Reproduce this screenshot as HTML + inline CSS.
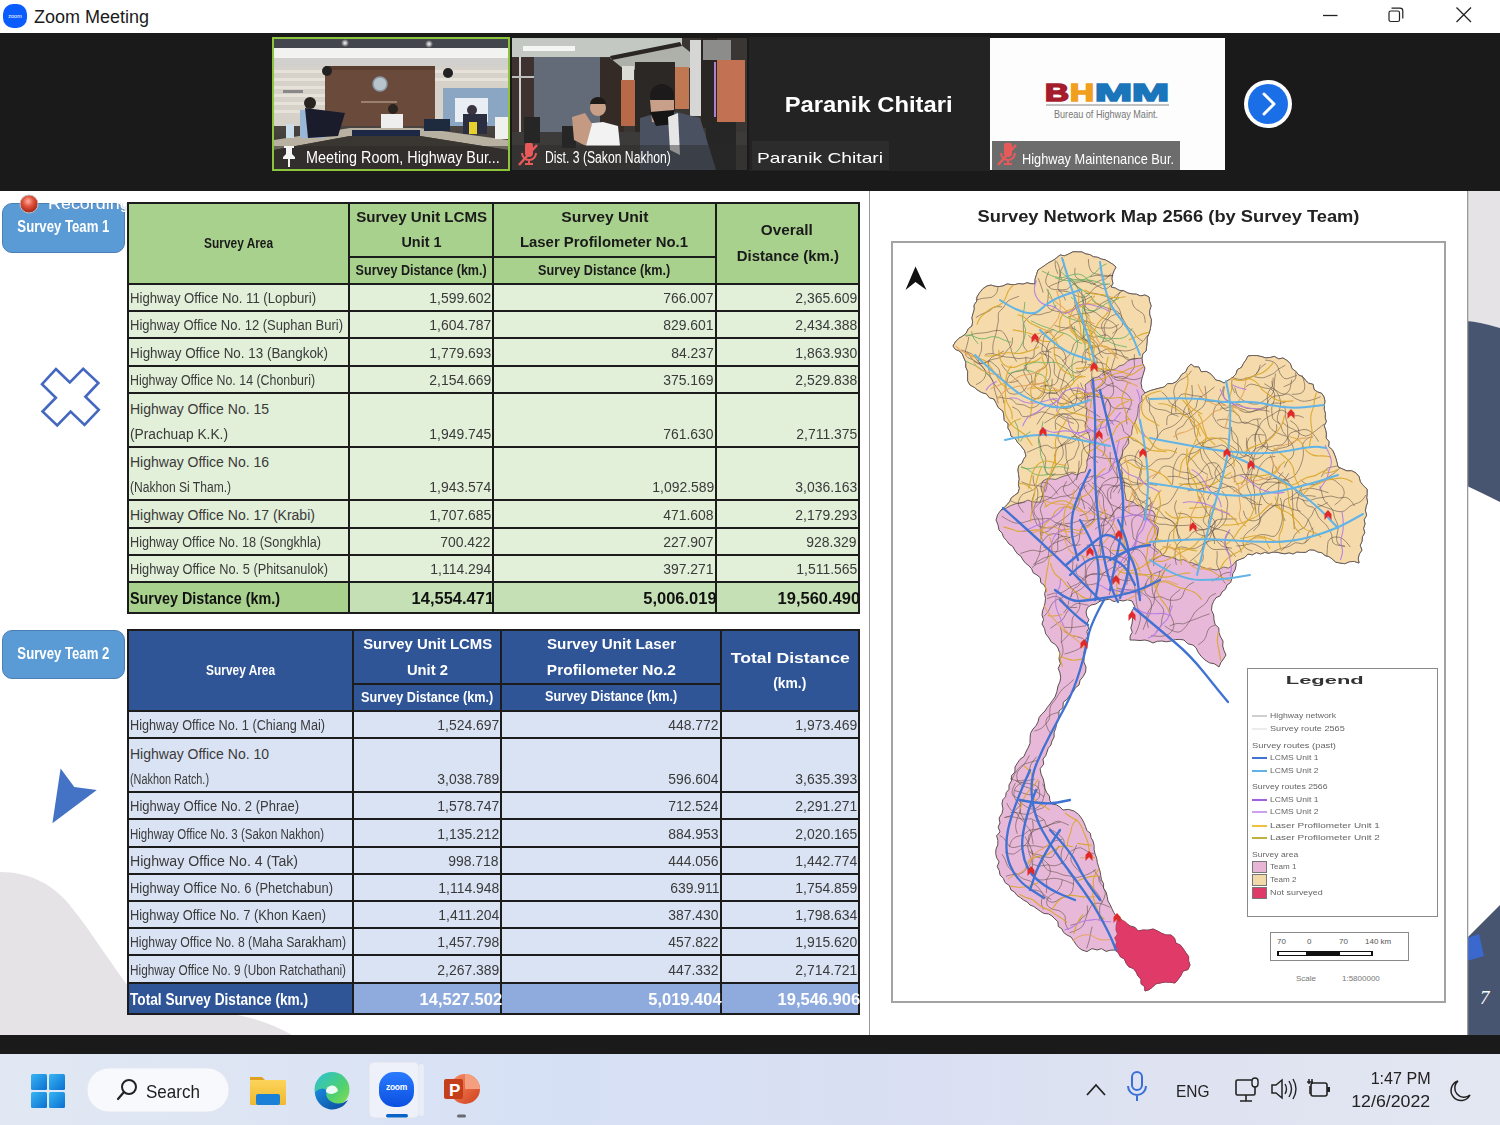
<!DOCTYPE html>
<html><head><meta charset="utf-8"><title>Zoom Meeting</title>
<style>
html,body{margin:0;padding:0;width:1500px;height:1125px;overflow:hidden;background:#fff;}
body{position:relative;font-family:'Liberation Sans',sans-serif;}
.t{position:absolute;white-space:nowrap;line-height:1;}
.b{position:absolute;box-sizing:border-box;}
svg{position:absolute;}
</style></head><body>

<div class="b" style="left:0px;top:0px;width:1500px;height:34px;background:#fff;"></div>
<svg style="left:3px;top:4px" width="24" height="24" viewBox="0 0 24 24"><rect x="0" y="0" width="24" height="24" rx="10" fill="#0b5cff"/><text x="12" y="14" font-family="Liberation Sans" font-size="5.5" fill="#fff" text-anchor="middle">zoom</text></svg>
<div class="t" style="top:8.0px;font-size:18px;color:#1b1b1b;font-family:'Liberation Sans',sans-serif;left:34.0px;transform-origin:0 0;">Zoom Meeting</div>
<svg style="left:1300px;top:0" width="200" height="34" viewBox="0 0 200 34">
<line x1="23" y1="15.5" x2="37.5" y2="15.5" stroke="#222" stroke-width="1.3"/>
<rect x="89" y="11" width="10.5" height="10.5" rx="1.8" fill="none" stroke="#222" stroke-width="1.2"/>
<path d="M91.5 8.2 H100 Q102.8 8.2 102.8 11 V18.5" fill="none" stroke="#222" stroke-width="1.2"/>
<path d="M156.5 7.5 L171 22 M171 7.5 L156.5 22" stroke="#222" stroke-width="1.3"/>
</svg>
<div class="b" style="left:0px;top:33px;width:1500px;height:158px;background:#1a1a1a;"></div>
<svg style="left:272px;top:37px;filter:blur(0.7px)" width="238" height="134" viewBox="272 37 238 134">
<defs>
<linearGradient id="t1floor" x1="0" y1="0" x2="0" y2="1"><stop offset="0" stop-color="#4a4540"/><stop offset="1" stop-color="#2e2b28"/></linearGradient>
<radialGradient id="lamp"><stop offset="0" stop-color="#fff"/><stop offset="1" stop-color="#fff" stop-opacity="0"/></radialGradient>
</defs>
<rect x="272" y="37" width="238" height="134" fill="#d6d2ca"/>
<rect x="274" y="39" width="234" height="9" fill="#43464c"/>
<circle cx="345" cy="43" r="4" fill="url(#lamp)"/><circle cx="429" cy="44" r="4" fill="url(#lamp)"/>
<rect x="274" y="48" width="234" height="10" fill="#f2f2f0"/>
<rect x="274" y="58" width="234" height="9" fill="#d2d0cc"/>
<g fill="#e6e2da"><rect x="274" y="70" width="52" height="3"/><rect x="274" y="78" width="52" height="3"/><rect x="274" y="86" width="52" height="3"/><rect x="274" y="94" width="52" height="3"/><rect x="274" y="102" width="52" height="3"/><rect x="274" y="110" width="52" height="3"/><rect x="435" y="70" width="73" height="3"/><rect x="435" y="78" width="73" height="3"/></g>
<rect x="283" y="90" width="20" height="3" fill="#888"/>
<rect x="325" y="66" width="110" height="63" fill="#6a4a3a"/>
<rect x="325" y="66" width="110" height="4" fill="#5a3e30"/>
<circle cx="380" cy="84" r="7" fill="#b8c4cc" stroke="#8a9aa8" stroke-width="1.5"/>
<rect x="361" y="101" width="36" height="2" fill="#9a8070"/>
<circle cx="327" cy="71" r="5" fill="#222"/><circle cx="448" cy="73" r="5" fill="#222"/>
<rect x="443" y="88" width="65" height="38" fill="#8aa6c2"/>
<rect x="455" y="98" width="33" height="24" fill="#e8eef4"/>
<rect x="272" y="126" width="238" height="45" fill="url(#t1floor)"/>
<path d="M274 140 L350 128 L420 128 L508 140 L508 150 L420 136 L350 136 L274 150 Z" fill="#b8b0a0"/>
<rect x="352" y="130" width="68" height="8" fill="#1c2844"/>
<path d="M274 150 L350 136 L420 136 L508 150 L508 171 L274 171 Z" fill="#3a3632"/>
<rect x="300" y="110" width="25" height="28" fill="#9ab6d6"/><circle cx="310" cy="103" r="6" fill="#2a2420"/>
<path d="M305 108 L345 113 L338 136 L308 138 Z" fill="#1a1c2c"/>
<rect x="286" y="124" width="8" height="14" fill="#c8dcea"/>
<rect x="381" y="114" width="22" height="14" fill="#eeeeee"/><circle cx="393" cy="109" r="5" fill="#2a2420"/>
<rect x="424" y="119" width="26" height="12" fill="#1e2a3e"/>
<rect x="463" y="114" width="24" height="20" fill="#2a2e40"/><rect x="469" y="122" width="8" height="12" fill="#e8d030"/><circle cx="472" cy="110" r="5" fill="#3a3440"/>
<rect x="495" y="117" width="13" height="22" fill="#f0f0ee"/>
<rect x="274" y="146" width="234" height="25" fill="#2a2826" opacity="0.55"/>
<rect x="273" y="38" width="236" height="132" fill="none" stroke="#8cc43c" stroke-width="2"/>
</svg>
<svg style="left:278px;top:144px" width="22" height="24" viewBox="0 0 22 24"><path d="M6 2 h10 v2 h-2 v6 l3 3 v2 h-5 v8 h-2 v-8 h-5 v-2 l3 -3 v-6 h-2 z" fill="#f4f4f4"/></svg>
<div class="t" style="top:150.4px;font-size:16px;color:#ffffff;font-family:'Liberation Sans',sans-serif;left:306.0px;transform-origin:0 0;transform:scaleX(0.897);">Meeting Room, Highway Bur...</div>
<svg style="left:512px;top:38px;filter:blur(0.7px)" width="235" height="132" viewBox="512 38 235 132">
<rect x="512" y="38" width="235" height="132" fill="#3a3634"/>
<rect x="512" y="38" width="170" height="19" fill="#c4c8c2"/>
<rect x="523" y="46" width="52" height="5" fill="#f4f6f4"/>
<rect x="512" y="57" width="22" height="80" fill="#3e3230"/><rect x="519" y="57" width="2" height="80" fill="#cfcfcf"/><rect x="512" y="76" width="22" height="2" fill="#bdbdbd"/>
<rect x="534" y="57" width="66" height="75" fill="#636a78"/>
<rect x="600" y="58" width="24" height="82" fill="#342a26"/>
<path d="M610 58 L680 44 L690 52 L690 68 L625 70 Z" fill="#aeb0aa"/><path d="M610 56 L680 42 L682 46 L612 60 Z" fill="#2a2624"/>
<rect x="622" y="66" width="12" height="14" fill="#dcdcd6"/>
<rect x="621" y="80" width="14" height="46" fill="#b86a48"/>
<rect x="635" y="62" width="40" height="80" fill="#2c2826"/>
<rect x="675" y="67" width="14" height="42" fill="#c07852"/>
<rect x="690" y="40" width="11" height="76" fill="#d6d6d4"/>
<rect x="701" y="38" width="16" height="90" fill="#2a2624"/>
<rect x="703" y="40" width="28" height="20" fill="#8c8c8a"/>
<rect x="714" y="62" width="2" height="55" fill="#b080d0"/>
<rect x="717" y="60" width="28" height="62" fill="#c27252"/>
<rect x="512" y="132" width="235" height="38" fill="#3c3b3a"/>
<rect x="524" y="117" width="16" height="26" fill="#262626"/>
<rect x="562" y="126" width="14" height="22" fill="#262626"/>
<path d="M584 124 L603 122 L618 126 L620 146 L586 146 Z" fill="#f2f2f2"/>
<circle cx="598" cy="108" r="8" fill="#c8a088"/><path d="M590 104 a8 7 0 0 1 16 0 z" fill="#1e1a18"/>
<path d="M572 117 L585 113 L592 124 L586 146 L574 140 Z" fill="#c49a82"/>
<rect x="706" y="122" width="30" height="48" fill="#262626"/>
<path d="M640 118 L668 110 L700 118 L716 170 L640 170 Z" fill="#4a5262"/>
<circle cx="662" cy="96" r="12" fill="#1c1a1a"/>
<path d="M650 100 L674 100 L674 124 L652 122 Z" fill="#c8a08a"/>
<path d="M650 112 L674 110 L674 124 L656 126 Z" fill="#151515"/>
<path d="M668 117 L678 113 L680 155 L670 150 Z" fill="#e6e6e6"/>
<rect x="512" y="145" width="235" height="25" fill="#2a2a2a" opacity="0.45"/>
</svg>
<svg style="left:515px;top:143px" width="26" height="24" viewBox="0 0 26 24"><path d="M10 3 a4 4 0 0 1 8 0 v7 a4 4 0 0 1 -8 0 z" fill="#e85a5a"/><path d="M7 10 a7 7 0 0 0 14 0 M14 17 v4 M10 21 h8" stroke="#e85a5a" stroke-width="2" fill="none"/><path d="M4 22 L22 2" stroke="#e85a5a" stroke-width="2.5"/></svg>
<div class="t" style="top:150.4px;font-size:16px;color:#ffffff;font-family:'Liberation Sans',sans-serif;left:545.0px;transform-origin:0 0;transform:scaleX(0.761);">Dist. 3 (Sakon Nakhon)</div>
<div class="b" style="left:749px;top:37px;width:241px;height:134px;background:#232323;"></div>
<div class="t" style="top:94.3px;font-size:22px;color:#ffffff;font-family:'Liberation Sans',sans-serif;font-weight:bold;left:791.4px;width:157.3px;transform-origin:77.6px 0;transform:scaleX(1.082);">Paranik Chitari</div>
<div class="b" style="left:752px;top:141px;width:137px;height:29px;background:#2c2c2c;"></div>
<div class="t" style="top:150.2px;font-size:15px;color:#ffffff;font-family:'Liberation Sans',sans-serif;left:757.0px;transform-origin:0 0;transform:scaleX(1.281);">Paranik Chitari</div>
<div class="b" style="left:990px;top:38px;width:235px;height:132px;background:#fdfdfd;"></div>
<svg style="left:1040px;top:80px" width="135" height="45" viewBox="0 0 135 45">
<text x="5" y="21" font-family="Liberation Sans" font-weight="bold" font-size="23" fill="#a51d2d" stroke="#a51d2d" stroke-width="1.6" textLength="24" lengthAdjust="spacingAndGlyphs">B</text>
<text x="30" y="21" font-family="Liberation Sans" font-weight="bold" font-size="23" fill="#f0a01e" stroke="#f0a01e" stroke-width="1.6" textLength="24" lengthAdjust="spacingAndGlyphs">H</text>
<text x="55" y="21" font-family="Liberation Sans" font-weight="bold" font-size="23" fill="#1b75bb" stroke="#1b75bb" stroke-width="1.6" textLength="74" lengthAdjust="spacingAndGlyphs">MM</text>
<rect x="6" y="24" width="123" height="2" fill="#9a9a9a" opacity="0.6"/>
<text x="66" y="38" font-family="Liberation Sans" font-size="11" fill="#777" text-anchor="middle" textLength="104" lengthAdjust="spacingAndGlyphs">Bureau of Highway Maint.</text>
</svg>
<div class="b" style="left:992px;top:141px;width:188px;height:29px;background:#6c6c6c;"></div>
<svg style="left:994px;top:143px" width="26" height="24" viewBox="0 0 26 24"><path d="M10 3 a4 4 0 0 1 8 0 v7 a4 4 0 0 1 -8 0 z" fill="#e85a5a"/><path d="M7 10 a7 7 0 0 0 14 0 M14 17 v4 M10 21 h8" stroke="#e85a5a" stroke-width="2" fill="none"/><path d="M4 22 L22 2" stroke="#e85a5a" stroke-width="2.5"/></svg>
<div class="t" style="top:151.2px;font-size:15px;color:#ffffff;font-family:'Liberation Sans',sans-serif;left:1022.0px;transform-origin:0 0;transform:scaleX(0.852);">Highway Maintenance Bur.</div>
<svg style="left:1242px;top:78px" width="52" height="52" viewBox="0 0 52 52"><circle cx="26" cy="26" r="24" fill="#fff"/><circle cx="26" cy="26" r="20" fill="#1a6fe6"/><path d="M22 16 L32 26 L22 36" stroke="#fff" stroke-width="3" fill="none" stroke-linecap="round" stroke-linejoin="round"/></svg>
<div class="b" style="left:0px;top:191px;width:1500px;height:844px;background:#ffffff;"></div>
<svg style="left:0;top:860px" width="300" height="175" viewBox="0 860 300 175"><path d="M0 872 C30 872 55 885 72 908 C90 930 105 955 128 986 C150 1010 240 1003 292 1035 L0 1035 Z" fill="#e6e3e7"/></svg>
<div class="b" style="left:869px;top:191px;width:1px;height:844px;background:#9a9a9a;"></div>
<div class="b" style="left:2px;top:203px;width:123px;height:50px;background:#5b9bd5;border:1.5px solid #4a7fb5;border-radius:10px;"></div>
<div class="t" style="top:217.6px;font-size:17px;color:#ffffff;font-family:'Liberation Sans',sans-serif;font-weight:bold;left:3.6px;width:120.7px;transform-origin:59.4px 0;transform:scaleX(0.775);">Survey Team 1</div>
<div class="b" style="left:2px;top:630px;width:123px;height:49px;background:#5b9bd5;border:1.5px solid #4a7fb5;border-radius:10px;"></div>
<div class="t" style="top:644.5px;font-size:17px;color:#ffffff;font-family:'Liberation Sans',sans-serif;font-weight:bold;left:3.6px;width:120.7px;transform-origin:59.4px 0;transform:scaleX(0.775);">Survey Team 2</div>
<svg style="left:18px;top:193px" width="22" height="22" viewBox="0 0 22 22"><defs><radialGradient id="rec" cx="0.45" cy="0.35" r="0.6"><stop offset="0" stop-color="#ffb0a0"/><stop offset="0.5" stop-color="#e0503a"/><stop offset="1" stop-color="#a82a1c"/></radialGradient></defs><circle cx="11" cy="11" r="9" fill="url(#rec)" stroke="#c0c0c0" stroke-width="1"/></svg>
<div class="b" style="left:40px;top:203px;width:90px;height:12px;overflow:hidden"><div class="t" style="left:8px;top:-6.6px;font-size:16px;color:#fff;transform:scaleX(1.12);transform-origin:0 0;text-shadow:0 0 1px #7890b8">Recording</div></div>
<svg style="left:35px;top:360px" width="72" height="72" viewBox="35 360 72 72"><path d="M55.9 369 L69.8 382.5 L83.2 368.9 L98.4 383 L85.4 396.8 L98.8 409.8 L84.5 425 L70.6 411.5 L57.2 425.4 L42.5 411.5 L55.9 397.7 L42 384.2 Z" fill="none" stroke="#4468c0" stroke-width="2.6" stroke-linejoin="miter"/></svg>
<svg style="left:45px;top:760px" width="60" height="70" viewBox="45 760 60 70"><path d="M60.6 768.6 L74.3 787 L96.8 790 L52.4 823.3 Z" fill="#4472c4"/></svg>
<div class="b" style="left:128px;top:203px;width:731px;height:81px;background:#a9d18e;"></div>
<div class="b" style="left:128px;top:284px;width:731px;height:298px;background:#e2efd9;"></div>
<div class="b" style="left:128px;top:582px;width:221px;height:31px;background:#a9d18e;"></div>
<div class="b" style="left:349px;top:582px;width:510px;height:31px;background:#c5e0b4;"></div>
<div class="b" style="left:127px;top:202px;width:733px;height:2px;background:#1c1c1c;"></div>
<div class="b" style="left:127px;top:283px;width:733px;height:2px;background:#1c1c1c;"></div>
<div class="b" style="left:127px;top:283px;width:733px;height:2px;background:#1c1c1c;"></div>
<div class="b" style="left:127px;top:310px;width:733px;height:2px;background:#1c1c1c;"></div>
<div class="b" style="left:127px;top:337px;width:733px;height:2px;background:#1c1c1c;"></div>
<div class="b" style="left:127px;top:365px;width:733px;height:2px;background:#1c1c1c;"></div>
<div class="b" style="left:127px;top:392px;width:733px;height:2px;background:#1c1c1c;"></div>
<div class="b" style="left:127px;top:446px;width:733px;height:2px;background:#1c1c1c;"></div>
<div class="b" style="left:127px;top:499px;width:733px;height:2px;background:#1c1c1c;"></div>
<div class="b" style="left:127px;top:527px;width:733px;height:2px;background:#1c1c1c;"></div>
<div class="b" style="left:127px;top:554px;width:733px;height:2px;background:#1c1c1c;"></div>
<div class="b" style="left:127px;top:581px;width:733px;height:2px;background:#1c1c1c;"></div>
<div class="b" style="left:127px;top:612px;width:733px;height:2px;background:#1c1c1c;"></div>
<div class="b" style="left:348px;top:256px;width:369px;height:2px;background:#1c1c1c;"></div>
<div class="b" style="left:127px;top:202px;width:2px;height:412px;background:#1c1c1c;"></div>
<div class="b" style="left:348px;top:202px;width:2px;height:412px;background:#1c1c1c;"></div>
<div class="b" style="left:492px;top:202px;width:2px;height:412px;background:#1c1c1c;"></div>
<div class="b" style="left:715px;top:202px;width:2px;height:412px;background:#1c1c1c;"></div>
<div class="b" style="left:858px;top:202px;width:2px;height:412px;background:#1c1c1c;"></div>
<div class="t" style="top:236.1px;font-size:14px;color:#1a1a1a;font-family:'Liberation Sans',sans-serif;font-weight:bold;left:198.4px;width:83.2px;transform-origin:40.6px 0;transform:scaleX(0.850);">Survey Area</div>
<div class="t" style="top:209.8px;font-size:14px;color:#1a1a1a;font-family:'Liberation Sans',sans-serif;font-weight:bold;left:360.8px;width:123.3px;transform-origin:60.7px 0;transform:scaleX(1.080);">Survey Unit LCMS</div>
<div class="t" style="top:235.1px;font-size:14px;color:#1a1a1a;font-family:'Liberation Sans',sans-serif;font-weight:bold;left:401.6px;width:40.9px;transform-origin:19.4px 0;transform:scaleX(1.029);">Unit 1</div>
<div class="t" style="top:263.1px;font-size:14px;color:#1a1a1a;font-family:'Liberation Sans',sans-serif;font-weight:bold;left:348.4px;width:148.2px;transform-origin:73.1px 0;transform:scaleX(0.896);">Survey Distance (km.)</div>
<div class="t" style="top:209.6px;font-size:14px;color:#1a1a1a;font-family:'Liberation Sans',sans-serif;font-weight:bold;left:565.6px;width:79.8px;transform-origin:38.9px 0;transform:scaleX(1.119);">Survey Unit</div>
<div class="t" style="top:235.1px;font-size:14px;color:#1a1a1a;font-family:'Liberation Sans',sans-serif;font-weight:bold;left:525.0px;width:159.9px;transform-origin:79.0px 0;transform:scaleX(1.064);">Laser Profilometer No.1</div>
<div class="t" style="top:263.1px;font-size:14px;color:#1a1a1a;font-family:'Liberation Sans',sans-serif;font-weight:bold;left:531.4px;width:148.2px;transform-origin:73.1px 0;transform:scaleX(0.903);">Survey Distance (km.)</div>
<div class="t" style="top:223.1px;font-size:14px;color:#1a1a1a;font-family:'Liberation Sans',sans-serif;font-weight:bold;left:763.3px;width:49.5px;transform-origin:23.7px 0;transform:scaleX(1.095);">Overall</div>
<div class="t" style="top:249.1px;font-size:14px;color:#1a1a1a;font-family:'Liberation Sans',sans-serif;font-weight:bold;left:740.2px;width:97.7px;transform-origin:47.8px 0;transform:scaleX(1.066);">Distance (km.)</div>
<div class="t" style="top:291.1px;font-size:14px;color:#3a3a3a;font-family:'Liberation Sans',sans-serif;left:130.0px;transform-origin:0 0;transform:scaleX(0.940);">Highway Office No. 11 (Lopburi)</div>
<div class="t" style="top:291.1px;font-size:14px;color:#3a3a3a;font-family:'Liberation Sans',sans-serif;left:428.8px;width:64.2px;transform-origin:62.2px 0;transform:scaleX(0.995);">1,599.602</div>
<div class="t" style="top:291.1px;font-size:14px;color:#3a3a3a;font-family:'Liberation Sans',sans-serif;left:663.4px;width:52.6px;transform-origin:50.6px 0;transform:scaleX(0.995);">766.007</div>
<div class="t" style="top:291.1px;font-size:14px;color:#3a3a3a;font-family:'Liberation Sans',sans-serif;left:794.8px;width:64.2px;transform-origin:62.2px 0;transform:scaleX(0.995);">2,365.609</div>
<div class="t" style="top:318.1px;font-size:14px;color:#3a3a3a;font-family:'Liberation Sans',sans-serif;left:130.0px;transform-origin:0 0;transform:scaleX(0.929);">Highway Office No. 12 (Suphan Buri)</div>
<div class="t" style="top:318.1px;font-size:14px;color:#3a3a3a;font-family:'Liberation Sans',sans-serif;left:428.8px;width:64.2px;transform-origin:62.2px 0;transform:scaleX(0.995);">1,604.787</div>
<div class="t" style="top:318.1px;font-size:14px;color:#3a3a3a;font-family:'Liberation Sans',sans-serif;left:663.4px;width:52.6px;transform-origin:50.6px 0;transform:scaleX(0.995);">829.601</div>
<div class="t" style="top:318.1px;font-size:14px;color:#3a3a3a;font-family:'Liberation Sans',sans-serif;left:794.8px;width:64.2px;transform-origin:62.2px 0;transform:scaleX(0.995);">2,434.388</div>
<div class="t" style="top:346.1px;font-size:14px;color:#3a3a3a;font-family:'Liberation Sans',sans-serif;left:130.0px;transform-origin:0 0;transform:scaleX(0.958);">Highway Office No. 13 (Bangkok)</div>
<div class="t" style="top:346.1px;font-size:14px;color:#3a3a3a;font-family:'Liberation Sans',sans-serif;left:428.8px;width:64.2px;transform-origin:62.2px 0;transform:scaleX(0.995);">1,779.693</div>
<div class="t" style="top:346.1px;font-size:14px;color:#3a3a3a;font-family:'Liberation Sans',sans-serif;left:671.2px;width:44.8px;transform-origin:42.8px 0;transform:scaleX(0.995);">84.237</div>
<div class="t" style="top:346.1px;font-size:14px;color:#3a3a3a;font-family:'Liberation Sans',sans-serif;left:794.8px;width:64.2px;transform-origin:62.2px 0;transform:scaleX(0.995);">1,863.930</div>
<div class="t" style="top:373.1px;font-size:14px;color:#3a3a3a;font-family:'Liberation Sans',sans-serif;left:130.0px;transform-origin:0 0;transform:scaleX(0.885);">Highway Office No. 14 (Chonburi)</div>
<div class="t" style="top:373.1px;font-size:14px;color:#3a3a3a;font-family:'Liberation Sans',sans-serif;left:428.8px;width:64.2px;transform-origin:62.2px 0;transform:scaleX(0.995);">2,154.669</div>
<div class="t" style="top:373.1px;font-size:14px;color:#3a3a3a;font-family:'Liberation Sans',sans-serif;left:663.4px;width:52.6px;transform-origin:50.6px 0;transform:scaleX(0.995);">375.169</div>
<div class="t" style="top:373.1px;font-size:14px;color:#3a3a3a;font-family:'Liberation Sans',sans-serif;left:794.8px;width:64.2px;transform-origin:62.2px 0;transform:scaleX(0.995);">2,529.838</div>
<div class="t" style="top:401.6px;font-size:14px;color:#3a3a3a;font-family:'Liberation Sans',sans-serif;left:130.0px;transform-origin:0 0;">Highway Office No. 15</div>
<div class="t" style="top:427.1px;font-size:14px;color:#3a3a3a;font-family:'Liberation Sans',sans-serif;left:130.0px;transform-origin:0 0;transform:scaleX(0.984);">(Prachuap K.K.)</div>
<div class="t" style="top:427.1px;font-size:14px;color:#3a3a3a;font-family:'Liberation Sans',sans-serif;left:428.8px;width:64.2px;transform-origin:62.2px 0;transform:scaleX(0.995);">1,949.745</div>
<div class="t" style="top:427.1px;font-size:14px;color:#3a3a3a;font-family:'Liberation Sans',sans-serif;left:663.4px;width:52.6px;transform-origin:50.6px 0;transform:scaleX(0.995);">761.630</div>
<div class="t" style="top:427.1px;font-size:14px;color:#3a3a3a;font-family:'Liberation Sans',sans-serif;left:795.8px;width:63.2px;transform-origin:61.2px 0;transform:scaleX(0.995);">2,711.375</div>
<div class="t" style="top:454.6px;font-size:14px;color:#3a3a3a;font-family:'Liberation Sans',sans-serif;left:130.0px;transform-origin:0 0;">Highway Office No. 16</div>
<div class="t" style="top:480.1px;font-size:14px;color:#3a3a3a;font-family:'Liberation Sans',sans-serif;left:130.0px;transform-origin:0 0;transform:scaleX(0.862);">(Nakhon Si Tham.)</div>
<div class="t" style="top:480.1px;font-size:14px;color:#3a3a3a;font-family:'Liberation Sans',sans-serif;left:428.8px;width:64.2px;transform-origin:62.2px 0;transform:scaleX(0.995);">1,943.574</div>
<div class="t" style="top:480.1px;font-size:14px;color:#3a3a3a;font-family:'Liberation Sans',sans-serif;left:651.8px;width:64.2px;transform-origin:62.2px 0;transform:scaleX(0.995);">1,092.589</div>
<div class="t" style="top:480.1px;font-size:14px;color:#3a3a3a;font-family:'Liberation Sans',sans-serif;left:794.8px;width:64.2px;transform-origin:62.2px 0;transform:scaleX(0.995);">3,036.163</div>
<div class="t" style="top:508.1px;font-size:14px;color:#3a3a3a;font-family:'Liberation Sans',sans-serif;left:130.0px;transform-origin:0 0;">Highway Office No. 17 (Krabi)</div>
<div class="t" style="top:508.1px;font-size:14px;color:#3a3a3a;font-family:'Liberation Sans',sans-serif;left:428.8px;width:64.2px;transform-origin:62.2px 0;transform:scaleX(0.995);">1,707.685</div>
<div class="t" style="top:508.1px;font-size:14px;color:#3a3a3a;font-family:'Liberation Sans',sans-serif;left:663.4px;width:52.6px;transform-origin:50.6px 0;transform:scaleX(0.995);">471.608</div>
<div class="t" style="top:508.1px;font-size:14px;color:#3a3a3a;font-family:'Liberation Sans',sans-serif;left:794.8px;width:64.2px;transform-origin:62.2px 0;transform:scaleX(0.995);">2,179.293</div>
<div class="t" style="top:535.1px;font-size:14px;color:#3a3a3a;font-family:'Liberation Sans',sans-serif;left:130.0px;transform-origin:0 0;transform:scaleX(0.907);">Highway Office No. 18 (Songkhla)</div>
<div class="t" style="top:535.1px;font-size:14px;color:#3a3a3a;font-family:'Liberation Sans',sans-serif;left:440.4px;width:52.6px;transform-origin:50.6px 0;transform:scaleX(0.995);">700.422</div>
<div class="t" style="top:535.1px;font-size:14px;color:#3a3a3a;font-family:'Liberation Sans',sans-serif;left:663.4px;width:52.6px;transform-origin:50.6px 0;transform:scaleX(0.995);">227.907</div>
<div class="t" style="top:535.1px;font-size:14px;color:#3a3a3a;font-family:'Liberation Sans',sans-serif;left:806.4px;width:52.6px;transform-origin:50.6px 0;transform:scaleX(0.995);">928.329</div>
<div class="t" style="top:562.1px;font-size:14px;color:#3a3a3a;font-family:'Liberation Sans',sans-serif;left:130.0px;transform-origin:0 0;transform:scaleX(0.913);">Highway Office No. 5 (Phitsanulok)</div>
<div class="t" style="top:562.1px;font-size:14px;color:#3a3a3a;font-family:'Liberation Sans',sans-serif;left:429.8px;width:63.2px;transform-origin:61.2px 0;transform:scaleX(0.995);">1,114.294</div>
<div class="t" style="top:562.1px;font-size:14px;color:#3a3a3a;font-family:'Liberation Sans',sans-serif;left:663.4px;width:52.6px;transform-origin:50.6px 0;transform:scaleX(0.995);">397.271</div>
<div class="t" style="top:562.1px;font-size:14px;color:#3a3a3a;font-family:'Liberation Sans',sans-serif;left:795.8px;width:63.2px;transform-origin:61.2px 0;transform:scaleX(0.995);">1,511.565</div>
<div class="t" style="top:589.5px;font-size:17px;color:#111;font-family:'Liberation Sans',sans-serif;font-weight:bold;left:130.0px;transform-origin:0 0;transform:scaleX(0.845);">Survey Distance (km.)</div>
<div class="t" style="top:589.5px;font-size:17px;color:#111;font-family:'Liberation Sans',sans-serif;font-weight:bold;left:408.9px;width:87.1px;transform-origin:85.1px 0;transform:scaleX(0.970);">14,554.471</div>
<div class="t" style="top:589.5px;font-size:17px;color:#111;font-family:'Liberation Sans',sans-serif;font-weight:bold;left:641.4px;width:77.6px;transform-origin:75.6px 0;transform:scaleX(0.970);">5,006.019</div>
<div class="t" style="top:589.5px;font-size:17px;color:#111;font-family:'Liberation Sans',sans-serif;font-weight:bold;left:774.9px;width:87.1px;transform-origin:85.1px 0;transform:scaleX(0.970);">19,560.490</div>
<div class="b" style="left:128px;top:630px;width:731px;height:81px;background:#2f5597;"></div>
<div class="b" style="left:128px;top:711px;width:731px;height:272px;background:#dae3f3;"></div>
<div class="b" style="left:128px;top:983px;width:225px;height:31px;background:#2f5597;"></div>
<div class="b" style="left:353px;top:983px;width:506px;height:31px;background:#8faadc;"></div>
<div class="b" style="left:127px;top:629px;width:733px;height:2px;background:#1c1c1c;"></div>
<div class="b" style="left:127px;top:710px;width:733px;height:2px;background:#1c1c1c;"></div>
<div class="b" style="left:127px;top:710px;width:733px;height:2px;background:#1c1c1c;"></div>
<div class="b" style="left:127px;top:737px;width:733px;height:2px;background:#1c1c1c;"></div>
<div class="b" style="left:127px;top:791px;width:733px;height:2px;background:#1c1c1c;"></div>
<div class="b" style="left:127px;top:818px;width:733px;height:2px;background:#1c1c1c;"></div>
<div class="b" style="left:127px;top:846px;width:733px;height:2px;background:#1c1c1c;"></div>
<div class="b" style="left:127px;top:873px;width:733px;height:2px;background:#1c1c1c;"></div>
<div class="b" style="left:127px;top:900px;width:733px;height:2px;background:#1c1c1c;"></div>
<div class="b" style="left:127px;top:927px;width:733px;height:2px;background:#1c1c1c;"></div>
<div class="b" style="left:127px;top:954px;width:733px;height:2px;background:#1c1c1c;"></div>
<div class="b" style="left:127px;top:982px;width:733px;height:2px;background:#1c1c1c;"></div>
<div class="b" style="left:127px;top:1013px;width:733px;height:2px;background:#1c1c1c;"></div>
<div class="b" style="left:352px;top:683px;width:370px;height:2px;background:#1c1c1c;"></div>
<div class="b" style="left:127px;top:629px;width:2px;height:386px;background:#1c1c1c;"></div>
<div class="b" style="left:352px;top:629px;width:2px;height:386px;background:#1c1c1c;"></div>
<div class="b" style="left:500px;top:629px;width:2px;height:386px;background:#1c1c1c;"></div>
<div class="b" style="left:720px;top:629px;width:2px;height:386px;background:#1c1c1c;"></div>
<div class="b" style="left:858px;top:629px;width:2px;height:386px;background:#1c1c1c;"></div>
<div class="t" style="top:663.1px;font-size:14px;color:#ffffff;font-family:'Liberation Sans',sans-serif;font-weight:bold;left:199.9px;width:83.2px;transform-origin:40.6px 0;transform:scaleX(0.850);">Survey Area</div>
<div class="t" style="top:637.1px;font-size:14px;color:#ffffff;font-family:'Liberation Sans',sans-serif;font-weight:bold;left:366.8px;width:123.3px;transform-origin:60.7px 0;transform:scaleX(1.063);">Survey Unit LCMS</div>
<div class="t" style="top:663.1px;font-size:14px;color:#ffffff;font-family:'Liberation Sans',sans-serif;font-weight:bold;left:408.1px;width:40.9px;transform-origin:19.4px 0;transform:scaleX(1.055);">Unit 2</div>
<div class="t" style="top:690.1px;font-size:14px;color:#ffffff;font-family:'Liberation Sans',sans-serif;font-weight:bold;left:353.9px;width:148.2px;transform-origin:73.1px 0;transform:scaleX(0.903);">Survey Distance (km.)</div>
<div class="t" style="top:637.4px;font-size:14px;color:#ffffff;font-family:'Liberation Sans',sans-serif;font-weight:bold;left:552.0px;width:121.0px;transform-origin:59.5px 0;transform:scaleX(1.084);">Survey Unit Laser</div>
<div class="t" style="top:662.8px;font-size:14px;color:#ffffff;font-family:'Liberation Sans',sans-serif;font-weight:bold;left:553.2px;width:118.7px;transform-origin:58.3px 0;transform:scaleX(1.106);">Profilometer No.2</div>
<div class="t" style="top:689.4px;font-size:14px;color:#ffffff;font-family:'Liberation Sans',sans-serif;font-weight:bold;left:537.9px;width:148.2px;transform-origin:73.1px 0;transform:scaleX(0.903);">Survey Distance (km.)</div>
<div class="t" style="top:650.8px;font-size:14px;color:#ffffff;font-family:'Liberation Sans',sans-serif;font-weight:bold;left:742.7px;width:96.6px;transform-origin:47.3px 0;transform:scaleX(1.258);">Total Distance</div>
<div class="t" style="top:676.1px;font-size:14px;color:#ffffff;font-family:'Liberation Sans',sans-serif;font-weight:bold;left:773.3px;width:35.4px;transform-origin:16.7px 0;transform:scaleX(0.987);">(km.)</div>
<div class="t" style="top:718.1px;font-size:14px;color:#3a3a3a;font-family:'Liberation Sans',sans-serif;left:130.0px;transform-origin:0 0;transform:scaleX(0.906);">Highway Office No. 1 (Chiang Mai)</div>
<div class="t" style="top:718.1px;font-size:14px;color:#3a3a3a;font-family:'Liberation Sans',sans-serif;left:436.8px;width:64.2px;transform-origin:62.2px 0;transform:scaleX(0.995);">1,524.697</div>
<div class="t" style="top:718.1px;font-size:14px;color:#3a3a3a;font-family:'Liberation Sans',sans-serif;left:668.4px;width:52.6px;transform-origin:50.6px 0;transform:scaleX(0.995);">448.772</div>
<div class="t" style="top:718.1px;font-size:14px;color:#3a3a3a;font-family:'Liberation Sans',sans-serif;left:794.8px;width:64.2px;transform-origin:62.2px 0;transform:scaleX(0.995);">1,973.469</div>
<div class="t" style="top:746.6px;font-size:14px;color:#3a3a3a;font-family:'Liberation Sans',sans-serif;left:130.0px;transform-origin:0 0;">Highway Office No. 10</div>
<div class="t" style="top:772.1px;font-size:14px;color:#3a3a3a;font-family:'Liberation Sans',sans-serif;left:130.0px;transform-origin:0 0;transform:scaleX(0.775);">(Nakhon Ratch.)</div>
<div class="t" style="top:772.1px;font-size:14px;color:#3a3a3a;font-family:'Liberation Sans',sans-serif;left:436.8px;width:64.2px;transform-origin:62.2px 0;transform:scaleX(0.995);">3,038.789</div>
<div class="t" style="top:772.1px;font-size:14px;color:#3a3a3a;font-family:'Liberation Sans',sans-serif;left:668.4px;width:52.6px;transform-origin:50.6px 0;transform:scaleX(0.995);">596.604</div>
<div class="t" style="top:772.1px;font-size:14px;color:#3a3a3a;font-family:'Liberation Sans',sans-serif;left:794.8px;width:64.2px;transform-origin:62.2px 0;transform:scaleX(0.995);">3,635.393</div>
<div class="t" style="top:799.1px;font-size:14px;color:#3a3a3a;font-family:'Liberation Sans',sans-serif;left:130.0px;transform-origin:0 0;transform:scaleX(0.930);">Highway Office No. 2 (Phrae)</div>
<div class="t" style="top:799.1px;font-size:14px;color:#3a3a3a;font-family:'Liberation Sans',sans-serif;left:436.8px;width:64.2px;transform-origin:62.2px 0;transform:scaleX(0.995);">1,578.747</div>
<div class="t" style="top:799.1px;font-size:14px;color:#3a3a3a;font-family:'Liberation Sans',sans-serif;left:668.4px;width:52.6px;transform-origin:50.6px 0;transform:scaleX(0.995);">712.524</div>
<div class="t" style="top:799.1px;font-size:14px;color:#3a3a3a;font-family:'Liberation Sans',sans-serif;left:794.8px;width:64.2px;transform-origin:62.2px 0;transform:scaleX(0.995);">2,291.271</div>
<div class="t" style="top:827.1px;font-size:14px;color:#3a3a3a;font-family:'Liberation Sans',sans-serif;left:130.0px;transform-origin:0 0;transform:scaleX(0.821);">Highway Office No. 3 (Sakon Nakhon)</div>
<div class="t" style="top:827.1px;font-size:14px;color:#3a3a3a;font-family:'Liberation Sans',sans-serif;left:436.8px;width:64.2px;transform-origin:62.2px 0;transform:scaleX(0.995);">1,135.212</div>
<div class="t" style="top:827.1px;font-size:14px;color:#3a3a3a;font-family:'Liberation Sans',sans-serif;left:668.4px;width:52.6px;transform-origin:50.6px 0;transform:scaleX(0.995);">884.953</div>
<div class="t" style="top:827.1px;font-size:14px;color:#3a3a3a;font-family:'Liberation Sans',sans-serif;left:794.8px;width:64.2px;transform-origin:62.2px 0;transform:scaleX(0.995);">2,020.165</div>
<div class="t" style="top:854.1px;font-size:14px;color:#3a3a3a;font-family:'Liberation Sans',sans-serif;left:130.0px;transform-origin:0 0;transform:scaleX(1.011);">Highway Office No. 4 (Tak)</div>
<div class="t" style="top:854.1px;font-size:14px;color:#3a3a3a;font-family:'Liberation Sans',sans-serif;left:448.4px;width:52.6px;transform-origin:50.6px 0;transform:scaleX(0.995);">998.718</div>
<div class="t" style="top:854.1px;font-size:14px;color:#3a3a3a;font-family:'Liberation Sans',sans-serif;left:668.4px;width:52.6px;transform-origin:50.6px 0;transform:scaleX(0.995);">444.056</div>
<div class="t" style="top:854.1px;font-size:14px;color:#3a3a3a;font-family:'Liberation Sans',sans-serif;left:794.8px;width:64.2px;transform-origin:62.2px 0;transform:scaleX(0.995);">1,442.774</div>
<div class="t" style="top:881.1px;font-size:14px;color:#3a3a3a;font-family:'Liberation Sans',sans-serif;left:130.0px;transform-origin:0 0;transform:scaleX(0.926);">Highway Office No. 6 (Phetchabun)</div>
<div class="t" style="top:881.1px;font-size:14px;color:#3a3a3a;font-family:'Liberation Sans',sans-serif;left:437.8px;width:63.2px;transform-origin:61.2px 0;transform:scaleX(0.995);">1,114.948</div>
<div class="t" style="top:881.1px;font-size:14px;color:#3a3a3a;font-family:'Liberation Sans',sans-serif;left:669.5px;width:51.5px;transform-origin:49.5px 0;transform:scaleX(0.995);">639.911</div>
<div class="t" style="top:881.1px;font-size:14px;color:#3a3a3a;font-family:'Liberation Sans',sans-serif;left:794.8px;width:64.2px;transform-origin:62.2px 0;transform:scaleX(0.995);">1,754.859</div>
<div class="t" style="top:908.1px;font-size:14px;color:#3a3a3a;font-family:'Liberation Sans',sans-serif;left:130.0px;transform-origin:0 0;transform:scaleX(0.917);">Highway Office No. 7 (Khon Kaen)</div>
<div class="t" style="top:908.1px;font-size:14px;color:#3a3a3a;font-family:'Liberation Sans',sans-serif;left:437.8px;width:63.2px;transform-origin:61.2px 0;transform:scaleX(0.995);">1,411.204</div>
<div class="t" style="top:908.1px;font-size:14px;color:#3a3a3a;font-family:'Liberation Sans',sans-serif;left:668.4px;width:52.6px;transform-origin:50.6px 0;transform:scaleX(0.995);">387.430</div>
<div class="t" style="top:908.1px;font-size:14px;color:#3a3a3a;font-family:'Liberation Sans',sans-serif;left:794.8px;width:64.2px;transform-origin:62.2px 0;transform:scaleX(0.995);">1,798.634</div>
<div class="t" style="top:935.1px;font-size:14px;color:#3a3a3a;font-family:'Liberation Sans',sans-serif;left:130.0px;transform-origin:0 0;transform:scaleX(0.874);">Highway Office No. 8 (Maha Sarakham)</div>
<div class="t" style="top:935.1px;font-size:14px;color:#3a3a3a;font-family:'Liberation Sans',sans-serif;left:436.8px;width:64.2px;transform-origin:62.2px 0;transform:scaleX(0.995);">1,457.798</div>
<div class="t" style="top:935.1px;font-size:14px;color:#3a3a3a;font-family:'Liberation Sans',sans-serif;left:668.4px;width:52.6px;transform-origin:50.6px 0;transform:scaleX(0.995);">457.822</div>
<div class="t" style="top:935.1px;font-size:14px;color:#3a3a3a;font-family:'Liberation Sans',sans-serif;left:794.8px;width:64.2px;transform-origin:62.2px 0;transform:scaleX(0.995);">1,915.620</div>
<div class="t" style="top:963.1px;font-size:14px;color:#3a3a3a;font-family:'Liberation Sans',sans-serif;left:130.0px;transform-origin:0 0;transform:scaleX(0.842);">Highway Office No. 9 (Ubon Ratchathani)</div>
<div class="t" style="top:963.1px;font-size:14px;color:#3a3a3a;font-family:'Liberation Sans',sans-serif;left:436.8px;width:64.2px;transform-origin:62.2px 0;transform:scaleX(0.995);">2,267.389</div>
<div class="t" style="top:963.1px;font-size:14px;color:#3a3a3a;font-family:'Liberation Sans',sans-serif;left:668.4px;width:52.6px;transform-origin:50.6px 0;transform:scaleX(0.995);">447.332</div>
<div class="t" style="top:963.1px;font-size:14px;color:#3a3a3a;font-family:'Liberation Sans',sans-serif;left:794.8px;width:64.2px;transform-origin:62.2px 0;transform:scaleX(0.995);">2,714.721</div>
<div class="t" style="top:990.5px;font-size:17px;color:#ffffff;font-family:'Liberation Sans',sans-serif;font-weight:bold;left:130.0px;transform-origin:0 0;transform:scaleX(0.803);">Total Survey Distance (km.)</div>
<div class="t" style="top:990.5px;font-size:17px;color:#ffffff;font-family:'Liberation Sans',sans-serif;font-weight:bold;left:416.9px;width:87.1px;transform-origin:85.1px 0;transform:scaleX(0.970);">14,527.502</div>
<div class="t" style="top:990.5px;font-size:17px;color:#ffffff;font-family:'Liberation Sans',sans-serif;font-weight:bold;left:646.4px;width:77.6px;transform-origin:75.6px 0;transform:scaleX(0.970);">5,019.404</div>
<div class="t" style="top:990.5px;font-size:17px;color:#ffffff;font-family:'Liberation Sans',sans-serif;font-weight:bold;left:774.9px;width:87.1px;transform-origin:85.1px 0;transform:scaleX(0.970);">19,546.906</div>
<div class="t" style="top:208.1px;font-size:17px;color:#222;font-family:'Liberation Sans',sans-serif;font-weight:bold;left:990.6px;width:356.9px;transform-origin:177.4px 0;transform:scaleX(1.076);">Survey Network Map 2566 (by Survey Team)</div>
<div class="b" style="left:891px;top:241px;width:555px;height:762px;border:2px solid #a3a3a3;background:#fff;"></div>
<svg style="left:900px;top:260px" width="32" height="36" viewBox="900 260 32 36"><path d="M915.5 266.5 L926.5 290 L915.5 282 L905.5 290 Z" fill="#111"/></svg>
<svg style="left:940px;top:245px" width="440" height="755" viewBox="940 245 440 755">
<polygon points="1060.0,255.0 1064.6,255.8 1068.8,254.0 1073.0,251.8 1077.5,251.9 1082.0,252.0 1085.7,253.9 1089.8,254.6 1093.4,256.8 1097.6,257.3 1101.3,259.0 1105.4,259.9 1109.0,262.0 1112.7,264.2 1116.0,267.0 1114.0,270.7 1112.5,274.6 1111.8,278.7 1112.9,283.2 1111.0,287.0 1115.3,288.1 1119.2,290.3 1123.7,290.8 1127.7,293.0 1132.0,294.0 1136.4,294.2 1140.4,295.9 1145.0,295.0 1149.0,297.0 1149.6,301.5 1151.1,305.9 1149.6,310.5 1149.7,315.0 1151.3,319.5 1151.0,324.0 1150.4,328.5 1149.2,333.0 1147.3,337.3 1147.0,341.9 1146.6,346.4 1146.0,351.0 1142.8,353.8 1142.0,358.0 1142.6,363.3 1145.0,368.0 1143.6,373.0 1142.1,377.9 1141.0,383.0 1142.0,388.4 1145.0,393.0 1150.3,390.6 1156.0,389.0 1160.1,388.0 1164.3,387.0 1167.6,383.6 1172.1,383.7 1176.0,382.0 1179.1,378.5 1181.7,374.6 1185.8,371.8 1187.8,367.4 1191.0,364.0 1194.2,366.8 1198.9,367.1 1201.1,371.8 1206.2,371.4 1209.8,373.4 1213.0,376.3 1215.7,380.0 1220.0,381.0 1224.0,383.0 1228.2,380.3 1232.5,377.6 1236.0,374.0 1237.4,369.7 1241.6,367.3 1243.5,363.4 1246.0,359.9 1248.0,356.0 1252.4,355.5 1256.8,355.6 1261.1,356.5 1265.5,357.9 1269.9,357.6 1274.3,356.4 1278.6,358.9 1283.0,358.0 1287.0,360.5 1290.3,363.6 1292.0,368.6 1295.7,371.3 1298.6,374.9 1303.0,377.0 1305.5,380.4 1308.6,383.2 1313.1,384.4 1314.0,389.5 1317.4,391.9 1321.7,393.4 1324.0,397.0 1324.9,401.1 1324.4,405.2 1324.1,409.3 1325.4,413.4 1325.1,417.5 1326.3,421.5 1324.1,425.8 1325.6,429.8 1326.3,433.9 1326.0,438.0 1329.0,441.6 1328.6,446.6 1332.4,449.9 1334.3,454.0 1335.8,458.2 1337.0,462.6 1338.0,467.0 1342.4,468.9 1346.7,470.9 1351.7,470.8 1356.0,473.0 1359.1,476.8 1360.3,481.8 1363.3,485.6 1367.0,489.0 1367.1,493.4 1366.7,497.8 1367.6,502.2 1366.0,506.5 1365.4,510.9 1366.6,515.3 1364.1,519.6 1365.0,524.0 1363.5,528.2 1364.7,532.8 1362.3,536.9 1362.0,541.3 1360.2,545.4 1361.9,550.1 1359.2,554.2 1358.2,558.4 1359.0,563.0 1354.2,561.4 1349.5,561.7 1344.8,563.7 1340.0,563.0 1335.8,562.1 1332.6,559.3 1329.2,556.7 1325.2,555.5 1321.9,552.8 1317.7,551.9 1314.0,550.0 1309.6,549.8 1305.7,552.3 1301.4,552.4 1296.9,551.9 1293.0,554.0 1289.1,552.7 1284.9,553.8 1281.0,553.1 1277.0,552.2 1273.0,552.0 1268.9,553.2 1264.6,552.4 1260.6,553.9 1256.3,552.6 1252.3,554.8 1248.0,554.0 1244.7,557.5 1240.3,559.2 1236.0,561.0 1236.1,565.5 1235.1,569.8 1232.8,573.7 1232.0,578.0 1230.7,582.4 1227.0,585.0 1225.5,589.2 1222.0,592.0 1220.2,595.8 1216.0,597.7 1213.7,601.2 1212.0,605.0 1211.5,610.2 1213.7,615.0 1214.0,620.0 1215.1,624.5 1218.8,627.9 1219.0,632.8 1220.6,637.0 1223.0,641.0 1222.7,646.0 1224.0,650.5 1226.0,655.0 1223.5,658.9 1220.8,662.7 1219.0,667.0 1214.7,663.9 1209.4,662.8 1205.0,660.0 1201.1,656.3 1198.0,652.0 1196.2,648.0 1193.0,645.0 1187.8,643.8 1184.0,640.0 1179.6,639.4 1175.3,639.6 1171.0,641.0 1166.5,641.8 1161.9,641.0 1157.4,641.3 1153.0,643.0 1149.1,641.1 1145.0,640.0 1140.0,640.5 1135.0,640.1 1130.0,640.0 1130.2,636.0 1132.3,632.2 1130.8,627.9 1132.0,624.0 1132.6,618.9 1131.0,614.0 1132.3,610.1 1135.0,607.0 1132.0,601.0 1127.5,599.8 1123.0,601.0 1118.5,600.1 1114.0,601.6 1109.5,599.1 1105.0,600.0 1100.1,601.1 1095.9,604.0 1091.0,605.0 1087.4,607.7 1086.0,612.0 1086.8,616.0 1088.9,619.7 1086.8,624.3 1089.0,628.0 1086.8,631.7 1088.1,636.2 1085.4,639.8 1085.1,643.9 1085.1,648.1 1084.0,652.0 1084.0,657.1 1083.9,662.2 1086.0,667.0 1085.6,672.0 1083.3,676.3 1080.1,680.3 1079.0,685.0 1075.4,687.8 1073.1,691.8 1070.0,695.0 1067.3,699.0 1063.3,702.2 1062.9,707.8 1059.0,711.0 1058.9,715.5 1058.2,719.8 1056.6,724.0 1055.7,728.3 1054.1,732.5 1054.1,737.0 1052.0,741.0 1050.9,745.0 1048.3,748.2 1047.0,752.0 1045.7,755.8 1043.0,759.0 1043.7,764.2 1040.1,768.8 1041.0,774.0 1043.2,778.8 1044.3,783.8 1045.0,789.0 1046.8,792.7 1049.4,796.1 1049.8,800.5 1052.0,804.0 1056.3,804.8 1059.9,806.9 1063.0,810.0 1068.6,809.4 1074.0,811.0 1078.6,814.4 1082.0,819.0 1083.9,822.6 1085.5,826.4 1086.7,830.4 1090.3,833.2 1091.0,837.4 1093.0,841.0 1094.1,845.3 1094.1,849.8 1095.1,854.1 1096.7,858.2 1097.3,862.6 1098.6,866.8 1100.0,871.0 1100.7,875.4 1101.5,879.8 1103.6,883.8 1103.5,888.4 1106.2,892.3 1107.2,896.6 1108.0,901.0 1110.1,904.7 1111.9,908.6 1113.7,912.4 1116.0,916.0 1120.3,917.5 1122.5,922.3 1126.6,924.1 1130.6,926.0 1135.1,927.4 1138.0,931.0 1143.0,930.0 1148.1,930.2 1153.0,929.0 1157.4,930.9 1161.6,933.3 1166.0,935.0 1171.0,935.0 1174.5,938.1 1175.9,943.1 1180.6,945.3 1183.4,949.1 1186.0,953.0 1188.6,956.6 1188.6,961.0 1190.0,965.0 1188.0,969.5 1182.8,971.2 1180.8,975.7 1178.0,979.4 1175.0,983.0 1170.0,982.2 1165.0,982.0 1160.0,983.0 1155.7,983.9 1152.5,987.1 1149.1,989.7 1145.0,991.0 1144.6,986.6 1141.0,983.7 1141.0,979.2 1138.0,976.0 1136.1,971.9 1133.4,968.5 1128.8,966.8 1126.2,963.3 1124.4,959.0 1120.4,956.8 1118.4,952.8 1115.0,950.0 1110.5,950.2 1106.0,951.4 1101.5,948.7 1097.0,950.0 1092.0,948.6 1087.0,951.6 1082.0,950.0 1078.5,947.5 1075.8,944.2 1073.5,940.5 1071.0,937.0 1067.0,935.0 1063.6,932.5 1061.8,928.8 1058.3,926.5 1057.9,921.7 1054.9,918.9 1052.0,916.0 1048.5,913.9 1044.1,913.5 1040.6,911.4 1037.2,909.0 1033.8,906.5 1030.0,905.0 1027.2,902.0 1023.6,900.1 1020.4,897.6 1017.0,895.4 1014.5,892.0 1011.0,890.0 1009.3,885.5 1005.2,882.7 1003.3,878.4 1000.0,875.0 999.3,870.7 997.2,866.6 999.1,861.8 996.7,857.8 995.7,853.5 996.0,849.0 997.8,844.8 997.9,840.4 996.6,835.8 1000.0,831.9 998.1,827.1 1000.0,823.0 999.1,818.1 1001.9,813.6 1003.0,808.9 1002.0,804.0 1002.7,799.9 1005.6,796.7 1006.2,792.6 1009.0,789.3 1009.0,785.0 1011.5,780.8 1011.4,775.8 1014.9,772.0 1015.0,767.0 1017.4,763.1 1020.0,759.3 1024.0,756.4 1025.8,752.1 1028.0,748.0 1030.0,743.4 1030.1,738.4 1030.5,733.4 1033.0,729.0 1036.0,725.8 1038.0,721.9 1039.1,717.5 1041.8,714.1 1045.0,711.0 1047.3,707.4 1050.0,704.0 1052.4,700.5 1055.0,697.0 1056.9,691.6 1058.0,686.0 1059.9,681.9 1060.7,677.5 1060.0,673.0 1058.2,668.4 1060.4,663.6 1059.0,659.0 1059.8,653.4 1058.0,648.0 1055.3,644.4 1051.3,642.0 1049.0,638.0 1045.7,633.8 1044.5,628.6 1042.0,624.0 1043.5,619.5 1042.0,615.0 1042.5,610.9 1044.0,607.0 1045.0,603.0 1045.5,598.3 1044.6,593.6 1046.0,589.0 1044.2,585.2 1040.7,582.5 1040.3,577.8 1037.0,575.0 1033.3,572.9 1031.6,568.8 1028.9,565.8 1025.6,563.2 1023.0,560.0 1020.9,556.2 1017.3,553.7 1014.8,550.2 1012.7,546.4 1009.0,544.0 1006.5,540.5 1003.6,537.3 1002.0,533.1 999.0,530.0 998.0,524.9 996.0,520.0 997.7,514.6 1001.0,510.0 1004.2,507.6 1007.0,504.7 1009.7,501.7 1011.4,497.8 1014.7,495.3 1018.0,493.0 1019.4,488.4 1018.4,483.8 1019.3,479.2 1018.6,474.6 1018.0,470.0 1018.7,465.8 1022.2,463.1 1023.6,459.3 1026.0,456.0 1024.6,450.5 1021.0,446.0 1017.8,442.6 1015.2,438.4 1011.0,436.0 1010.2,431.8 1008.0,428.1 1008.2,423.5 1004.2,420.4 1004.0,416.0 1002.9,411.0 998.5,407.8 996.3,403.4 994.0,399.0 989.4,397.7 986.3,393.8 981.7,392.5 977.7,390.1 974.1,387.2 970.0,385.0 967.7,380.8 967.6,376.1 967.7,371.3 965.8,367.1 965.9,362.3 964.0,358.0 962.3,354.0 959.5,351.0 955.4,349.4 953.0,346.0 955.4,342.0 958.5,338.6 962.7,336.1 966.2,333.2 968.3,328.8 972.0,326.0 972.6,321.8 972.0,317.5 973.1,313.4 974.3,309.3 974.1,305.0 976.8,301.2 977.0,297.0 979.6,292.7 982.8,288.8 987.0,286.0 991.0,285.1 995.0,286.3 999.0,286.6 1003.0,286.0 1007.0,284.0 1011.0,284.5 1015.0,284.6 1019.0,283.6 1023.0,284.2 1026.9,282.8 1031.0,283.7 1035.0,284.0 1035.1,279.1 1036.5,274.6 1038.0,270.0 1041.7,267.6 1045.4,265.0 1049.0,262.5 1053.0,260.5 1056.6,257.9" fill="#e8b8d8" stroke="#5a5050" stroke-width="1"/>
<polygon points="1060.0,255.0 1064.6,255.8 1068.8,254.0 1073.0,251.8 1077.5,251.9 1082.0,252.0 1085.7,253.9 1089.8,254.6 1093.4,256.8 1097.6,257.3 1101.3,259.0 1105.4,259.9 1109.0,262.0 1112.7,264.2 1116.0,267.0 1114.0,270.7 1112.5,274.6 1111.8,278.7 1112.9,283.2 1111.0,287.0 1115.3,288.1 1119.2,290.3 1123.7,290.8 1127.7,293.0 1132.0,294.0 1136.4,294.2 1140.4,295.9 1145.0,295.0 1149.0,297.0 1149.6,301.5 1151.1,305.9 1149.6,310.5 1149.7,315.0 1151.3,319.5 1151.0,324.0 1150.4,328.5 1149.2,333.0 1147.3,337.3 1147.0,341.9 1146.6,346.4 1146.0,351.0 1142.8,353.8 1142.0,358.0 1137.0,358.5 1132.0,359.0 1127.5,361.1 1123.8,364.6 1119.0,366.0 1115.3,369.1 1110.6,369.8 1106.0,371.0 1102.0,373.4 1098.6,376.8 1094.0,378.0 1089.4,381.3 1085.0,385.0 1085.9,389.1 1084.3,393.4 1085.1,397.6 1085.3,401.7 1085.7,405.9 1087.0,410.0 1086.1,415.0 1086.5,420.1 1085.0,425.0 1085.9,430.2 1089.0,434.8 1090.0,440.0 1089.7,444.4 1089.6,448.7 1089.2,453.1 1088.1,457.3 1086.9,461.6 1087.0,466.0 1085.0,472.0 1080.8,472.6 1076.9,475.1 1072.1,473.1 1068.2,475.0 1064.0,476.0 1059.9,477.5 1055.9,479.4 1051.4,478.9 1046.9,478.8 1043.0,481.0 1041.0,485.0 1041.2,489.3 1042.7,493.8 1041.8,498.0 1040.0,502.0 1035.9,502.1 1031.8,501.7 1028.0,500.0 1023.9,502.0 1019.4,502.9 1015.0,504.0 1010.3,505.8 1005.8,508.3 1001.0,510.0 1004.2,507.6 1007.0,504.7 1009.7,501.7 1011.4,497.8 1014.7,495.3 1018.0,493.0 1019.4,488.4 1018.4,483.8 1019.3,479.2 1018.6,474.6 1018.0,470.0 1018.7,465.8 1022.2,463.1 1023.6,459.3 1026.0,456.0 1024.6,450.5 1021.0,446.0 1017.8,442.6 1015.2,438.4 1011.0,436.0 1010.2,431.8 1008.0,428.1 1008.2,423.5 1004.2,420.4 1004.0,416.0 1002.9,411.0 998.5,407.8 996.3,403.4 994.0,399.0 989.4,397.7 986.3,393.8 981.7,392.5 977.7,390.1 974.1,387.2 970.0,385.0 967.7,380.8 967.6,376.1 967.7,371.3 965.8,367.1 965.9,362.3 964.0,358.0 962.3,354.0 959.5,351.0 955.4,349.4 953.0,346.0 955.4,342.0 958.5,338.6 962.7,336.1 966.2,333.2 968.3,328.8 972.0,326.0 972.6,321.8 972.0,317.5 973.1,313.4 974.3,309.3 974.1,305.0 976.8,301.2 977.0,297.0 979.6,292.7 982.8,288.8 987.0,286.0 991.0,285.1 995.0,286.3 999.0,286.6 1003.0,286.0 1007.0,284.0 1011.0,284.5 1015.0,284.6 1019.0,283.6 1023.0,284.2 1026.9,282.8 1031.0,283.7 1035.0,284.0 1035.1,279.1 1036.5,274.6 1038.0,270.0 1041.7,267.6 1045.4,265.0 1049.0,262.5 1053.0,260.5 1056.6,257.9" fill="#f5dbab" stroke="#5a5050" stroke-width="0.8"/>
<polygon points="1145.0,393.0 1150.3,390.6 1156.0,389.0 1160.1,388.0 1164.3,387.0 1167.6,383.6 1172.1,383.7 1176.0,382.0 1179.1,378.5 1181.7,374.6 1185.8,371.8 1187.8,367.4 1191.0,364.0 1194.2,366.8 1198.9,367.1 1201.1,371.8 1206.2,371.4 1209.8,373.4 1213.0,376.3 1215.7,380.0 1220.0,381.0 1224.0,383.0 1228.2,380.3 1232.5,377.6 1236.0,374.0 1237.4,369.7 1241.6,367.3 1243.5,363.4 1246.0,359.9 1248.0,356.0 1252.4,355.5 1256.8,355.6 1261.1,356.5 1265.5,357.9 1269.9,357.6 1274.3,356.4 1278.6,358.9 1283.0,358.0 1287.0,360.5 1290.3,363.6 1292.0,368.6 1295.7,371.3 1298.6,374.9 1303.0,377.0 1305.5,380.4 1308.6,383.2 1313.1,384.4 1314.0,389.5 1317.4,391.9 1321.7,393.4 1324.0,397.0 1324.9,401.1 1324.4,405.2 1324.1,409.3 1325.4,413.4 1325.1,417.5 1326.3,421.5 1324.1,425.8 1325.6,429.8 1326.3,433.9 1326.0,438.0 1329.0,441.6 1328.6,446.6 1332.4,449.9 1334.3,454.0 1335.8,458.2 1337.0,462.6 1338.0,467.0 1342.4,468.9 1346.7,470.9 1351.7,470.8 1356.0,473.0 1359.1,476.8 1360.3,481.8 1363.3,485.6 1367.0,489.0 1367.1,493.4 1366.7,497.8 1367.6,502.2 1366.0,506.5 1365.4,510.9 1366.6,515.3 1364.1,519.6 1365.0,524.0 1363.5,528.2 1364.7,532.8 1362.3,536.9 1362.0,541.3 1360.2,545.4 1361.9,550.1 1359.2,554.2 1358.2,558.4 1359.0,563.0 1354.2,561.4 1349.5,561.7 1344.8,563.7 1340.0,563.0 1335.8,562.1 1332.6,559.3 1329.2,556.7 1325.2,555.5 1321.9,552.8 1317.7,551.9 1314.0,550.0 1309.6,549.8 1305.7,552.3 1301.4,552.4 1296.9,551.9 1293.0,554.0 1289.1,552.7 1284.9,553.8 1281.0,553.1 1277.0,552.2 1273.0,552.0 1268.9,553.2 1264.6,552.4 1260.6,553.9 1256.3,552.6 1252.3,554.8 1248.0,554.0 1244.7,557.5 1240.3,559.2 1236.0,561.0 1232.0,566.0 1228.3,568.1 1223.7,567.0 1220.0,568.9 1216.0,570.0 1211.3,569.1 1206.5,568.6 1202.0,567.0 1197.4,565.2 1192.9,563.0 1188.0,562.0 1183.6,559.7 1178.4,560.2 1174.0,558.0 1170.0,557.1 1165.9,556.3 1162.0,555.0 1159.9,550.9 1155.8,548.5 1153.0,545.0 1155.0,540.8 1157.0,536.6 1158.0,532.0 1158.4,527.5 1154.7,523.9 1153.9,519.7 1155.3,514.9 1153.0,511.0 1149.0,509.7 1144.8,509.0 1141.5,506.0 1137.2,505.7 1134.0,502.4 1130.0,501.3 1126.0,500.0 1125.4,495.3 1124.1,490.6 1124.4,485.8 1124.0,481.0 1121.4,477.1 1122.5,472.2 1119.0,468.6 1119.0,464.0 1119.9,459.3 1122.0,455.0 1123.1,450.6 1126.0,447.0 1128.8,443.2 1128.4,438.3 1131.6,434.6 1132.0,430.0 1133.0,425.6 1135.3,421.6 1136.9,417.4 1137.9,413.0 1138.2,408.4 1139.0,404.0 1142.1,400.9 1141.6,395.9" fill="#f5dbab" stroke="#5a5050" stroke-width="0.8"/>
<polygon points="1115.0,950.0 1115.3,946.0 1116.5,942.1 1114.6,937.9 1117.4,934.1 1115.9,930.0 1116.0,926.0 1116.8,922.0 1117.0,918.0 1121.0,919.4 1124.7,921.3 1127.8,924.0 1130.8,927.0 1135.2,927.7 1138.0,931.0 1143.0,930.0 1148.1,930.2 1153.0,929.0 1157.4,930.9 1161.6,933.3 1166.0,935.0 1171.0,935.0 1174.5,938.1 1175.9,943.1 1180.6,945.3 1183.4,949.1 1186.0,953.0 1188.6,956.6 1188.6,961.0 1190.0,965.0 1188.0,969.5 1182.8,971.2 1180.8,975.7 1178.0,979.4 1175.0,983.0 1170.0,982.2 1165.0,982.0 1160.0,983.0 1155.7,983.9 1152.5,987.1 1149.1,989.7 1145.0,991.0 1144.6,986.6 1141.0,983.7 1141.0,979.2 1138.0,976.0 1136.1,971.9 1133.4,968.5 1128.8,966.8 1126.2,963.3 1124.4,959.0 1120.4,956.8 1118.4,952.8" fill="#e03a68" stroke="#a03050" stroke-width="0.6"/>
<path d="M1086.0,362.4 Q1079.2,360.8 1076.3,362.4 Q1073.4,364.1 1070.3,366.5 Q1067.2,368.9 1065.8,371.6 Q1064.5,374.3 1063.6,378.8 Q1062.6,383.2 1061.2,386.5 Q1059.8,389.9 1061.9,392.1 Q1064.1,394.4 1066.3,396.0 Q1068.6,397.5 1070.5,400.9 Q1072.4,404.2 1073.6,407.5 L1074.9,410.8" fill="none" stroke="#5a4a42" stroke-width="0.7" stroke-linejoin="round" stroke-linecap="round" opacity="0.8"/>
<path d="M1036.5,756.9 Q1031.8,761.8 1030.6,765.2 Q1029.4,768.7 1029.3,772.0 Q1029.2,775.3 1027.3,777.8 Q1025.4,780.4 1021.2,780.8 Q1016.9,781.2 1013.7,779.9 L1010.5,778.7" fill="none" stroke="#5a4a42" stroke-width="0.7" stroke-linejoin="round" stroke-linecap="round" opacity="0.8"/>
<path d="M1069.5,537.4 Q1062.6,535.2 1059.0,537.6 Q1055.4,540.0 1054.2,542.7 Q1053.1,545.5 1049.8,547.2 Q1046.5,548.9 1044.2,550.7 Q1042.0,552.5 1037.8,551.1 Q1033.7,549.7 1031.0,550.4 Q1028.2,551.0 1024.5,552.2 L1020.8,553.4" fill="none" stroke="#5a4a42" stroke-width="0.7" stroke-linejoin="round" stroke-linecap="round" opacity="0.8"/>
<path d="M1126.0,525.1 Q1124.1,518.5 1123.6,514.5 Q1123.2,510.5 1125.3,508.6 Q1127.3,506.6 1130.0,504.6 Q1132.7,502.5 1134.4,498.9 Q1136.1,495.3 1134.4,492.1 Q1132.6,489.0 1130.3,486.0 Q1128.0,483.0 1124.7,482.5 Q1121.4,481.9 1119.4,484.1 Q1117.3,486.2 1115.3,489.2 L1113.3,492.1" fill="none" stroke="#5a4a42" stroke-width="0.7" stroke-linejoin="round" stroke-linecap="round" opacity="0.8"/>
<path d="M1102.9,341.5 Q1109.9,341.0 1111.8,338.4 Q1113.8,335.7 1115.9,332.1 Q1117.9,328.6 1116.3,326.0 Q1114.7,323.4 1111.0,321.4 Q1107.4,319.4 1104.7,318.8 Q1102.1,318.2 1098.9,315.1 Q1095.6,311.9 1092.8,311.4 Q1090.0,310.8 1086.9,308.1 Q1083.7,305.4 1083.5,302.8 L1083.3,300.2" fill="none" stroke="#5a4a42" stroke-width="0.7" stroke-linejoin="round" stroke-linecap="round" opacity="0.8"/>
<path d="M1260.7,418.9 Q1252.7,418.8 1250.0,421.4 Q1247.3,424.1 1244.1,423.4 Q1241.0,422.7 1240.2,418.9 Q1239.4,415.0 1235.7,412.6 Q1232.0,410.3 1229.0,410.8 Q1226.1,411.2 1223.3,408.5 Q1220.5,405.9 1219.0,402.6 Q1217.5,399.2 1219.8,396.2 Q1222.1,393.1 1222.8,389.9 L1223.4,386.8" fill="none" stroke="#5a4a42" stroke-width="0.7" stroke-linejoin="round" stroke-linecap="round" opacity="0.8"/>
<path d="M1254.4,376.7 Q1262.3,378.6 1265.3,377.2 Q1268.3,375.8 1271.2,374.7 Q1274.1,373.5 1276.0,371.4 Q1277.9,369.3 1281.5,367.3 L1285.0,365.4" fill="none" stroke="#5a4a42" stroke-width="0.7" stroke-linejoin="round" stroke-linecap="round" opacity="0.8"/>
<path d="M1038.6,437.6 Q1040.2,443.9 1040.8,448.0 Q1041.5,452.1 1043.9,454.5 Q1046.2,457.0 1045.8,460.9 Q1045.3,464.8 1045.0,467.8 Q1044.7,470.8 1047.0,473.0 Q1049.2,475.1 1053.1,474.9 Q1057.1,474.7 1060.5,474.7 Q1063.8,474.8 1066.8,473.3 Q1069.7,471.9 1072.7,472.2 L1075.7,472.5" fill="none" stroke="#5a4a42" stroke-width="0.7" stroke-linejoin="round" stroke-linecap="round" opacity="0.8"/>
<path d="M1054.4,456.3 Q1055.6,450.0 1058.2,447.6 Q1060.8,445.3 1063.6,443.2 Q1066.4,441.2 1069.0,438.5 Q1071.6,435.9 1075.3,436.5 Q1079.0,437.1 1080.8,439.4 Q1082.6,441.6 1083.1,444.6 Q1083.5,447.6 1085.1,450.3 Q1086.6,453.1 1089.3,455.5 Q1091.9,457.9 1094.8,460.2 L1097.7,462.5" fill="none" stroke="#5a4a42" stroke-width="0.7" stroke-linejoin="round" stroke-linecap="round" opacity="0.8"/>
<path d="M1350.1,546.7 Q1346.0,540.9 1342.9,538.9 Q1339.8,536.9 1336.1,536.9 Q1332.4,536.9 1330.0,538.9 Q1327.7,540.9 1327.6,544.6 Q1327.4,548.3 1327.1,552.3 L1326.8,556.2" fill="none" stroke="#5a4a42" stroke-width="0.7" stroke-linejoin="round" stroke-linecap="round" opacity="0.8"/>
<path d="M1061.5,279.5 Q1059.0,272.5 1061.6,269.2 Q1064.1,266.0 1063.8,262.9 L1063.5,259.8" fill="none" stroke="#5a4a42" stroke-width="0.7" stroke-linejoin="round" stroke-linecap="round" opacity="0.8"/>
<path d="M1140.6,502.7 Q1136.9,495.5 1135.4,492.3 Q1133.9,489.1 1130.7,487.4 Q1127.5,485.7 1124.4,485.7 Q1121.2,485.7 1118.0,485.6 Q1114.8,485.5 1111.1,487.1 Q1107.4,488.7 1107.4,492.5 Q1107.4,496.2 1108.1,500.0 Q1108.9,503.8 1112.3,505.0 Q1115.7,506.3 1118.7,508.0 L1121.7,509.8" fill="none" stroke="#5a4a42" stroke-width="0.7" stroke-linejoin="round" stroke-linecap="round" opacity="0.8"/>
<path d="M1217.1,551.5 Q1217.5,557.3 1216.8,560.9 Q1216.1,564.4 1218.5,568.3 Q1220.9,572.2 1220.9,574.9 Q1221.0,577.5 1223.1,580.4 L1225.2,583.2" fill="none" stroke="#5a4a42" stroke-width="0.7" stroke-linejoin="round" stroke-linecap="round" opacity="0.8"/>
<path d="M1080.0,515.7 Q1086.8,514.2 1089.4,511.3 Q1092.0,508.3 1092.9,505.5 Q1093.8,502.8 1092.2,499.5 Q1090.7,496.2 1088.6,494.3 Q1086.6,492.4 1085.1,489.5 Q1083.7,486.5 1084.2,482.7 Q1084.6,478.8 1087.5,477.7 Q1090.3,476.6 1093.6,476.0 Q1096.9,475.4 1100.7,476.9 L1104.4,478.5" fill="none" stroke="#5a4a42" stroke-width="0.7" stroke-linejoin="round" stroke-linecap="round" opacity="0.8"/>
<path d="M1170.0,625.8 Q1176.9,622.7 1180.2,623.6 Q1183.4,624.5 1186.0,622.9 Q1188.6,621.3 1191.7,620.4 Q1194.9,619.5 1198.7,617.8 Q1202.5,616.2 1205.9,615.1 L1209.2,614.0" fill="none" stroke="#5a4a42" stroke-width="0.7" stroke-linejoin="round" stroke-linecap="round" opacity="0.8"/>
<path d="M1055.9,305.5 Q1051.8,312.1 1048.7,312.4 Q1045.6,312.7 1042.5,314.0 Q1039.3,315.3 1035.7,314.6 Q1032.2,313.9 1029.0,316.8 Q1025.8,319.8 1024.3,321.9 Q1022.8,324.0 1023.3,328.2 Q1023.8,332.4 1023.9,335.4 Q1024.0,338.4 1023.3,342.1 Q1022.5,345.8 1024.9,348.4 L1027.2,351.1" fill="none" stroke="#5a4a42" stroke-width="0.7" stroke-linejoin="round" stroke-linecap="round" opacity="0.8"/>
<path d="M1138.8,450.1 Q1134.4,456.3 1135.1,460.2 Q1135.8,464.2 1138.6,466.2 Q1141.4,468.2 1141.4,471.4 Q1141.5,474.5 1139.1,477.0 Q1136.7,479.6 1137.5,483.5 Q1138.4,487.4 1139.9,490.2 Q1141.4,492.9 1145.1,494.6 Q1148.7,496.3 1150.3,499.6 Q1151.9,502.8 1150.7,507.1 L1149.6,511.4" fill="none" stroke="#5a4a42" stroke-width="0.7" stroke-linejoin="round" stroke-linecap="round" opacity="0.8"/>
<path d="M1071.7,527.3 Q1065.1,525.4 1061.3,524.7 Q1057.4,524.0 1055.2,526.3 Q1053.1,528.6 1048.9,528.0 Q1044.7,527.5 1041.2,527.0 Q1037.7,526.4 1036.7,524.0 Q1035.6,521.6 1034.5,518.4 Q1033.4,515.3 1032.3,510.8 Q1031.3,506.4 1031.5,503.8 Q1031.8,501.2 1033.1,497.1 L1034.4,493.1" fill="none" stroke="#5a4a42" stroke-width="0.7" stroke-linejoin="round" stroke-linecap="round" opacity="0.8"/>
<path d="M1148.3,506.0 Q1144.8,510.7 1141.0,512.9 Q1137.2,515.1 1134.5,517.0 Q1131.8,518.9 1131.7,522.7 Q1131.5,526.4 1132.3,530.4 Q1133.0,534.5 1133.1,536.8 Q1133.2,539.2 1136.5,540.9 Q1139.7,542.6 1143.1,543.4 Q1146.5,544.2 1149.6,546.4 Q1152.7,548.6 1155.3,550.6 L1157.9,552.5" fill="none" stroke="#5a4a42" stroke-width="0.7" stroke-linejoin="round" stroke-linecap="round" opacity="0.8"/>
<path d="M1092.0,296.2 Q1085.2,299.9 1082.8,300.7 Q1080.3,301.5 1077.0,304.0 Q1073.7,306.6 1072.2,309.7 Q1070.6,312.9 1066.1,312.4 Q1061.5,312.0 1059.1,311.8 Q1056.8,311.6 1052.4,310.2 Q1048.1,308.8 1047.6,306.2 Q1047.2,303.6 1047.9,299.5 Q1048.6,295.4 1048.3,292.7 L1047.9,289.9" fill="none" stroke="#5a4a42" stroke-width="0.7" stroke-linejoin="round" stroke-linecap="round" opacity="0.8"/>
<path d="M1221.1,476.3 Q1228.0,479.2 1230.6,477.9 Q1233.2,476.5 1237.1,475.5 Q1240.9,474.4 1243.9,474.5 Q1247.0,474.5 1251.6,474.7 Q1256.2,474.8 1258.5,476.3 Q1260.8,477.8 1264.8,478.9 Q1268.9,480.0 1271.2,479.1 Q1273.5,478.2 1277.4,478.4 Q1281.4,478.5 1285.2,479.9 L1289.0,481.3" fill="none" stroke="#5a4a42" stroke-width="0.7" stroke-linejoin="round" stroke-linecap="round" opacity="0.8"/>
<path d="M1033.2,843.8 Q1032.1,838.0 1031.4,833.8 Q1030.8,829.7 1028.0,827.6 Q1025.2,825.5 1024.6,821.9 Q1024.0,818.3 1021.9,816.0 Q1019.9,813.6 1020.4,809.9 Q1020.8,806.1 1020.8,802.5 Q1020.8,798.8 1016.6,797.5 Q1012.3,796.3 1012.0,793.4 Q1011.7,790.6 1013.5,787.0 L1015.3,783.5" fill="none" stroke="#5a4a42" stroke-width="0.7" stroke-linejoin="round" stroke-linecap="round" opacity="0.8"/>
<path d="M1229.1,532.1 Q1225.1,537.1 1225.0,541.7 Q1224.9,546.4 1227.7,548.4 Q1230.4,550.4 1232.8,553.4 L1235.3,556.4" fill="none" stroke="#5a4a42" stroke-width="0.7" stroke-linejoin="round" stroke-linecap="round" opacity="0.8"/>
<path d="M1327.4,502.6 Q1321.9,506.0 1318.1,506.8 Q1314.4,507.6 1313.3,511.5 Q1312.3,515.4 1310.3,517.0 Q1308.2,518.6 1306.9,523.1 Q1305.6,527.6 1302.4,528.6 Q1299.3,529.5 1296.7,532.4 Q1294.0,535.4 1293.2,538.5 Q1292.4,541.5 1289.6,543.5 Q1286.8,545.4 1284.2,548.0 L1281.6,550.6" fill="none" stroke="#5a4a42" stroke-width="0.7" stroke-linejoin="round" stroke-linecap="round" opacity="0.8"/>
<path d="M1032.9,810.9 Q1036.8,815.9 1041.1,817.8 Q1045.3,819.8 1045.3,822.2 Q1045.2,824.7 1048.4,827.4 Q1051.6,830.2 1054.3,831.5 Q1057.0,832.9 1060.2,835.6 Q1063.3,838.4 1064.0,841.0 Q1064.8,843.7 1063.0,847.5 Q1061.2,851.2 1061.1,854.2 Q1061.1,857.2 1061.5,860.5 L1061.9,863.8" fill="none" stroke="#5a4a42" stroke-width="0.7" stroke-linejoin="round" stroke-linecap="round" opacity="0.8"/>
<path d="M1087.1,545.1 Q1093.4,545.6 1097.7,545.6 Q1102.0,545.6 1105.3,547.1 Q1108.5,548.7 1109.6,550.9 Q1110.7,553.0 1114.3,554.7 Q1117.9,556.4 1122.0,557.1 Q1126.1,557.8 1127.2,560.7 Q1128.3,563.6 1128.9,566.9 Q1129.5,570.3 1128.6,573.8 Q1127.6,577.4 1127.2,580.9 L1126.9,584.4" fill="none" stroke="#5a4a42" stroke-width="0.7" stroke-linejoin="round" stroke-linecap="round" opacity="0.8"/>
<path d="M1234.9,387.9 Q1236.6,395.0 1238.6,396.9 Q1240.5,398.8 1243.8,400.8 Q1247.0,402.7 1250.6,403.6 Q1254.1,404.4 1257.0,404.1 Q1259.9,403.9 1263.1,401.2 Q1266.3,398.5 1269.3,396.9 Q1272.2,395.2 1273.3,392.0 Q1274.4,388.7 1274.3,385.4 Q1274.2,382.1 1274.8,378.1 L1275.5,374.0" fill="none" stroke="#5a4a42" stroke-width="0.7" stroke-linejoin="round" stroke-linecap="round" opacity="0.8"/>
<path d="M1211.3,526.3 Q1205.1,530.3 1201.4,529.8 Q1197.7,529.2 1196.1,526.6 Q1194.5,523.9 1190.9,524.7 Q1187.4,525.6 1182.8,525.5 Q1178.3,525.4 1175.9,525.8 Q1173.4,526.1 1169.3,525.0 Q1165.2,523.9 1162.0,524.3 Q1158.8,524.8 1155.4,522.5 Q1152.1,520.1 1149.1,519.3 L1146.2,518.4" fill="none" stroke="#5a4a42" stroke-width="0.7" stroke-linejoin="round" stroke-linecap="round" opacity="0.8"/>
<path d="M1213.4,478.1 Q1206.6,480.9 1203.5,481.7 Q1200.3,482.4 1197.0,483.5 Q1193.7,484.6 1190.6,484.0 Q1187.5,483.5 1183.9,484.2 Q1180.2,484.9 1178.3,487.9 Q1176.4,490.8 1174.9,493.9 Q1173.4,497.0 1170.7,500.5 Q1167.9,504.0 1165.1,504.4 Q1162.4,504.8 1158.9,507.1 L1155.5,509.4" fill="none" stroke="#5a4a42" stroke-width="0.7" stroke-linejoin="round" stroke-linecap="round" opacity="0.8"/>
<path d="M1292.3,394.3 Q1300.3,394.4 1302.7,392.1 Q1305.1,389.8 1304.8,386.1 Q1304.5,382.4 1303.3,378.8 L1302.1,375.3" fill="none" stroke="#5a4a42" stroke-width="0.7" stroke-linejoin="round" stroke-linecap="round" opacity="0.8"/>
<path d="M1060.4,627.0 Q1062.4,632.6 1061.6,636.7 Q1060.9,640.9 1061.8,643.3 Q1062.6,645.8 1063.0,649.6 Q1063.4,653.3 1061.5,656.6 L1059.7,660.0" fill="none" stroke="#5a4a42" stroke-width="0.7" stroke-linejoin="round" stroke-linecap="round" opacity="0.8"/>
<path d="M1214.5,543.7 Q1214.8,537.0 1213.3,533.5 Q1211.7,530.1 1208.8,527.6 Q1205.9,525.1 1204.0,522.6 Q1202.2,520.1 1204.2,517.0 Q1206.2,514.0 1206.1,509.7 Q1205.9,505.5 1205.0,502.9 Q1204.2,500.3 1202.9,496.8 Q1201.7,493.3 1198.6,491.1 Q1195.5,488.9 1191.7,489.9 L1188.0,491.0" fill="none" stroke="#5a4a42" stroke-width="0.7" stroke-linejoin="round" stroke-linecap="round" opacity="0.8"/>
<path d="M1100.0,417.1 Q1093.9,412.9 1091.0,411.2 Q1088.1,409.5 1084.7,407.9 Q1081.2,406.2 1078.9,405.6 Q1076.6,405.0 1072.5,403.2 Q1068.4,401.4 1065.7,400.1 Q1063.0,398.8 1060.3,397.0 Q1057.7,395.3 1056.2,392.0 Q1054.7,388.7 1051.7,386.8 Q1048.8,385.0 1044.8,385.7 L1040.7,386.5" fill="none" stroke="#5a4a42" stroke-width="0.7" stroke-linejoin="round" stroke-linecap="round" opacity="0.8"/>
<path d="M1291.6,380.1 Q1290.4,388.0 1289.5,390.0 Q1288.5,392.0 1285.4,394.0 Q1282.2,396.0 1278.4,395.7 Q1274.5,395.4 1271.6,397.4 Q1268.7,399.4 1267.4,403.2 Q1266.1,406.9 1262.8,407.7 Q1259.5,408.5 1255.8,410.1 Q1252.1,411.7 1248.5,412.3 Q1244.9,413.0 1242.0,411.3 L1239.0,409.6" fill="none" stroke="#5a4a42" stroke-width="0.7" stroke-linejoin="round" stroke-linecap="round" opacity="0.8"/>
<path d="M1087.3,905.7 Q1088.1,913.0 1086.5,916.7 Q1085.0,920.4 1084.1,923.4 Q1083.2,926.4 1079.9,928.4 Q1076.5,930.5 1073.3,931.5 L1070.0,932.5" fill="none" stroke="#5a4a42" stroke-width="0.7" stroke-linejoin="round" stroke-linecap="round" opacity="0.8"/>
<path d="M1094.8,355.7 Q1100.9,351.8 1104.3,350.1 Q1107.7,348.4 1110.7,348.9 Q1113.8,349.3 1117.6,350.0 Q1121.3,350.6 1122.9,354.8 Q1124.5,358.9 1126.9,359.3 Q1129.2,359.7 1133.2,359.1 L1137.1,358.4" fill="none" stroke="#5a4a42" stroke-width="0.7" stroke-linejoin="round" stroke-linecap="round" opacity="0.8"/>
<path d="M1070.7,324.4 Q1073.3,330.1 1075.1,332.9 Q1077.0,335.6 1080.8,337.6 Q1084.6,339.6 1088.3,340.5 Q1092.0,341.5 1093.9,343.6 Q1095.8,345.6 1098.2,348.8 Q1100.7,351.9 1104.2,353.1 Q1107.7,354.3 1111.4,353.5 Q1115.0,352.6 1117.3,354.2 Q1119.6,355.7 1123.8,356.7 L1128.0,357.8" fill="none" stroke="#5a4a42" stroke-width="0.7" stroke-linejoin="round" stroke-linecap="round" opacity="0.8"/>
<path d="M1095.8,869.7 Q1090.0,873.6 1086.9,874.6 Q1083.9,875.7 1079.9,876.9 Q1075.9,878.0 1073.4,877.0 Q1070.9,875.9 1066.9,875.6 Q1062.9,875.4 1059.9,873.7 Q1056.8,872.1 1053.5,871.8 Q1050.2,871.6 1047.6,869.9 Q1045.0,868.2 1043.6,865.0 Q1042.2,861.7 1041.9,858.7 L1041.6,855.7" fill="none" stroke="#5a4a42" stroke-width="0.7" stroke-linejoin="round" stroke-linecap="round" opacity="0.8"/>
<path d="M1221.4,509.6 Q1223.2,516.9 1221.4,520.0 Q1219.6,523.1 1217.6,525.2 Q1215.6,527.3 1213.6,530.0 Q1211.7,532.8 1210.4,536.8 Q1209.2,540.8 1206.5,542.7 Q1203.9,544.5 1202.9,548.2 Q1202.0,552.0 1203.0,554.9 Q1203.9,557.9 1202.5,560.7 Q1201.1,563.6 1196.9,564.5 L1192.7,565.4" fill="none" stroke="#5a4a42" stroke-width="0.7" stroke-linejoin="round" stroke-linecap="round" opacity="0.8"/>
<path d="M1113.1,275.3 Q1106.6,276.1 1102.9,275.2 Q1099.1,274.3 1095.7,273.9 Q1092.3,273.6 1090.6,270.3 Q1088.9,267.1 1088.6,263.2 L1088.4,259.3" fill="none" stroke="#5a4a42" stroke-width="0.7" stroke-linejoin="round" stroke-linecap="round" opacity="0.8"/>
<path d="M1140.6,483.2 Q1133.5,483.3 1130.6,481.1 Q1127.7,478.9 1124.2,478.2 Q1120.7,477.5 1117.5,477.3 Q1114.3,477.1 1111.1,478.3 Q1107.8,479.5 1104.7,481.7 Q1101.7,484.0 1101.3,486.4 Q1100.9,488.9 1099.2,492.2 Q1097.6,495.4 1097.5,498.9 Q1097.3,502.4 1096.1,505.9 L1095.0,509.3" fill="none" stroke="#5a4a42" stroke-width="0.7" stroke-linejoin="round" stroke-linecap="round" opacity="0.8"/>
<path d="M1038.2,759.8 Q1030.5,762.4 1027.3,763.1 Q1024.1,763.8 1021.2,766.1 Q1018.3,768.4 1016.7,770.8 Q1015.0,773.2 1013.2,776.9 L1011.4,780.7" fill="none" stroke="#5a4a42" stroke-width="0.7" stroke-linejoin="round" stroke-linecap="round" opacity="0.8"/>
<path d="M1171.4,413.1 Q1171.6,405.3 1174.4,403.0 Q1177.1,400.8 1178.7,397.4 Q1180.3,393.9 1183.5,393.9 Q1186.7,393.8 1190.5,395.0 Q1194.3,396.2 1197.4,395.9 Q1200.6,395.6 1203.2,398.6 Q1205.8,401.5 1209.2,401.6 Q1212.6,401.6 1215.9,401.6 Q1219.2,401.6 1222.4,403.6 L1225.6,405.5" fill="none" stroke="#5a4a42" stroke-width="0.7" stroke-linejoin="round" stroke-linecap="round" opacity="0.8"/>
<path d="M1076.8,607.3 Q1070.3,608.3 1067.6,606.1 Q1064.9,603.8 1063.5,601.5 Q1062.2,599.2 1059.0,597.3 Q1055.9,595.4 1051.7,597.0 L1047.4,598.6" fill="none" stroke="#5a4a42" stroke-width="0.7" stroke-linejoin="round" stroke-linecap="round" opacity="0.8"/>
<path d="M1055.0,325.6 Q1062.1,328.1 1065.7,327.9 Q1069.2,327.7 1071.6,325.0 Q1074.0,322.2 1077.1,321.5 Q1080.2,320.9 1083.8,320.8 Q1087.4,320.7 1090.0,323.2 Q1092.6,325.8 1096.2,327.1 Q1099.7,328.4 1102.5,328.0 Q1105.2,327.6 1108.5,328.1 Q1111.8,328.5 1115.1,326.5 L1118.5,324.5" fill="none" stroke="#5a4a42" stroke-width="0.7" stroke-linejoin="round" stroke-linecap="round" opacity="0.8"/>
<path d="M1107.5,562.0 Q1111.5,556.4 1110.5,553.1 Q1109.5,549.8 1110.8,547.1 Q1112.1,544.3 1113.9,541.2 Q1115.8,538.0 1115.0,534.4 Q1114.1,530.8 1112.2,527.6 Q1110.4,524.4 1107.8,522.2 Q1105.2,519.9 1101.9,518.2 Q1098.5,516.5 1095.9,514.7 Q1093.2,513.0 1091.0,510.1 L1088.8,507.3" fill="none" stroke="#5a4a42" stroke-width="0.7" stroke-linejoin="round" stroke-linecap="round" opacity="0.8"/>
<path d="M1064.1,627.3 Q1071.8,627.7 1074.6,627.3 Q1077.4,626.9 1081.5,626.4 L1085.6,625.8" fill="none" stroke="#5a4a42" stroke-width="0.7" stroke-linejoin="round" stroke-linecap="round" opacity="0.8"/>
<path d="M1236.0,408.3 Q1232.7,401.6 1228.6,401.0 Q1224.5,400.5 1223.8,396.8 Q1223.1,393.1 1223.8,389.9 L1224.5,386.7" fill="none" stroke="#5a4a42" stroke-width="0.7" stroke-linejoin="round" stroke-linecap="round" opacity="0.8"/>
<path d="M1076.9,564.2 Q1075.1,571.9 1076.7,574.0 Q1078.2,576.0 1081.8,577.9 Q1085.3,579.9 1086.3,582.4 Q1087.3,584.9 1089.6,588.8 Q1091.8,592.8 1090.9,595.6 L1089.9,598.3" fill="none" stroke="#5a4a42" stroke-width="0.7" stroke-linejoin="round" stroke-linecap="round" opacity="0.8"/>
<path d="M1220.7,408.1 Q1226.5,409.2 1230.5,406.5 Q1234.6,403.8 1237.1,403.9 Q1239.5,404.1 1242.8,406.5 Q1246.1,408.9 1249.3,408.6 Q1252.6,408.3 1256.9,409.2 Q1261.2,410.1 1264.1,408.5 Q1267.0,406.9 1270.3,404.6 Q1273.7,402.3 1276.8,403.0 Q1279.9,403.7 1282.7,402.8 L1285.6,401.9" fill="none" stroke="#5a4a42" stroke-width="0.7" stroke-linejoin="round" stroke-linecap="round" opacity="0.8"/>
<path d="M1256.4,373.7 Q1259.7,367.9 1262.7,365.8 L1265.6,363.8" fill="none" stroke="#5a4a42" stroke-width="0.7" stroke-linejoin="round" stroke-linecap="round" opacity="0.8"/>
<path d="M1284.9,520.6 Q1281.8,514.0 1282.7,511.0 Q1283.7,508.0 1283.6,503.7 Q1283.6,499.4 1287.1,498.6 Q1290.7,497.8 1293.0,495.5 Q1295.2,493.1 1298.7,491.5 Q1302.1,490.0 1305.7,488.9 Q1309.4,487.8 1312.5,488.4 Q1315.7,489.0 1318.3,489.7 Q1320.9,490.4 1324.5,491.5 L1328.2,492.7" fill="none" stroke="#5a4a42" stroke-width="0.7" stroke-linejoin="round" stroke-linecap="round" opacity="0.8"/>
<path d="M1190.2,454.0 Q1197.1,452.4 1199.2,449.8 Q1201.2,447.3 1204.9,447.1 Q1208.5,446.9 1211.3,448.8 Q1214.1,450.8 1216.3,453.2 Q1218.6,455.6 1221.9,458.1 Q1225.3,460.6 1227.6,462.1 Q1230.0,463.7 1232.2,466.3 Q1234.4,468.9 1234.9,472.3 Q1235.3,475.7 1234.8,478.8 L1234.2,481.9" fill="none" stroke="#5a4a42" stroke-width="0.7" stroke-linejoin="round" stroke-linecap="round" opacity="0.8"/>
<path d="M1030.8,384.6 Q1027.2,378.4 1025.0,375.0 Q1022.7,371.5 1024.3,368.3 Q1025.8,365.1 1028.3,362.3 Q1030.8,359.5 1032.8,357.5 Q1034.7,355.4 1034.1,352.5 Q1033.4,349.6 1035.9,346.2 Q1038.4,342.7 1039.2,339.1 Q1040.1,335.5 1043.0,333.9 Q1045.8,332.4 1048.6,332.2 L1051.4,332.0" fill="none" stroke="#5a4a42" stroke-width="0.7" stroke-linejoin="round" stroke-linecap="round" opacity="0.8"/>
<path d="M1034.4,384.6 Q1041.3,383.6 1045.0,382.4 Q1048.8,381.2 1049.8,377.4 Q1050.8,373.6 1050.4,370.1 Q1049.9,366.5 1049.1,363.9 Q1048.2,361.3 1048.5,357.2 Q1048.8,353.1 1047.9,350.6 Q1047.1,348.1 1043.2,345.2 Q1039.2,342.3 1037.0,341.8 Q1034.7,341.4 1031.7,338.4 L1028.7,335.4" fill="none" stroke="#5a4a42" stroke-width="0.7" stroke-linejoin="round" stroke-linecap="round" opacity="0.8"/>
<path d="M1010.8,812.4 Q1017.3,812.2 1020.3,813.3 Q1023.3,814.3 1026.8,814.4 Q1030.3,814.4 1033.3,812.0 Q1036.3,809.5 1039.3,809.1 Q1042.4,808.7 1044.7,806.3 L1047.0,803.9" fill="none" stroke="#5a4a42" stroke-width="0.7" stroke-linejoin="round" stroke-linecap="round" opacity="0.8"/>
<path d="M1043.1,292.3 Q1041.3,286.2 1039.8,282.4 L1038.3,278.5" fill="none" stroke="#5a4a42" stroke-width="0.7" stroke-linejoin="round" stroke-linecap="round" opacity="0.8"/>
<path d="M1302.6,499.2 Q1305.7,506.2 1309.8,506.4 Q1313.9,506.5 1315.3,509.8 Q1316.6,513.0 1318.0,516.0 Q1319.4,519.0 1322.6,521.5 Q1325.8,524.0 1327.2,526.4 Q1328.5,528.7 1330.4,531.6 Q1332.3,534.5 1332.1,539.1 Q1332.0,543.6 1335.6,544.6 Q1339.3,545.6 1341.8,545.8 L1344.3,546.0" fill="none" stroke="#5a4a42" stroke-width="0.7" stroke-linejoin="round" stroke-linecap="round" opacity="0.8"/>
<path d="M1025.7,824.0 Q1019.7,818.1 1018.2,815.4 Q1016.8,812.7 1013.8,811.7 Q1010.8,810.7 1008.9,807.1 L1007.0,803.5" fill="none" stroke="#5a4a42" stroke-width="0.7" stroke-linejoin="round" stroke-linecap="round" opacity="0.8"/>
<path d="M1290.5,499.7 Q1297.1,496.3 1300.3,498.7 Q1303.5,501.0 1306.6,500.9 Q1309.8,500.8 1313.1,499.4 Q1316.5,497.9 1319.8,497.8 Q1323.1,497.7 1327.1,496.5 Q1331.2,495.4 1335.0,497.0 Q1338.8,498.6 1342.1,497.6 Q1345.5,496.6 1348.0,498.3 Q1350.5,500.0 1352.5,502.8 L1354.4,505.6" fill="none" stroke="#5a4a42" stroke-width="0.7" stroke-linejoin="round" stroke-linecap="round" opacity="0.8"/>
<path d="M1044.0,385.9 Q1051.6,386.1 1054.5,384.5 Q1057.3,383.0 1057.8,380.0 Q1058.3,377.0 1059.2,373.0 Q1060.0,369.0 1062.7,366.7 Q1065.5,364.4 1065.9,361.5 Q1066.3,358.6 1065.2,355.1 Q1064.0,351.5 1062.0,349.8 Q1059.9,348.0 1056.4,347.6 Q1052.9,347.1 1050.2,349.1 L1047.4,351.1" fill="none" stroke="#5a4a42" stroke-width="0.7" stroke-linejoin="round" stroke-linecap="round" opacity="0.8"/>
<path d="M1113.3,563.3 Q1117.0,558.6 1120.1,556.2 Q1123.2,553.8 1125.8,552.3 Q1128.5,550.7 1132.5,549.8 Q1136.5,548.9 1138.6,549.9 Q1140.8,551.0 1143.0,554.0 Q1145.2,556.9 1146.4,560.2 Q1147.7,563.5 1148.4,566.7 Q1149.1,570.0 1150.5,572.9 Q1151.8,575.7 1151.2,579.9 L1150.7,584.0" fill="none" stroke="#5a4a42" stroke-width="0.7" stroke-linejoin="round" stroke-linecap="round" opacity="0.8"/>
<path d="M1064.8,654.0 Q1071.0,652.3 1075.1,650.7 Q1079.2,649.1 1081.5,646.6 L1083.7,644.1" fill="none" stroke="#5a4a42" stroke-width="0.7" stroke-linejoin="round" stroke-linecap="round" opacity="0.8"/>
<path d="M1062.7,597.5 Q1055.4,599.5 1053.3,602.1 Q1051.2,604.8 1049.7,608.4 Q1048.3,612.1 1046.1,614.2 L1043.9,616.3" fill="none" stroke="#5a4a42" stroke-width="0.7" stroke-linejoin="round" stroke-linecap="round" opacity="0.8"/>
<path d="M1034.5,779.2 Q1027.9,780.3 1024.3,781.6 Q1020.8,783.0 1017.9,785.1 Q1015.0,787.1 1014.2,790.9 Q1013.4,794.6 1014.5,797.6 Q1015.7,800.5 1018.3,803.1 Q1020.9,805.6 1020.4,808.8 Q1020.0,812.0 1018.6,815.0 Q1017.2,818.1 1016.1,822.2 Q1015.1,826.4 1016.1,829.9 L1017.2,833.4" fill="none" stroke="#5a4a42" stroke-width="0.7" stroke-linejoin="round" stroke-linecap="round" opacity="0.8"/>
<path d="M1260.2,365.1 Q1258.7,372.1 1256.1,374.1 Q1253.5,376.2 1250.0,377.3 Q1246.5,378.4 1243.2,379.2 Q1239.9,380.1 1236.0,378.7 L1232.1,377.3" fill="none" stroke="#5a4a42" stroke-width="0.7" stroke-linejoin="round" stroke-linecap="round" opacity="0.8"/>
<path d="M1190.2,561.3 Q1195.9,556.6 1198.2,554.6 Q1200.5,552.5 1201.9,549.1 Q1203.3,545.8 1203.9,542.6 Q1204.6,539.5 1207.4,536.7 Q1210.3,534.0 1211.0,530.3 Q1211.7,526.6 1213.4,523.3 Q1215.2,520.0 1218.1,519.5 Q1221.0,519.1 1225.2,519.0 Q1229.4,519.0 1232.8,519.0 L1236.2,519.0" fill="none" stroke="#5a4a42" stroke-width="0.7" stroke-linejoin="round" stroke-linecap="round" opacity="0.8"/>
<path d="M1113.6,516.5 Q1108.0,514.7 1103.8,513.0 Q1099.5,511.4 1096.6,511.0 Q1093.7,510.5 1092.0,507.7 Q1090.2,504.9 1087.3,503.1 Q1084.4,501.3 1081.2,499.4 Q1078.0,497.6 1074.2,498.1 Q1070.5,498.7 1067.6,496.0 Q1064.8,493.4 1063.7,491.0 Q1062.6,488.6 1064.5,485.0 L1066.5,481.5" fill="none" stroke="#5a4a42" stroke-width="0.7" stroke-linejoin="round" stroke-linecap="round" opacity="0.8"/>
<path d="M1164.9,626.1 Q1170.9,630.4 1174.7,631.6 Q1178.4,632.9 1180.8,631.4 Q1183.2,630.0 1185.9,626.5 Q1188.6,623.0 1190.1,620.4 Q1191.7,617.9 1193.1,615.1 Q1194.6,612.3 1197.2,610.0 Q1199.7,607.8 1203.2,605.4 Q1206.8,603.0 1207.9,599.7 Q1209.1,596.5 1212.3,595.1 L1215.5,593.6" fill="none" stroke="#5a4a42" stroke-width="0.7" stroke-linejoin="round" stroke-linecap="round" opacity="0.8"/>
<path d="M1098.6,376.2 Q1103.6,382.1 1105.8,384.1 Q1108.0,386.1 1112.0,385.9 Q1116.0,385.7 1118.1,388.0 Q1120.2,390.3 1123.1,391.6 Q1126.0,392.9 1128.6,395.6 Q1131.1,398.3 1131.4,401.4 Q1131.8,404.5 1129.7,407.5 Q1127.6,410.6 1126.6,413.7 Q1125.6,416.8 1126.3,420.4 L1127.1,424.0" fill="none" stroke="#5a4a42" stroke-width="0.7" stroke-linejoin="round" stroke-linecap="round" opacity="0.8"/>
<path d="M1052.2,379.2 Q1052.5,385.7 1050.7,389.4 Q1048.9,393.1 1049.2,396.0 Q1049.4,399.0 1052.1,402.1 Q1054.7,405.2 1057.1,406.6 Q1059.5,408.1 1062.8,408.5 Q1066.1,408.9 1069.6,407.9 Q1073.1,406.9 1075.0,404.0 Q1076.9,401.2 1076.7,397.7 Q1076.4,394.3 1077.5,390.5 L1078.5,386.7" fill="none" stroke="#5a4a42" stroke-width="0.7" stroke-linejoin="round" stroke-linecap="round" opacity="0.8"/>
<path d="M1253.4,530.8 Q1259.5,525.8 1259.9,522.0 Q1260.3,518.2 1262.2,516.4 Q1264.1,514.6 1266.8,511.4 Q1269.5,508.2 1272.3,507.2 Q1275.1,506.1 1276.6,502.4 Q1278.2,498.7 1278.2,495.0 Q1278.2,491.3 1278.7,487.8 Q1279.2,484.3 1278.7,480.6 Q1278.1,477.0 1280.5,474.7 L1282.9,472.5" fill="none" stroke="#5a4a42" stroke-width="0.7" stroke-linejoin="round" stroke-linecap="round" opacity="0.8"/>
<path d="M1074.7,299.1 Q1074.6,306.6 1076.6,309.9 Q1078.6,313.2 1079.2,316.6 Q1079.8,320.1 1081.2,321.8 Q1082.6,323.6 1084.3,327.3 Q1085.9,330.9 1087.6,334.4 Q1089.3,337.9 1092.4,339.5 Q1095.4,341.1 1096.9,343.5 Q1098.5,345.8 1099.0,350.0 Q1099.6,354.3 1101.3,356.0 L1103.0,357.8" fill="none" stroke="#5a4a42" stroke-width="0.7" stroke-linejoin="round" stroke-linecap="round" opacity="0.8"/>
<path d="M1033.2,475.8 Q1032.8,483.1 1035.4,486.0 Q1037.9,488.8 1037.9,492.1 Q1037.9,495.3 1037.5,498.3 Q1037.1,501.2 1035.3,504.2 Q1033.5,507.1 1033.8,511.0 Q1034.2,514.8 1036.2,516.4 Q1038.2,518.0 1039.5,522.2 Q1040.7,526.5 1040.3,529.7 Q1039.9,532.9 1041.1,536.5 L1042.3,540.2" fill="none" stroke="#5a4a42" stroke-width="0.7" stroke-linejoin="round" stroke-linecap="round" opacity="0.8"/>
<path d="M1068.1,317.0 Q1075.4,314.3 1078.7,314.0 Q1082.1,313.8 1084.6,313.4 Q1087.2,313.1 1091.1,312.5 Q1095.0,311.8 1097.4,308.0 Q1099.8,304.1 1102.9,302.5 Q1105.9,300.9 1109.2,299.7 Q1112.5,298.6 1114.8,296.5 Q1117.2,294.4 1120.1,292.5 L1123.1,290.5" fill="none" stroke="#5a4a42" stroke-width="0.7" stroke-linejoin="round" stroke-linecap="round" opacity="0.8"/>
<path d="M1231.5,427.2 Q1231.6,435.3 1232.4,438.5 Q1233.2,441.8 1236.4,443.3 Q1239.5,444.7 1240.8,448.4 Q1242.0,452.2 1245.0,454.0 Q1248.0,455.8 1251.2,457.9 Q1254.3,460.0 1257.2,458.8 Q1260.1,457.7 1262.5,455.4 Q1264.9,453.1 1266.9,450.0 Q1268.8,446.9 1267.1,443.7 L1265.5,440.4" fill="none" stroke="#5a4a42" stroke-width="0.7" stroke-linejoin="round" stroke-linecap="round" opacity="0.8"/>
<path d="M1102.4,375.2 Q1110.0,372.9 1111.0,370.0 Q1112.0,367.0 1113.0,363.4 Q1114.0,359.7 1115.4,356.5 Q1116.8,353.4 1116.0,350.4 Q1115.2,347.4 1114.3,344.1 Q1113.4,340.7 1110.3,337.4 Q1107.2,334.2 1104.3,335.0 Q1101.4,335.8 1097.5,336.8 Q1093.5,337.8 1091.0,336.3 L1088.5,334.9" fill="none" stroke="#5a4a42" stroke-width="0.7" stroke-linejoin="round" stroke-linecap="round" opacity="0.8"/>
<path d="M1261.8,493.4 Q1260.1,500.0 1259.3,503.9 Q1258.4,507.8 1258.7,510.9 Q1259.0,514.0 1259.9,517.7 Q1260.7,521.4 1258.4,523.7 Q1256.2,525.9 1252.8,528.3 Q1249.5,530.6 1246.7,533.2 Q1243.8,535.8 1243.2,539.5 Q1242.6,543.2 1243.7,545.7 Q1244.7,548.3 1248.4,549.6 L1252.2,551.0" fill="none" stroke="#5a4a42" stroke-width="0.7" stroke-linejoin="round" stroke-linecap="round" opacity="0.8"/>
<path d="M1166.1,563.8 Q1163.5,570.9 1159.7,571.6 Q1155.9,572.3 1153.3,574.1 Q1150.7,575.8 1148.3,578.8 Q1146.0,581.8 1145.6,585.7 Q1145.1,589.5 1142.0,591.1 Q1138.8,592.7 1135.2,592.5 Q1131.6,592.3 1127.9,592.3 Q1124.2,592.3 1121.2,591.9 Q1118.1,591.4 1114.2,589.7 L1110.3,587.9" fill="none" stroke="#5a4a42" stroke-width="0.7" stroke-linejoin="round" stroke-linecap="round" opacity="0.8"/>
<path d="M1029.3,755.6 Q1026.4,761.5 1024.0,764.5 Q1021.6,767.5 1019.2,769.5 Q1016.8,771.6 1016.7,775.5 Q1016.7,779.5 1018.4,782.2 Q1020.1,784.9 1023.0,786.0 Q1025.9,787.1 1029.3,788.1 Q1032.7,789.1 1035.3,791.0 Q1038.0,792.8 1040.8,794.6 L1043.7,796.5" fill="none" stroke="#5a4a42" stroke-width="0.7" stroke-linejoin="round" stroke-linecap="round" opacity="0.8"/>
<path d="M1114.6,377.6 Q1122.2,375.8 1124.6,377.1 Q1127.0,378.5 1130.5,379.3 Q1133.9,380.2 1137.5,379.0 L1141.1,377.8" fill="none" stroke="#5a4a42" stroke-width="0.7" stroke-linejoin="round" stroke-linecap="round" opacity="0.8"/>
<path d="M1020.6,805.3 Q1014.9,809.6 1013.3,812.8 Q1011.7,815.9 1008.8,816.4 L1006.0,817.0" fill="none" stroke="#5a4a42" stroke-width="0.7" stroke-linejoin="round" stroke-linecap="round" opacity="0.8"/>
<path d="M1056.9,393.9 Q1050.4,391.1 1046.9,393.8 Q1043.4,396.6 1042.6,399.2 Q1041.7,401.8 1039.1,404.2 Q1036.5,406.5 1033.2,407.7 Q1029.9,408.8 1027.2,406.6 Q1024.5,404.4 1020.1,404.5 Q1015.6,404.7 1014.0,401.6 Q1012.3,398.5 1008.9,398.5 Q1005.5,398.5 1001.6,397.7 L997.7,397.0" fill="none" stroke="#5a4a42" stroke-width="0.7" stroke-linejoin="round" stroke-linecap="round" opacity="0.8"/>
<path d="M1304.9,543.1 Q1309.7,538.7 1312.3,535.9 Q1314.8,533.1 1312.7,529.5 Q1310.6,526.0 1309.7,522.8 Q1308.7,519.7 1305.8,517.2 Q1303.0,514.7 1300.1,512.6 Q1297.2,510.5 1296.8,506.6 Q1296.5,502.8 1297.5,499.5 Q1298.5,496.2 1299.2,493.2 Q1299.8,490.1 1301.6,487.2 L1303.3,484.3" fill="none" stroke="#5a4a42" stroke-width="0.7" stroke-linejoin="round" stroke-linecap="round" opacity="0.8"/>
<path d="M1216.5,520.4 Q1212.8,526.6 1209.0,528.1 Q1205.3,529.7 1202.1,529.8 Q1198.8,529.9 1195.6,530.9 Q1192.4,531.8 1190.6,534.9 Q1188.9,538.0 1185.7,538.9 Q1182.5,539.9 1179.6,542.2 Q1176.7,544.5 1175.8,548.6 Q1174.8,552.6 1175.0,555.8 Q1175.2,558.9 1175.7,561.7 L1176.3,564.5" fill="none" stroke="#5a4a42" stroke-width="0.7" stroke-linejoin="round" stroke-linecap="round" opacity="0.8"/>
<path d="M1076.6,479.8 Q1077.3,472.5 1079.1,469.5 Q1081.0,466.5 1081.4,464.1 Q1081.8,461.7 1081.6,457.6 Q1081.4,453.4 1082.3,450.5 Q1083.2,447.5 1086.8,446.2 Q1090.4,444.8 1091.6,441.6 Q1092.8,438.3 1095.3,436.0 Q1097.7,433.6 1098.9,430.7 Q1100.2,427.9 1101.3,424.6 L1102.5,421.4" fill="none" stroke="#5a4a42" stroke-width="0.7" stroke-linejoin="round" stroke-linecap="round" opacity="0.8"/>
<path d="M1317.7,504.2 Q1324.5,507.1 1327.9,508.1 Q1331.4,509.2 1334.6,510.5 Q1337.8,511.9 1341.2,511.7 Q1344.6,511.6 1346.9,508.9 Q1349.2,506.2 1352.2,505.1 Q1355.1,503.9 1358.3,502.8 Q1361.6,501.6 1363.6,498.5 L1365.7,495.3" fill="none" stroke="#5a4a42" stroke-width="0.7" stroke-linejoin="round" stroke-linecap="round" opacity="0.8"/>
<path d="M1254.1,495.2 Q1260.3,495.6 1263.6,492.8 Q1266.9,490.0 1269.3,487.9 Q1271.7,485.8 1274.9,484.1 Q1278.2,482.4 1281.2,482.9 Q1284.3,483.4 1288.0,484.6 Q1291.7,485.7 1293.9,488.8 Q1296.1,491.9 1298.5,494.4 Q1300.9,496.9 1303.7,496.1 Q1306.6,495.3 1311.0,495.8 L1315.3,496.4" fill="none" stroke="#5a4a42" stroke-width="0.7" stroke-linejoin="round" stroke-linecap="round" opacity="0.8"/>
<path d="M961.7,349.9 Q968.4,351.8 969.5,355.0 Q970.6,358.2 974.0,361.0 Q977.3,363.9 980.0,363.7 Q982.6,363.5 986.9,361.5 Q991.1,359.6 993.8,359.1 Q996.4,358.7 999.7,357.7 Q1003.0,356.8 1005.4,352.8 Q1007.7,348.8 1009.9,347.4 Q1012.0,346.0 1012.3,342.0 L1012.6,337.9" fill="none" stroke="#5a4a42" stroke-width="0.7" stroke-linejoin="round" stroke-linecap="round" opacity="0.8"/>
<path d="M1213.4,416.9 Q1216.1,422.7 1219.3,425.2 Q1222.5,427.8 1226.2,428.1 Q1229.9,428.5 1232.1,430.6 Q1234.3,432.7 1236.2,435.6 Q1238.1,438.5 1237.9,441.5 Q1237.7,444.5 1238.4,447.8 Q1239.0,451.1 1237.4,454.7 Q1235.8,458.3 1234.4,461.1 Q1233.1,463.9 1229.2,465.8 L1225.3,467.8" fill="none" stroke="#5a4a42" stroke-width="0.7" stroke-linejoin="round" stroke-linecap="round" opacity="0.8"/>
<path d="M1075.0,268.2 Q1073.9,276.2 1076.9,278.0 Q1079.9,279.8 1083.1,280.9 Q1086.4,282.1 1090.2,283.0 Q1093.9,283.9 1096.6,285.4 Q1099.3,286.9 1102.5,288.5 Q1105.6,290.2 1108.2,287.7 L1110.8,285.3" fill="none" stroke="#5a4a42" stroke-width="0.7" stroke-linejoin="round" stroke-linecap="round" opacity="0.8"/>
<path d="M1130.0,383.3 Q1124.5,379.8 1120.6,380.4 Q1116.7,380.9 1113.8,378.7 Q1110.8,376.4 1111.0,373.6 Q1111.1,370.7 1108.4,367.2 Q1105.8,363.6 1102.2,363.1 Q1098.6,362.5 1095.8,362.1 Q1092.9,361.6 1090.6,364.5 Q1088.4,367.3 1085.6,369.7 Q1082.8,372.1 1079.7,371.6 L1076.6,371.1" fill="none" stroke="#5a4a42" stroke-width="0.7" stroke-linejoin="round" stroke-linecap="round" opacity="0.8"/>
<path d="M1117.7,487.1 Q1110.8,484.5 1107.1,484.6 Q1103.4,484.7 1101.3,486.9 Q1099.2,489.1 1097.7,491.6 Q1096.3,494.1 1096.0,497.3 Q1095.7,500.5 1094.5,504.4 Q1093.3,508.3 1094.0,511.0 Q1094.7,513.7 1094.5,517.2 Q1094.2,520.7 1090.9,523.4 Q1087.5,526.2 1084.7,526.2 L1081.8,526.3" fill="none" stroke="#5a4a42" stroke-width="0.7" stroke-linejoin="round" stroke-linecap="round" opacity="0.8"/>
<path d="M1178.1,416.3 Q1172.3,414.3 1169.2,412.1 Q1166.0,409.9 1162.1,409.8 Q1158.2,409.7 1155.2,408.4 Q1152.3,407.1 1149.5,404.2 Q1146.7,401.3 1146.3,398.4 L1145.9,395.5" fill="none" stroke="#5a4a42" stroke-width="0.7" stroke-linejoin="round" stroke-linecap="round" opacity="0.8"/>
<path d="M1001.7,364.6 Q1005.9,370.7 1008.2,372.6 Q1010.4,374.5 1013.7,377.5 Q1017.0,380.5 1019.2,382.7 Q1021.5,384.8 1022.7,387.8 Q1023.9,390.8 1026.7,392.9 Q1029.4,395.0 1032.0,397.2 Q1034.7,399.4 1037.9,398.7 Q1041.1,398.1 1042.9,395.2 Q1044.6,392.4 1045.2,388.3 L1045.8,384.3" fill="none" stroke="#5a4a42" stroke-width="0.7" stroke-linejoin="round" stroke-linecap="round" opacity="0.8"/>
<path d="M1034.7,565.2 Q1037.6,557.9 1038.9,555.5 Q1040.2,553.0 1040.2,549.4 Q1040.3,545.9 1042.1,542.6 Q1043.9,539.3 1046.9,536.4 Q1049.8,533.5 1053.1,533.7 Q1056.3,533.9 1059.2,534.5 Q1062.1,535.1 1064.8,538.0 Q1067.4,540.9 1070.6,543.6 Q1073.8,546.2 1077.0,545.4 L1080.1,544.7" fill="none" stroke="#5a4a42" stroke-width="0.7" stroke-linejoin="round" stroke-linecap="round" opacity="0.8"/>
<path d="M1156.3,631.3 Q1161.8,626.1 1161.6,622.7 Q1161.3,619.4 1162.9,615.7 Q1164.5,612.0 1163.4,609.4 Q1162.3,606.7 1159.9,604.2 Q1157.4,601.6 1155.2,598.8 Q1153.0,596.0 1152.5,591.9 Q1152.0,587.8 1152.1,584.9 Q1152.2,582.0 1155.5,580.3 Q1158.9,578.7 1159.4,574.9 L1159.9,571.1" fill="none" stroke="#5a4a42" stroke-width="0.7" stroke-linejoin="round" stroke-linecap="round" opacity="0.8"/>
<path d="M1065.4,445.4 Q1066.5,452.6 1066.1,455.5 Q1065.7,458.4 1067.5,462.5 Q1069.3,466.7 1067.7,469.3 Q1066.0,472.0 1068.1,475.2 Q1070.3,478.4 1072.2,481.5 Q1074.2,484.7 1077.2,486.5 Q1080.2,488.4 1080.2,491.7 Q1080.2,495.0 1081.6,498.6 Q1083.1,502.2 1083.9,505.4 L1084.7,508.6" fill="none" stroke="#5a4a42" stroke-width="0.7" stroke-linejoin="round" stroke-linecap="round" opacity="0.8"/>
<path d="M1284.4,467.2 Q1286.6,460.4 1289.5,459.2 Q1292.4,458.1 1293.4,454.5 Q1294.4,450.8 1293.1,447.1 Q1291.9,443.4 1289.8,441.1 Q1287.8,438.9 1287.7,435.0 Q1287.6,431.1 1287.7,427.3 Q1287.8,423.6 1286.4,420.3 Q1285.1,416.9 1285.4,413.5 Q1285.6,410.2 1284.9,408.0 L1284.1,405.8" fill="none" stroke="#5a4a42" stroke-width="0.7" stroke-linejoin="round" stroke-linecap="round" opacity="0.8"/>
<path d="M1073.3,423.3 Q1066.6,421.2 1064.2,419.2 Q1061.8,417.2 1059.1,416.3 Q1056.3,415.5 1051.9,414.4 Q1047.5,413.3 1044.5,412.2 Q1041.4,411.2 1038.4,412.7 Q1035.5,414.1 1032.7,415.1 Q1029.8,416.0 1025.7,416.6 Q1021.5,417.3 1020.6,413.9 Q1019.6,410.5 1016.1,408.7 L1012.5,407.0" fill="none" stroke="#5a4a42" stroke-width="0.7" stroke-linejoin="round" stroke-linecap="round" opacity="0.8"/>
<path d="M1025.1,836.9 Q1028.4,842.1 1030.0,846.0 Q1031.6,849.8 1032.2,852.9 Q1032.8,855.9 1036.8,856.8 Q1040.7,857.7 1043.4,859.8 Q1046.0,861.9 1048.2,864.2 Q1050.3,866.6 1050.3,870.9 Q1050.3,875.2 1048.2,877.0 Q1046.0,878.7 1046.5,882.2 Q1047.0,885.7 1046.6,889.2 L1046.3,892.7" fill="none" stroke="#5a4a42" stroke-width="0.7" stroke-linejoin="round" stroke-linecap="round" opacity="0.8"/>
<path d="M1050.8,899.3 Q1044.3,895.8 1042.5,893.1 Q1040.8,890.4 1038.3,887.6 Q1035.8,884.8 1032.7,882.6 Q1029.5,880.3 1026.4,879.9 Q1023.3,879.4 1020.6,877.0 Q1018.0,874.5 1015.5,873.3 Q1012.9,872.0 1009.9,868.8 Q1006.9,865.6 1006.1,862.4 Q1005.3,859.2 1003.7,856.9 L1002.1,854.5" fill="none" stroke="#5a4a42" stroke-width="0.7" stroke-linejoin="round" stroke-linecap="round" opacity="0.8"/>
<path d="M1093.7,853.9 Q1086.4,851.5 1083.6,849.2 Q1080.8,846.9 1077.7,848.0 Q1074.6,849.1 1071.5,850.8 Q1068.5,852.4 1067.3,856.0 Q1066.1,859.6 1063.8,861.5 Q1061.6,863.5 1057.8,865.0 Q1054.1,866.5 1051.0,865.4 Q1048.0,864.2 1044.4,865.4 Q1040.9,866.5 1036.9,865.5 L1032.8,864.4" fill="none" stroke="#5a4a42" stroke-width="0.7" stroke-linejoin="round" stroke-linecap="round" opacity="0.8"/>
<path d="M1096.7,370.9 Q1104.2,370.7 1107.2,373.8 Q1110.1,376.9 1111.5,380.0 Q1112.8,383.0 1113.3,386.4 Q1113.8,389.8 1113.5,392.6 Q1113.3,395.3 1109.8,397.8 Q1106.3,400.3 1105.6,403.4 Q1104.9,406.5 1105.0,409.3 Q1105.1,412.1 1106.7,415.0 Q1108.2,417.8 1110.8,421.2 L1113.5,424.5" fill="none" stroke="#5a4a42" stroke-width="0.7" stroke-linejoin="round" stroke-linecap="round" opacity="0.8"/>
<path d="M1248.4,542.0 Q1253.5,537.9 1256.6,536.1 Q1259.7,534.2 1263.7,534.6 Q1267.7,535.0 1271.1,536.3 Q1274.5,537.5 1276.8,534.4 Q1279.1,531.2 1280.1,528.2 Q1281.1,525.3 1282.0,521.9 Q1282.8,518.6 1282.2,515.7 Q1281.5,512.9 1281.7,508.5 Q1281.9,504.1 1281.2,501.2 L1280.5,498.3" fill="none" stroke="#5a4a42" stroke-width="0.7" stroke-linejoin="round" stroke-linecap="round" opacity="0.8"/>
<path d="M1027.3,452.3 Q1032.8,449.8 1036.9,448.1 Q1041.0,446.4 1044.4,445.4 Q1047.8,444.5 1049.9,446.7 Q1051.9,449.0 1055.8,447.9 Q1059.7,446.7 1063.0,445.2 Q1066.4,443.7 1069.0,443.3 Q1071.7,442.9 1074.5,441.1 Q1077.3,439.2 1079.7,436.8 Q1082.0,434.5 1085.8,433.3 L1089.6,432.1" fill="none" stroke="#5a4a42" stroke-width="0.7" stroke-linejoin="round" stroke-linecap="round" opacity="0.8"/>
<path d="M1212.1,580.9 Q1218.6,577.7 1221.0,575.4 Q1223.4,573.1 1226.9,572.7 L1230.4,572.4" fill="none" stroke="#5a4a42" stroke-width="0.7" stroke-linejoin="round" stroke-linecap="round" opacity="0.8"/>
<path d="M1086.6,352.1 Q1092.2,355.1 1095.0,356.6 Q1097.9,358.2 1100.5,361.0 Q1103.1,363.8 1103.1,367.6 Q1103.0,371.4 1104.7,374.9 Q1106.4,378.5 1105.0,381.5 Q1103.6,384.5 1100.5,386.3 Q1097.4,388.2 1094.4,390.7 Q1091.4,393.1 1088.7,393.7 Q1086.1,394.3 1083.6,397.7 L1081.1,401.1" fill="none" stroke="#5a4a42" stroke-width="0.7" stroke-linejoin="round" stroke-linecap="round" opacity="0.8"/>
<path d="M1018.1,800.1 Q1022.2,804.3 1026.4,806.8 Q1030.5,809.4 1033.2,809.2 Q1035.9,809.0 1038.8,806.5 Q1041.8,804.0 1042.7,800.5 Q1043.6,797.1 1044.7,793.5 Q1045.8,789.8 1044.2,786.9 L1042.6,784.0" fill="none" stroke="#5a4a42" stroke-width="0.7" stroke-linejoin="round" stroke-linecap="round" opacity="0.8"/>
<path d="M1082.2,363.3 Q1082.3,356.7 1083.4,353.2 Q1084.6,349.6 1088.2,348.3 Q1091.7,346.9 1094.9,347.0 Q1098.0,347.1 1100.7,344.0 Q1103.4,340.9 1104.7,337.2 Q1106.0,333.5 1104.5,330.4 Q1103.1,327.3 1105.0,323.8 Q1106.8,320.3 1108.9,318.0 Q1110.9,315.7 1115.2,314.6 L1119.4,313.6" fill="none" stroke="#5a4a42" stroke-width="0.7" stroke-linejoin="round" stroke-linecap="round" opacity="0.8"/>
<path d="M1261.8,504.6 Q1254.5,504.7 1251.7,503.3 Q1249.0,501.9 1247.1,498.8 Q1245.2,495.7 1241.3,494.2 Q1237.3,492.7 1235.3,491.1 Q1233.3,489.5 1230.1,487.2 Q1226.8,484.8 1224.0,484.0 Q1221.2,483.3 1218.2,480.4 Q1215.2,477.5 1214.9,474.3 Q1214.6,471.2 1216.6,468.0 L1218.6,464.9" fill="none" stroke="#5a4a42" stroke-width="0.7" stroke-linejoin="round" stroke-linecap="round" opacity="0.8"/>
<path d="M1065.5,300.1 Q1062.7,292.9 1059.9,291.1 Q1057.0,289.3 1058.0,285.4 Q1058.9,281.5 1059.3,278.8 Q1059.7,276.2 1059.9,272.4 Q1060.0,268.7 1058.4,265.1 L1056.8,261.5" fill="none" stroke="#5a4a42" stroke-width="0.7" stroke-linejoin="round" stroke-linecap="round" opacity="0.8"/>
<path d="M1214.4,503.4 Q1209.6,509.7 1209.9,513.2 Q1210.3,516.7 1208.7,520.1 Q1207.1,523.5 1209.9,525.9 Q1212.6,528.2 1216.3,528.9 Q1219.9,529.7 1223.0,530.3 Q1226.1,531.0 1229.1,532.8 Q1232.1,534.7 1233.6,538.2 Q1235.2,541.7 1237.3,543.6 Q1239.4,545.5 1240.3,548.8 L1241.3,552.2" fill="none" stroke="#5a4a42" stroke-width="0.7" stroke-linejoin="round" stroke-linecap="round" opacity="0.8"/>
<path d="M1141.0,504.6 Q1144.1,509.8 1144.8,513.5 Q1145.6,517.3 1148.0,519.8 Q1150.4,522.2 1153.3,524.4 Q1156.2,526.6 1157.3,530.3 Q1158.4,534.0 1156.6,536.8 Q1154.9,539.6 1155.2,542.1 Q1155.5,544.6 1154.8,548.6 Q1154.2,552.6 1153.9,555.5 Q1153.6,558.5 1153.7,562.1 L1153.8,565.7" fill="none" stroke="#5a4a42" stroke-width="0.7" stroke-linejoin="round" stroke-linecap="round" opacity="0.8"/>
<path d="M1099.2,919.7 Q1100.1,912.0 1099.6,909.2 Q1099.2,906.4 1101.1,903.7 Q1103.0,901.1 1104.5,897.2 Q1106.0,893.3 1104.9,890.3 Q1103.8,887.3 1101.1,884.2 Q1098.3,881.1 1098.8,878.7 L1099.3,876.3" fill="none" stroke="#5a4a42" stroke-width="0.7" stroke-linejoin="round" stroke-linecap="round" opacity="0.8"/>
<path d="M1195.8,532.3 Q1202.1,536.4 1205.7,535.9 Q1209.2,535.4 1210.6,532.7 Q1212.0,530.0 1215.6,529.1 Q1219.2,528.3 1221.4,526.2 Q1223.6,524.0 1225.3,520.7 Q1227.1,517.4 1226.9,513.8 Q1226.7,510.1 1227.4,506.9 Q1228.2,503.7 1227.3,500.3 Q1226.5,496.8 1224.3,494.1 L1222.2,491.4" fill="none" stroke="#5a4a42" stroke-width="0.7" stroke-linejoin="round" stroke-linecap="round" opacity="0.8"/>
<path d="M1050.7,733.9 Q1047.0,728.5 1046.1,724.3 Q1045.2,720.1 1047.5,717.4 Q1049.8,714.8 1053.7,713.7 L1057.6,712.6" fill="none" stroke="#5a4a42" stroke-width="0.7" stroke-linejoin="round" stroke-linecap="round" opacity="0.8"/>
<path d="M1028.5,851.3 Q1031.1,858.0 1031.4,860.5 Q1031.8,863.0 1028.8,866.4 Q1025.9,869.8 1023.4,872.0 Q1021.0,874.1 1016.9,874.2 Q1012.8,874.3 1009.6,875.2 L1006.4,876.1" fill="none" stroke="#5a4a42" stroke-width="0.7" stroke-linejoin="round" stroke-linecap="round" opacity="0.8"/>
<path d="M1142.4,341.0 Q1135.8,337.2 1134.9,334.2 Q1134.0,331.1 1131.2,329.9 Q1128.5,328.7 1126.3,324.9 Q1124.2,321.1 1122.6,318.3 Q1121.0,315.5 1119.4,313.3 Q1117.8,311.1 1113.2,309.9 Q1108.6,308.7 1106.1,307.6 Q1103.6,306.5 1100.2,305.3 Q1096.7,304.1 1094.5,302.1 L1092.4,300.1" fill="none" stroke="#5a4a42" stroke-width="0.7" stroke-linejoin="round" stroke-linecap="round" opacity="0.8"/>
<path d="M1246.7,438.2 Q1246.0,444.2 1247.0,448.4 Q1248.0,452.6 1245.4,455.4 Q1242.8,458.3 1239.3,457.5 Q1235.8,456.7 1232.2,457.7 Q1228.6,458.8 1227.0,462.7 Q1225.3,466.5 1224.0,469.6 Q1222.6,472.7 1219.5,474.1 Q1216.5,475.4 1215.3,478.5 Q1214.1,481.5 1211.6,484.7 L1209.2,487.9" fill="none" stroke="#5a4a42" stroke-width="0.7" stroke-linejoin="round" stroke-linecap="round" opacity="0.8"/>
<path d="M1070.7,925.4 Q1077.8,924.2 1079.6,921.0 Q1081.3,917.8 1084.6,916.0 Q1087.9,914.1 1089.1,910.2 Q1090.3,906.4 1092.9,904.4 Q1095.6,902.4 1099.5,903.3 Q1103.5,904.2 1106.7,905.8 L1109.8,907.3" fill="none" stroke="#5a4a42" stroke-width="0.7" stroke-linejoin="round" stroke-linecap="round" opacity="0.8"/>
<path d="M976.9,299.8 Q982.9,297.8 987.4,297.9 Q991.8,298.0 994.5,295.5 Q997.2,293.0 997.6,289.9 L998.0,286.8" fill="none" stroke="#5a4a42" stroke-width="0.7" stroke-linejoin="round" stroke-linecap="round" opacity="0.8"/>
<path d="M1093.8,870.1 Q1098.1,875.9 1099.5,878.6 L1100.8,881.3" fill="none" stroke="#5a4a42" stroke-width="0.7" stroke-linejoin="round" stroke-linecap="round" opacity="0.8"/>
<path d="M1025.9,357.0 Q1026.2,364.4 1025.9,367.2 Q1025.6,369.9 1029.0,372.4 Q1032.3,374.8 1031.8,379.0 Q1031.2,383.2 1033.8,385.4 Q1036.5,387.6 1038.9,389.6 Q1041.3,391.6 1045.1,392.6 Q1048.8,393.6 1052.3,393.5 Q1055.7,393.5 1058.1,391.8 Q1060.4,390.2 1063.4,387.8 L1066.4,385.5" fill="none" stroke="#5a4a42" stroke-width="0.7" stroke-linejoin="round" stroke-linecap="round" opacity="0.8"/>
<path d="M1048.6,271.9 Q1045.2,278.6 1045.6,281.7 Q1046.1,284.8 1048.8,287.1 Q1051.5,289.5 1054.8,289.6 Q1058.1,289.7 1062.6,289.9 Q1067.2,290.2 1068.8,287.9 Q1070.5,285.7 1074.0,283.9 Q1077.6,282.0 1080.2,281.9 Q1082.7,281.9 1086.4,281.0 Q1090.1,280.2 1092.7,282.4 L1095.4,284.5" fill="none" stroke="#5a4a42" stroke-width="0.7" stroke-linejoin="round" stroke-linecap="round" opacity="0.8"/>
<path d="M1083.5,403.0 Q1077.6,399.2 1075.1,395.7 Q1072.5,392.2 1071.1,389.2 Q1069.7,386.3 1067.9,384.0 Q1066.2,381.7 1062.8,380.2 Q1059.4,378.7 1056.5,376.5 Q1053.5,374.3 1054.2,370.9 Q1054.8,367.5 1054.2,363.3 Q1053.5,359.1 1050.7,357.3 Q1048.0,355.6 1044.1,354.3 L1040.1,353.0" fill="none" stroke="#5a4a42" stroke-width="0.7" stroke-linejoin="round" stroke-linecap="round" opacity="0.8"/>
<path d="M1134.4,354.7 Q1134.0,362.7 1134.5,365.1 Q1134.9,367.4 1132.1,370.6 Q1129.3,373.9 1127.8,376.5 Q1126.3,379.1 1122.4,378.6 Q1118.5,378.1 1115.2,376.9 Q1112.0,375.8 1109.0,373.8 Q1106.1,371.9 1102.9,370.3 Q1099.8,368.7 1096.3,366.9 Q1092.9,365.1 1090.4,364.8 L1087.8,364.6" fill="none" stroke="#5a4a42" stroke-width="0.7" stroke-linejoin="round" stroke-linecap="round" opacity="0.8"/>
<path d="M1205.2,442.1 Q1198.8,442.5 1195.3,445.5 Q1191.8,448.6 1190.8,451.5 Q1189.8,454.3 1189.2,456.9 Q1188.6,459.5 1187.8,463.6 Q1187.1,467.8 1187.8,471.6 Q1188.5,475.4 1188.5,479.0 Q1188.4,482.5 1189.4,485.2 Q1190.3,488.0 1193.4,489.3 Q1196.4,490.7 1198.9,489.7 L1201.4,488.7" fill="none" stroke="#5a4a42" stroke-width="0.7" stroke-linejoin="round" stroke-linecap="round" opacity="0.8"/>
<path d="M1280.0,423.5 Q1272.8,420.6 1272.4,417.1 Q1272.1,413.7 1271.7,410.7 Q1271.3,407.7 1272.8,404.2 Q1274.4,400.7 1274.7,397.0 Q1275.0,393.2 1273.1,390.8 Q1271.3,388.5 1268.1,388.4 Q1264.8,388.3 1261.3,386.9 Q1257.7,385.5 1254.0,384.5 Q1250.4,383.4 1248.2,385.1 L1246.0,386.9" fill="none" stroke="#5a4a42" stroke-width="0.7" stroke-linejoin="round" stroke-linecap="round" opacity="0.8"/>
<path d="M1032.4,820.8 Q1034.1,828.0 1032.4,831.0 Q1030.8,834.1 1029.9,837.5 Q1028.9,841.0 1028.0,843.7 Q1027.0,846.4 1028.6,850.1 Q1030.3,853.9 1033.8,854.0 Q1037.3,854.0 1041.2,855.5 Q1045.1,857.0 1048.5,857.6 Q1051.9,858.2 1053.7,855.2 Q1055.4,852.2 1057.1,849.0 L1058.7,845.8" fill="none" stroke="#5a4a42" stroke-width="0.7" stroke-linejoin="round" stroke-linecap="round" opacity="0.8"/>
<path d="M1058.6,291.0 Q1064.6,290.7 1068.1,291.8 Q1071.7,293.0 1074.5,294.8 Q1077.3,296.7 1081.5,297.2 Q1085.7,297.7 1087.5,295.7 Q1089.3,293.6 1092.1,290.4 Q1095.0,287.1 1098.4,285.7 Q1101.8,284.3 1104.5,284.4 L1107.2,284.4" fill="none" stroke="#5a4a42" stroke-width="0.7" stroke-linejoin="round" stroke-linecap="round" opacity="0.8"/>
<path d="M1282.3,422.3 Q1286.9,426.8 1290.3,427.9 Q1293.6,429.0 1296.2,431.0 Q1298.7,433.1 1302.2,435.1 Q1305.8,437.2 1309.2,435.1 Q1312.6,433.1 1315.0,431.2 Q1317.3,429.3 1320.6,426.8 L1323.8,424.3" fill="none" stroke="#5a4a42" stroke-width="0.7" stroke-linejoin="round" stroke-linecap="round" opacity="0.8"/>
<path d="M1228.3,444.3 Q1235.1,448.4 1237.5,451.1 Q1239.9,453.7 1242.2,455.5 Q1244.4,457.2 1248.1,455.5 Q1251.9,453.9 1253.4,450.9 Q1255.0,447.9 1258.8,447.3 Q1262.6,446.6 1264.0,444.1 Q1265.5,441.5 1268.2,439.3 Q1270.9,437.0 1274.0,433.9 Q1277.1,430.8 1276.8,427.8 L1276.5,424.7" fill="none" stroke="#5a4a42" stroke-width="0.7" stroke-linejoin="round" stroke-linecap="round" opacity="0.8"/>
<path d="M1043.2,487.1 Q1037.0,485.1 1033.8,485.3 Q1030.5,485.5 1026.2,483.7 L1021.9,481.9" fill="none" stroke="#5a4a42" stroke-width="0.7" stroke-linejoin="round" stroke-linecap="round" opacity="0.8"/>
<path d="M1067.0,277.8 Q1071.8,281.8 1074.4,283.9 Q1076.9,286.1 1078.5,289.9 Q1080.0,293.7 1082.6,295.0 Q1085.1,296.4 1085.4,300.1 Q1085.7,303.8 1084.8,306.9 Q1083.9,310.0 1085.6,313.6 Q1087.3,317.2 1086.9,320.3 Q1086.5,323.3 1084.9,326.4 Q1083.2,329.6 1083.3,333.8 L1083.4,338.0" fill="none" stroke="#5a4a42" stroke-width="0.7" stroke-linejoin="round" stroke-linecap="round" opacity="0.8"/>
<path d="M1071.3,596.6 Q1071.8,589.0 1074.8,588.0 Q1077.8,586.9 1080.3,583.7 Q1082.8,580.4 1086.0,577.6 Q1089.1,574.7 1091.7,573.9 Q1094.2,573.1 1097.7,573.8 Q1101.2,574.5 1105.2,575.5 Q1109.3,576.5 1111.8,577.0 Q1114.2,577.5 1118.6,579.0 Q1122.9,580.5 1126.3,580.6 L1129.8,580.6" fill="none" stroke="#5a4a42" stroke-width="0.7" stroke-linejoin="round" stroke-linecap="round" opacity="0.8"/>
<path d="M1061.7,522.5 Q1057.9,527.7 1058.5,531.6 Q1059.0,535.4 1058.1,539.2 Q1057.1,543.0 1057.8,546.5 Q1058.5,550.0 1056.0,552.6 Q1053.6,555.2 1049.6,556.2 Q1045.7,557.2 1043.4,558.3 Q1041.1,559.4 1037.4,561.8 L1033.6,564.2" fill="none" stroke="#5a4a42" stroke-width="0.7" stroke-linejoin="round" stroke-linecap="round" opacity="0.8"/>
<path d="M1180.1,589.5 Q1174.6,593.7 1172.2,596.0 Q1169.8,598.2 1170.4,601.4 Q1171.0,604.6 1169.6,607.9 Q1168.2,611.2 1170.2,614.6 Q1172.2,617.9 1173.4,621.8 Q1174.6,625.6 1173.3,628.7 Q1172.0,631.8 1169.2,633.8 Q1166.3,635.9 1162.7,636.2 Q1159.0,636.5 1155.2,636.1 L1151.5,635.6" fill="none" stroke="#5a4a42" stroke-width="0.7" stroke-linejoin="round" stroke-linecap="round" opacity="0.8"/>
<path d="M1153.3,560.2 Q1158.9,556.8 1162.5,555.0 Q1166.0,553.1 1166.7,548.9 Q1167.3,544.7 1168.0,542.2 Q1168.6,539.8 1169.0,536.1 Q1169.4,532.5 1172.8,529.9 Q1176.1,527.3 1177.2,524.5 Q1178.2,521.7 1177.7,518.5 Q1177.1,515.2 1175.5,511.6 Q1173.8,507.9 1175.1,504.3 L1176.4,500.7" fill="none" stroke="#5a4a42" stroke-width="0.7" stroke-linejoin="round" stroke-linecap="round" opacity="0.8"/>
<path d="M1284.0,386.6 Q1290.8,384.3 1293.7,381.2 Q1296.5,378.1 1296.0,375.4 L1295.4,372.7" fill="none" stroke="#5a4a42" stroke-width="0.7" stroke-linejoin="round" stroke-linecap="round" opacity="0.8"/>
<path d="M1202.9,443.1 Q1202.8,450.0 1204.5,452.5 Q1206.1,455.0 1208.1,458.2 Q1210.2,461.4 1212.3,463.8 Q1214.4,466.3 1216.8,469.2 Q1219.2,472.2 1220.4,476.0 Q1221.6,479.9 1221.8,482.8 Q1221.9,485.7 1220.3,488.4 Q1218.7,491.1 1214.7,491.9 Q1210.6,492.6 1209.1,496.2 L1207.6,499.8" fill="none" stroke="#5a4a42" stroke-width="0.7" stroke-linejoin="round" stroke-linecap="round" opacity="0.8"/>
<path d="M1052.9,398.2 Q1057.8,403.0 1060.8,403.5 Q1063.7,404.1 1067.1,403.5 Q1070.6,403.0 1073.0,400.2 Q1075.4,397.4 1078.9,397.9 Q1082.5,398.5 1085.6,397.8 Q1088.7,397.1 1091.3,394.1 Q1093.9,391.2 1098.2,390.4 Q1102.4,389.5 1104.6,387.5 Q1106.8,385.4 1110.1,384.2 L1113.5,383.0" fill="none" stroke="#5a4a42" stroke-width="0.7" stroke-linejoin="round" stroke-linecap="round" opacity="0.8"/>
<path d="M1256.0,514.1 Q1255.7,506.9 1254.7,503.9 Q1253.6,500.9 1254.3,496.8 Q1255.0,492.7 1254.3,490.0 Q1253.5,487.4 1253.3,483.3 Q1253.0,479.3 1255.3,476.9 Q1257.6,474.5 1257.8,471.6 Q1258.0,468.8 1260.3,465.6 Q1262.6,462.3 1265.5,459.7 Q1268.3,457.1 1271.6,456.8 L1274.9,456.5" fill="none" stroke="#5a4a42" stroke-width="0.7" stroke-linejoin="round" stroke-linecap="round" opacity="0.8"/>
<path d="M1150.3,497.8 Q1144.9,500.7 1141.8,503.2 Q1138.8,505.7 1135.5,505.6 Q1132.2,505.5 1129.2,506.4 Q1126.2,507.3 1121.7,507.2 Q1117.2,507.1 1115.6,509.4 Q1114.0,511.8 1112.0,515.2 Q1110.0,518.7 1108.4,522.0 Q1106.8,525.4 1103.1,525.5 Q1099.4,525.6 1097.3,527.4 L1095.2,529.2" fill="none" stroke="#5a4a42" stroke-width="0.7" stroke-linejoin="round" stroke-linecap="round" opacity="0.8"/>
<path d="M1031.0,807.3 Q1033.3,802.0 1036.7,800.0 Q1040.1,798.1 1039.8,793.5 Q1039.5,789.0 1037.9,787.1 Q1036.3,785.2 1032.1,784.2 Q1028.0,783.3 1025.3,783.2 Q1022.6,783.1 1019.4,782.2 L1016.3,781.4" fill="none" stroke="#5a4a42" stroke-width="0.7" stroke-linejoin="round" stroke-linecap="round" opacity="0.8"/>
<path d="M1056.4,423.3 Q1062.1,427.2 1064.9,428.0 Q1067.7,428.7 1070.5,430.9 Q1073.3,433.0 1075.4,435.6 Q1077.6,438.3 1078.7,441.8 Q1079.8,445.3 1078.0,448.1 Q1076.3,451.0 1075.4,454.9 Q1074.6,458.8 1071.0,459.5 Q1067.4,460.2 1065.5,463.9 Q1063.5,467.6 1065.3,470.9 L1067.1,474.3" fill="none" stroke="#5a4a42" stroke-width="0.7" stroke-linejoin="round" stroke-linecap="round" opacity="0.8"/>
<path d="M1082.9,530.6 Q1078.3,535.9 1075.1,536.3 Q1071.9,536.7 1068.5,537.8 Q1065.1,538.9 1061.0,540.5 Q1056.9,542.2 1053.7,543.3 Q1050.5,544.4 1049.5,547.2 Q1048.6,550.0 1048.7,553.3 Q1048.9,556.5 1046.6,559.2 Q1044.4,561.9 1040.3,562.9 Q1036.3,563.8 1034.3,565.7 L1032.2,567.6" fill="none" stroke="#5a4a42" stroke-width="0.7" stroke-linejoin="round" stroke-linecap="round" opacity="0.8"/>
<path d="M1255.1,441.2 Q1255.1,434.2 1257.1,431.4 Q1259.0,428.6 1259.7,425.5 Q1260.4,422.3 1264.0,419.7 Q1267.6,417.0 1270.4,415.7 Q1273.2,414.5 1276.2,412.1 Q1279.2,409.8 1282.2,410.2 Q1285.1,410.7 1287.4,413.6 Q1289.8,416.4 1294.3,415.8 Q1298.7,415.2 1301.0,416.4 L1303.4,417.6" fill="none" stroke="#5a4a42" stroke-width="0.7" stroke-linejoin="round" stroke-linecap="round" opacity="0.8"/>
<path d="M1108.1,435.6 Q1105.2,428.2 1106.3,424.7 Q1107.5,421.2 1107.5,418.6 Q1107.5,416.0 1109.2,413.2 Q1110.8,410.5 1110.5,406.9 Q1110.2,403.2 1108.0,400.2 Q1105.8,397.1 1102.8,395.7 Q1099.9,394.3 1097.6,391.8 Q1095.3,389.2 1093.6,386.6 Q1091.9,384.1 1092.5,380.4 L1093.0,376.8" fill="none" stroke="#5a4a42" stroke-width="0.7" stroke-linejoin="round" stroke-linecap="round" opacity="0.8"/>
<path d="M1047.5,595.2 Q1055.2,592.4 1058.2,592.9 Q1061.3,593.4 1063.8,591.6 Q1066.3,589.9 1069.4,587.9 Q1072.5,585.9 1076.2,584.6 Q1080.0,583.3 1081.8,580.0 Q1083.6,576.6 1087.1,575.5 Q1090.6,574.4 1094.1,574.4 Q1097.6,574.3 1100.3,573.8 Q1103.0,573.4 1105.8,571.9 L1108.5,570.4" fill="none" stroke="#5a4a42" stroke-width="0.7" stroke-linejoin="round" stroke-linecap="round" opacity="0.8"/>
<path d="M1035.1,383.5 Q1034.8,376.1 1035.9,373.1 Q1037.1,370.1 1040.3,369.7 Q1043.6,369.2 1045.9,366.6 Q1048.2,363.9 1047.6,359.6 Q1046.9,355.3 1044.0,353.3 Q1041.1,351.3 1041.9,348.2 Q1042.8,345.1 1043.2,340.7 Q1043.7,336.3 1045.7,333.8 Q1047.7,331.3 1050.8,330.3 L1053.8,329.4" fill="none" stroke="#5a4a42" stroke-width="0.7" stroke-linejoin="round" stroke-linecap="round" opacity="0.8"/>
<path d="M1016.4,361.3 Q1012.4,355.1 1011.7,351.6 Q1011.1,348.2 1009.5,344.4 Q1007.9,340.6 1006.9,338.2 Q1005.8,335.8 1003.8,333.0 Q1001.8,330.1 997.9,330.3 Q994.0,330.6 991.0,331.5 Q988.1,332.4 984.6,332.8 Q981.2,333.1 977.8,333.3 Q974.4,333.5 970.5,334.9 L966.6,336.2" fill="none" stroke="#5a4a42" stroke-width="0.7" stroke-linejoin="round" stroke-linecap="round" opacity="0.8"/>
<path d="M1089.3,316.2 Q1083.9,311.2 1083.9,307.3 Q1083.9,303.4 1082.8,301.0 Q1081.7,298.6 1082.0,294.2 Q1082.2,289.8 1079.4,288.1 Q1076.5,286.5 1074.9,283.2 Q1073.2,279.8 1070.2,278.6 Q1067.2,277.4 1064.4,279.4 Q1061.5,281.4 1057.7,282.8 Q1053.8,284.2 1051.4,285.4 L1049.1,286.6" fill="none" stroke="#5a4a42" stroke-width="0.7" stroke-linejoin="round" stroke-linecap="round" opacity="0.8"/>
<path d="M1043.5,546.8 Q1050.1,551.4 1053.0,551.7 Q1056.0,552.0 1059.5,551.0 Q1063.0,550.1 1065.9,547.9 Q1068.8,545.7 1073.1,545.6 Q1077.4,545.4 1078.5,541.9 Q1079.7,538.3 1079.7,534.8 Q1079.8,531.3 1081.1,528.8 Q1082.3,526.3 1085.6,523.7 Q1089.0,521.1 1091.6,520.0 L1094.2,519.0" fill="none" stroke="#5a4a42" stroke-width="0.7" stroke-linejoin="round" stroke-linecap="round" opacity="0.8"/>
<path d="M1253.7,509.2 Q1250.3,502.9 1251.0,499.2 Q1251.6,495.5 1250.4,493.4 Q1249.2,491.3 1247.8,487.8 Q1246.4,484.4 1246.9,480.4 Q1247.5,476.4 1249.0,472.9 Q1250.5,469.4 1252.3,467.1 Q1254.2,464.8 1253.8,461.1 Q1253.5,457.4 1255.0,454.6 Q1256.4,451.9 1259.4,449.0 L1262.4,446.1" fill="none" stroke="#5a4a42" stroke-width="0.7" stroke-linejoin="round" stroke-linecap="round" opacity="0.8"/>
<path d="M1152.8,501.4 Q1148.1,505.6 1146.6,509.2 Q1145.2,512.7 1144.5,515.7 Q1143.8,518.7 1142.3,522.8 Q1140.8,526.8 1139.2,529.2 Q1137.6,531.7 1137.0,535.1 Q1136.4,538.5 1135.7,541.9 Q1134.9,545.2 1134.3,548.6 Q1133.6,551.9 1130.4,554.4 Q1127.2,556.8 1125.6,559.7 L1123.9,562.6" fill="none" stroke="#5a4a42" stroke-width="0.7" stroke-linejoin="round" stroke-linecap="round" opacity="0.8"/>
<path d="M1037.1,424.2 Q1040.8,418.3 1043.0,415.3 Q1045.1,412.3 1046.8,410.5 Q1048.4,408.7 1051.3,405.9 Q1054.1,403.0 1056.8,401.0 Q1059.5,398.9 1061.8,396.3 Q1064.1,393.6 1065.2,389.9 Q1066.2,386.2 1068.1,383.8 Q1070.0,381.4 1073.2,379.1 Q1076.5,376.9 1078.6,375.4 L1080.7,373.9" fill="none" stroke="#5a4a42" stroke-width="0.7" stroke-linejoin="round" stroke-linecap="round" opacity="0.8"/>
<path d="M1027.0,367.6 Q1022.2,371.2 1018.7,371.3 Q1015.2,371.3 1012.1,373.0 Q1008.9,374.8 1007.9,378.1 Q1006.9,381.5 1005.9,384.7 Q1005.0,388.0 1007.0,390.8 Q1009.0,393.6 1012.5,394.1 Q1016.0,394.5 1019.7,393.2 Q1023.4,392.0 1024.8,389.4 Q1026.3,386.8 1029.4,384.0 L1032.4,381.3" fill="none" stroke="#5a4a42" stroke-width="0.7" stroke-linejoin="round" stroke-linecap="round" opacity="0.8"/>
<path d="M1191.4,489.9 Q1198.7,489.5 1201.5,488.8 Q1204.4,488.1 1208.0,486.9 Q1211.5,485.7 1214.5,487.6 Q1217.5,489.4 1221.8,488.0 Q1226.2,486.6 1229.1,486.3 Q1232.0,486.1 1235.5,488.2 Q1239.1,490.3 1240.4,494.1 Q1241.8,498.0 1245.1,497.9 Q1248.4,497.8 1252.0,500.1 L1255.6,502.4" fill="none" stroke="#5a4a42" stroke-width="0.7" stroke-linejoin="round" stroke-linecap="round" opacity="0.8"/>
<path d="M1180.3,538.5 Q1177.0,532.6 1176.2,528.8 Q1175.4,524.9 1172.5,521.9 Q1169.7,518.9 1166.2,518.4 Q1162.6,517.9 1159.7,517.3 Q1156.7,516.7 1153.7,515.9 Q1150.6,515.0 1147.1,514.7 Q1143.6,514.5 1140.7,515.2 Q1137.8,516.0 1133.9,514.9 Q1130.1,513.8 1127.3,511.9 L1124.6,509.9" fill="none" stroke="#5a4a42" stroke-width="0.7" stroke-linejoin="round" stroke-linecap="round" opacity="0.8"/>
<path d="M1105.1,335.2 Q1101.2,328.8 1101.5,325.4 Q1101.9,322.0 1104.7,319.9 Q1107.4,317.7 1108.9,314.7 Q1110.3,311.7 1110.7,307.7 Q1111.1,303.8 1113.5,301.9 Q1115.9,300.0 1117.9,296.0 L1120.0,291.9" fill="none" stroke="#5a4a42" stroke-width="0.7" stroke-linejoin="round" stroke-linecap="round" opacity="0.8"/>
<path d="M1148.4,397.2 Q1150.4,403.4 1149.6,407.3 Q1148.8,411.3 1151.1,413.9 Q1153.4,416.5 1154.5,419.8 Q1155.6,423.2 1156.5,426.3 Q1157.3,429.5 1157.6,433.4 Q1157.8,437.2 1156.0,439.7 Q1154.1,442.2 1152.8,445.7 Q1151.6,449.2 1148.2,451.2 Q1144.8,453.2 1142.0,452.7 L1139.1,452.3" fill="none" stroke="#5a4a42" stroke-width="0.7" stroke-linejoin="round" stroke-linecap="round" opacity="0.8"/>
<path d="M1062.4,880.1 Q1061.5,885.9 1058.8,889.2 Q1056.1,892.6 1053.0,893.9 Q1049.9,895.3 1048.2,897.5 Q1046.6,899.7 1046.6,902.8 Q1046.7,905.9 1050.0,907.9 Q1053.2,909.9 1056.3,910.0 Q1059.4,910.1 1062.8,913.1 Q1066.1,916.2 1065.4,919.6 Q1064.7,923.0 1066.5,926.3 L1068.3,929.6" fill="none" stroke="#5a4a42" stroke-width="0.7" stroke-linejoin="round" stroke-linecap="round" opacity="0.8"/>
<path d="M1257.5,419.6 Q1259.2,426.7 1257.3,430.0 Q1255.4,433.3 1254.9,436.3 Q1254.5,439.3 1255.4,442.5 Q1256.2,445.7 1255.2,449.1 Q1254.2,452.4 1251.7,455.3 Q1249.2,458.1 1249.5,461.8 Q1249.9,465.5 1248.9,468.5 Q1248.0,471.6 1246.4,475.6 Q1244.8,479.5 1243.1,482.2 L1241.4,484.9" fill="none" stroke="#5a4a42" stroke-width="0.7" stroke-linejoin="round" stroke-linecap="round" opacity="0.8"/>
<path d="M1148.2,627.6 Q1146.6,620.6 1146.7,617.1 Q1146.8,613.6 1148.9,610.6 Q1151.0,607.7 1152.8,604.9 Q1154.6,602.2 1154.4,598.6 Q1154.2,595.0 1155.0,592.1 Q1155.9,589.2 1157.2,586.5 Q1158.6,583.7 1160.1,580.3 Q1161.7,576.9 1163.3,573.4 Q1165.0,569.9 1167.7,567.2 L1170.4,564.5" fill="none" stroke="#5a4a42" stroke-width="0.7" stroke-linejoin="round" stroke-linecap="round" opacity="0.8"/>
<path d="M1042.9,895.6 Q1040.5,902.6 1042.0,905.9 L1043.4,909.1" fill="none" stroke="#5a4a42" stroke-width="0.7" stroke-linejoin="round" stroke-linecap="round" opacity="0.8"/>
<path d="M1175.9,412.1 Q1175.4,404.6 1175.2,401.2 Q1175.1,397.9 1174.1,394.7 Q1173.2,391.6 1174.3,388.1 Q1175.4,384.6 1177.6,382.3 Q1179.8,380.0 1183.2,378.6 Q1186.6,377.2 1188.9,374.2 L1191.2,371.1" fill="none" stroke="#5a4a42" stroke-width="0.7" stroke-linejoin="round" stroke-linecap="round" opacity="0.8"/>
<path d="M1055.2,473.6 Q1049.6,477.3 1047.6,479.7 Q1045.5,482.0 1045.0,486.4 Q1044.6,490.7 1043.7,493.0 Q1042.7,495.3 1043.3,498.9 Q1043.8,502.6 1041.5,505.4 Q1039.3,508.3 1040.8,512.0 Q1042.2,515.6 1042.7,519.2 Q1043.3,522.8 1042.4,525.5 Q1041.6,528.2 1041.7,532.0 L1041.9,535.7" fill="none" stroke="#5a4a42" stroke-width="0.7" stroke-linejoin="round" stroke-linecap="round" opacity="0.8"/>
<path d="M1091.4,345.5 Q1086.7,340.6 1084.2,337.9 Q1081.7,335.3 1079.5,333.0 Q1077.3,330.7 1074.8,328.9 Q1072.3,327.1 1068.5,328.1 Q1064.7,329.1 1061.1,330.5 Q1057.6,331.9 1056.1,334.1 Q1054.5,336.4 1051.4,339.8 Q1048.3,343.2 1047.5,346.3 Q1046.7,349.3 1046.2,352.1 L1045.7,354.9" fill="none" stroke="#5a4a42" stroke-width="0.7" stroke-linejoin="round" stroke-linecap="round" opacity="0.8"/>
<path d="M1270.4,455.7 Q1274.0,462.7 1273.3,465.7 Q1272.6,468.7 1272.4,472.1 Q1272.2,475.4 1270.2,478.2 Q1268.2,480.9 1264.7,482.9 Q1261.3,484.8 1260.2,487.8 Q1259.1,490.8 1260.7,493.2 Q1262.3,495.6 1263.6,498.7 Q1264.8,501.8 1267.9,503.6 Q1270.9,505.5 1274.9,505.6 L1278.9,505.7" fill="none" stroke="#5a4a42" stroke-width="0.7" stroke-linejoin="round" stroke-linecap="round" opacity="0.8"/>
<path d="M1055.8,429.5 Q1054.6,421.8 1056.0,419.4 Q1057.5,417.0 1060.4,415.1 Q1063.3,413.2 1067.3,413.9 Q1071.4,414.6 1074.5,412.6 Q1077.6,410.5 1080.3,409.2 Q1083.1,407.9 1085.3,405.2 Q1087.5,402.6 1087.8,398.9 Q1088.2,395.2 1085.5,392.3 Q1082.9,389.3 1081.8,386.2 L1080.6,383.0" fill="none" stroke="#5a4a42" stroke-width="0.7" stroke-linejoin="round" stroke-linecap="round" opacity="0.8"/>
<path d="M1114.2,566.5 Q1108.5,569.8 1105.4,571.7 Q1102.3,573.5 1101.4,577.3 Q1100.5,581.0 1097.8,582.6 Q1095.1,584.2 1090.7,584.7 Q1086.4,585.3 1083.9,584.3 Q1081.4,583.3 1078.7,580.3 Q1076.0,577.3 1074.1,573.9 Q1072.2,570.5 1072.5,567.6 Q1072.9,564.7 1072.9,560.4 L1072.9,556.2" fill="none" stroke="#5a4a42" stroke-width="0.7" stroke-linejoin="round" stroke-linecap="round" opacity="0.8"/>
<path d="M1188.6,408.0 Q1188.9,415.4 1191.9,417.7 Q1194.9,419.9 1194.4,423.4 Q1193.9,426.8 1194.4,430.4 Q1194.8,434.0 1196.3,437.7 Q1197.8,441.3 1200.0,444.2 Q1202.2,447.0 1205.7,447.3 Q1209.2,447.6 1213.1,447.2 Q1216.9,446.8 1219.7,445.4 Q1222.5,444.0 1225.7,446.7 L1228.8,449.3" fill="none" stroke="#5a4a42" stroke-width="0.7" stroke-linejoin="round" stroke-linecap="round" opacity="0.8"/>
<path d="M1176.7,448.1 Q1174.6,454.7 1171.8,457.0 Q1169.0,459.2 1165.7,458.9 Q1162.5,458.6 1159.2,459.2 Q1155.9,459.8 1153.2,463.1 Q1150.5,466.4 1147.4,466.9 Q1144.3,467.5 1141.6,465.3 Q1138.9,463.0 1135.9,461.0 Q1132.9,459.1 1129.2,460.3 Q1125.6,461.4 1122.8,463.5 L1120.1,465.7" fill="none" stroke="#5a4a42" stroke-width="0.7" stroke-linejoin="round" stroke-linecap="round" opacity="0.8"/>
<path d="M1003.6,351.1 Q998.1,354.7 994.7,355.7 Q991.4,356.8 989.8,359.2 Q988.2,361.7 988.3,364.9 Q988.5,368.1 989.3,372.6 Q990.2,377.1 992.1,380.1 Q994.0,383.1 994.1,386.0 Q994.3,388.8 995.4,392.6 Q996.5,396.3 997.4,399.7 L998.2,403.0" fill="none" stroke="#5a4a42" stroke-width="0.7" stroke-linejoin="round" stroke-linecap="round" opacity="0.8"/>
<path d="M1035.1,500.1 Q1039.6,495.6 1043.8,496.1 Q1048.1,496.6 1050.9,498.0 Q1053.8,499.3 1056.8,497.9 Q1059.9,496.4 1063.0,496.3 Q1066.1,496.3 1070.0,495.0 Q1073.8,493.7 1075.8,491.2 Q1077.9,488.6 1079.4,485.7 Q1080.9,482.8 1085.4,482.3 Q1089.9,481.8 1091.6,478.7 L1093.3,475.6" fill="none" stroke="#5a4a42" stroke-width="0.7" stroke-linejoin="round" stroke-linecap="round" opacity="0.8"/>
<path d="M1109.1,470.5 Q1110.7,463.9 1114.0,462.6 Q1117.3,461.3 1121.0,458.9 Q1124.8,456.4 1127.4,455.7 Q1130.0,454.9 1133.3,455.9 Q1136.6,456.9 1139.4,459.2 Q1142.2,461.4 1142.1,464.4 Q1142.0,467.4 1140.3,471.0 Q1138.6,474.6 1140.4,478.0 Q1142.2,481.3 1144.4,483.1 L1146.5,484.8" fill="none" stroke="#5a4a42" stroke-width="0.7" stroke-linejoin="round" stroke-linecap="round" opacity="0.8"/>
<path d="M1204.4,492.5 Q1203.6,486.7 1201.1,483.3 Q1198.6,479.9 1196.2,477.5 Q1193.7,475.2 1191.0,473.8 Q1188.4,472.3 1184.3,472.3 Q1180.3,472.2 1177.4,470.5 Q1174.5,468.8 1171.8,467.3 Q1169.1,465.8 1165.6,466.0 Q1162.0,466.1 1160.0,469.7 Q1158.0,473.2 1155.4,475.9 L1152.8,478.6" fill="none" stroke="#5a4a42" stroke-width="0.7" stroke-linejoin="round" stroke-linecap="round" opacity="0.8"/>
<path d="M1290.4,420.7 Q1296.6,424.1 1298.0,427.9 Q1299.4,431.7 1299.0,434.8 Q1298.7,437.9 1296.1,440.4 Q1293.6,442.8 1290.2,445.1 Q1286.8,447.3 1283.0,447.7 Q1279.2,448.2 1275.7,449.9 Q1272.1,451.5 1269.1,449.8 Q1266.0,448.2 1263.3,445.9 Q1260.6,443.6 1259.6,439.5 L1258.7,435.4" fill="none" stroke="#5a4a42" stroke-width="0.7" stroke-linejoin="round" stroke-linecap="round" opacity="0.8"/>
<path d="M1068.4,824.9 Q1061.0,821.5 1058.4,821.2 Q1055.8,821.0 1052.9,823.1 Q1050.0,825.2 1046.0,826.7 Q1041.9,828.2 1039.4,828.7 Q1036.8,829.2 1032.4,829.7 Q1027.9,830.2 1026.0,832.8 Q1024.1,835.3 1020.3,835.7 Q1016.5,836.2 1013.9,838.2 Q1011.3,840.2 1010.4,843.4 L1009.6,846.5" fill="none" stroke="#5a4a42" stroke-width="0.7" stroke-linejoin="round" stroke-linecap="round" opacity="0.8"/>
<path d="M1086.6,460.4 Q1092.4,456.1 1096.4,456.7 Q1100.4,457.4 1103.7,458.1 Q1106.9,458.8 1109.5,458.5 Q1112.0,458.3 1115.4,459.3 Q1118.8,460.3 1120.4,463.5 Q1122.1,466.7 1121.7,470.1 Q1121.3,473.5 1122.5,477.1 Q1123.7,480.7 1122.5,483.5 Q1121.4,486.3 1119.8,489.8 L1118.1,493.2" fill="none" stroke="#5a4a42" stroke-width="0.7" stroke-linejoin="round" stroke-linecap="round" opacity="0.8"/>
<path d="M1294.2,528.8 Q1294.6,521.7 1293.3,518.7 Q1292.0,515.6 1292.7,512.4 Q1293.4,509.2 1292.8,505.2 Q1292.3,501.1 1292.4,498.3 Q1292.6,495.5 1292.3,491.0 Q1292.1,486.5 1290.1,484.3 Q1288.1,482.1 1286.3,479.4 Q1284.4,476.7 1280.8,474.6 Q1277.1,472.5 1276.5,469.5 L1275.8,466.6" fill="none" stroke="#5a4a42" stroke-width="0.7" stroke-linejoin="round" stroke-linecap="round" opacity="0.8"/>
<path d="M1128.8,436.3 Q1126.0,443.9 1124.0,445.8 Q1122.0,447.8 1122.5,452.1 Q1123.0,456.5 1120.9,459.4 Q1118.8,462.2 1117.5,465.0 Q1116.2,467.8 1116.8,471.3 Q1117.3,474.8 1117.7,478.6 Q1118.0,482.4 1116.0,484.2 Q1113.9,486.1 1112.1,489.0 Q1110.4,491.9 1110.6,495.2 L1110.9,498.4" fill="none" stroke="#5a4a42" stroke-width="0.7" stroke-linejoin="round" stroke-linecap="round" opacity="0.8"/>
<path d="M1067.3,582.0 Q1070.9,588.3 1073.9,590.3 Q1076.9,592.2 1077.5,596.0 Q1078.1,599.8 1079.4,602.5 Q1080.7,605.2 1079.3,608.7 Q1077.9,612.3 1074.9,614.7 Q1072.0,617.1 1072.1,620.2 Q1072.2,623.2 1071.8,627.6 Q1071.4,632.0 1069.0,634.4 Q1066.6,636.8 1063.9,639.6 L1061.2,642.4" fill="none" stroke="#5a4a42" stroke-width="0.7" stroke-linejoin="round" stroke-linecap="round" opacity="0.8"/>
<path d="M1179.0,539.3 Q1176.9,533.1 1177.1,529.3 Q1177.4,525.4 1174.5,523.1 Q1171.7,520.7 1167.8,518.9 Q1163.9,517.1 1162.6,514.8 Q1161.2,512.6 1158.7,510.2 Q1156.1,507.9 1152.5,507.0 Q1148.8,506.1 1145.6,503.6 Q1142.4,501.1 1139.1,499.9 Q1135.7,498.7 1133.7,496.1 L1131.8,493.4" fill="none" stroke="#5a4a42" stroke-width="0.7" stroke-linejoin="round" stroke-linecap="round" opacity="0.8"/>
<path d="M1265.5,360.1 Q1272.5,360.6 1275.3,363.3 Q1278.1,365.9 1278.7,369.6 Q1279.4,373.3 1282.0,376.4 Q1284.6,379.6 1287.3,378.7 Q1290.1,377.9 1293.2,376.7 L1296.2,375.6" fill="none" stroke="#5a4a42" stroke-width="0.7" stroke-linejoin="round" stroke-linecap="round" opacity="0.8"/>
<path d="M1301.0,480.2 Q1305.3,484.5 1308.9,484.8 Q1312.5,485.1 1315.5,484.1 Q1318.5,483.1 1321.5,481.2 Q1324.6,479.3 1328.6,478.8 Q1332.6,478.4 1335.3,480.8 Q1338.1,483.3 1340.4,484.9 Q1342.6,486.5 1343.8,489.9 Q1344.9,493.2 1343.5,496.2 Q1342.0,499.1 1338.5,501.9 L1335.0,504.7" fill="none" stroke="#5a4a42" stroke-width="0.7" stroke-linejoin="round" stroke-linecap="round" opacity="0.8"/>
<path d="M1300.4,511.2 Q1292.9,509.5 1290.4,508.4 Q1287.9,507.4 1283.7,505.7 Q1279.6,504.0 1276.3,504.9 Q1272.9,505.7 1271.1,507.6 Q1269.3,509.4 1266.4,511.2 Q1263.4,513.0 1261.5,516.4 Q1259.6,519.8 1255.7,520.6 Q1251.8,521.3 1248.8,520.1 Q1245.9,518.9 1244.7,515.1 L1243.5,511.2" fill="none" stroke="#5a4a42" stroke-width="0.7" stroke-linejoin="round" stroke-linecap="round" opacity="0.8"/>
<path d="M1253.8,486.5 Q1250.6,479.5 1250.9,477.0 Q1251.1,474.5 1252.2,470.4 Q1253.3,466.3 1253.2,463.2 Q1253.0,460.0 1252.3,457.2 Q1251.6,454.4 1249.6,451.9 Q1247.6,449.4 1247.1,445.7 Q1246.6,442.0 1249.2,438.2 Q1251.7,434.4 1254.9,434.3 Q1258.1,434.2 1261.2,434.7 L1264.3,435.2" fill="none" stroke="#5a4a42" stroke-width="0.7" stroke-linejoin="round" stroke-linecap="round" opacity="0.8"/>
<path d="M967.3,351.8 Q973.0,353.7 975.1,357.4 Q977.2,361.0 980.0,363.0 Q982.9,365.0 986.1,362.4 Q989.2,359.8 992.0,362.4 Q994.8,365.0 997.2,367.0 Q999.7,369.0 999.9,373.0 Q1000.1,377.0 1002.7,379.8 Q1005.2,382.6 1009.1,382.6 Q1013.0,382.5 1015.6,381.5 L1018.1,380.5" fill="none" stroke="#5a4a42" stroke-width="0.7" stroke-linejoin="round" stroke-linecap="round" opacity="0.8"/>
<path d="M1088.0,483.3 Q1092.5,488.5 1096.4,490.2 Q1100.3,491.9 1102.0,494.4 Q1103.7,496.9 1103.5,500.7 Q1103.3,504.4 1103.9,507.5 Q1104.5,510.5 1105.4,514.7 Q1106.3,518.8 1103.5,521.0 Q1100.6,523.1 1101.7,527.3 Q1102.8,531.4 1102.3,534.6 Q1101.7,537.7 1100.9,541.2 L1100.1,544.8" fill="none" stroke="#5a4a42" stroke-width="0.7" stroke-linejoin="round" stroke-linecap="round" opacity="0.8"/>
<path d="M1128.9,563.9 Q1121.9,565.8 1118.7,568.0 Q1115.6,570.2 1113.8,573.2 Q1112.1,576.1 1111.9,579.4 Q1111.8,582.7 1111.7,585.5 Q1111.6,588.3 1110.3,591.4 L1109.1,594.6" fill="none" stroke="#5a4a42" stroke-width="0.7" stroke-linejoin="round" stroke-linecap="round" opacity="0.8"/>
<path d="M1086.0,293.5 Q1092.4,292.4 1096.4,293.7 Q1100.4,294.9 1103.2,295.6 Q1106.0,296.3 1109.4,297.8 Q1112.7,299.4 1115.0,302.8 Q1117.3,306.3 1118.7,308.1 Q1120.0,309.9 1121.0,314.2 Q1122.0,318.4 1122.6,322.0 Q1123.1,325.6 1120.9,327.2 Q1118.7,328.8 1115.6,331.1 L1112.6,333.4" fill="none" stroke="#5a4a42" stroke-width="0.7" stroke-linejoin="round" stroke-linecap="round" opacity="0.8"/>
<path d="M1086.4,577.5 Q1085.7,570.2 1088.0,567.4 Q1090.4,564.5 1091.9,562.2 Q1093.4,559.9 1097.1,558.1 Q1100.7,556.2 1100.8,553.0 Q1100.9,549.9 1099.8,546.7 Q1098.7,543.5 1100.0,539.8 Q1101.4,536.0 1102.8,533.6 Q1104.1,531.1 1103.6,527.2 Q1103.1,523.4 1105.0,520.2 L1106.8,517.0" fill="none" stroke="#5a4a42" stroke-width="0.7" stroke-linejoin="round" stroke-linecap="round" opacity="0.8"/>
<path d="M1110.2,452.3 Q1110.0,459.8 1110.6,462.7 Q1111.1,465.6 1113.1,468.9 Q1115.1,472.1 1116.6,475.1 Q1118.2,478.0 1120.6,480.1 Q1123.0,482.2 1127.2,483.6 Q1131.4,485.1 1134.2,484.9 Q1137.1,484.6 1140.4,483.9 Q1143.8,483.2 1147.7,483.8 Q1151.6,484.4 1154.1,484.9 L1156.6,485.3" fill="none" stroke="#5a4a42" stroke-width="0.7" stroke-linejoin="round" stroke-linecap="round" opacity="0.8"/>
<path d="M1093.3,284.3 Q1100.1,279.7 1102.9,279.6 Q1105.7,279.6 1108.2,276.7 L1110.7,273.7" fill="none" stroke="#5a4a42" stroke-width="0.7" stroke-linejoin="round" stroke-linecap="round" opacity="0.8"/>
<path d="M1236.4,460.2 Q1241.5,464.8 1242.1,468.2 Q1242.7,471.6 1245.1,474.7 Q1247.5,477.9 1250.3,479.9 Q1253.1,481.9 1255.7,483.7 Q1258.3,485.6 1261.7,484.0 Q1265.1,482.5 1268.9,482.1 Q1272.6,481.8 1276.6,482.4 Q1280.5,483.0 1283.3,480.4 Q1286.0,477.9 1287.3,475.7 L1288.5,473.6" fill="none" stroke="#5a4a42" stroke-width="0.7" stroke-linejoin="round" stroke-linecap="round" opacity="0.8"/>
<path d="M1073.6,884.1 Q1067.9,881.5 1063.9,880.3 Q1060.0,879.0 1056.4,878.4 Q1052.9,877.9 1049.5,878.8 Q1046.0,879.6 1043.0,880.0 Q1040.1,880.3 1036.3,878.7 Q1032.6,877.1 1032.4,874.5 Q1032.2,871.9 1032.3,868.3 Q1032.3,864.7 1032.8,860.6 Q1033.2,856.6 1032.6,853.6 L1031.9,850.5" fill="none" stroke="#5a4a42" stroke-width="0.7" stroke-linejoin="round" stroke-linecap="round" opacity="0.8"/>
<path d="M1320.0,486.4 Q1321.8,493.0 1322.7,496.6 Q1323.7,500.3 1326.2,502.7 Q1328.8,505.2 1331.1,507.9 Q1333.4,510.7 1333.8,514.1 Q1334.2,517.5 1336.0,520.8 Q1337.8,524.2 1338.1,527.0 Q1338.3,529.8 1337.3,533.0 Q1336.4,536.2 1336.7,540.3 Q1337.0,544.5 1340.9,545.5 L1344.8,546.4" fill="none" stroke="#5a4a42" stroke-width="0.7" stroke-linejoin="round" stroke-linecap="round" opacity="0.8"/>
<path d="M993.2,353.4 Q992.3,347.0 993.2,343.2 Q994.1,339.4 995.2,336.1 Q996.4,332.8 996.8,329.3 Q997.2,325.8 998.0,323.1 Q998.7,320.3 998.2,316.3 Q997.7,312.2 1000.6,310.3 Q1003.5,308.4 1005.0,305.0 Q1006.5,301.7 1009.0,300.3 Q1011.5,298.9 1015.1,297.7 L1018.6,296.5" fill="none" stroke="#5a4a42" stroke-width="0.7" stroke-linejoin="round" stroke-linecap="round" opacity="0.8"/>
<path d="M1001.7,306.9 Q994.2,305.9 992.2,308.5 Q990.1,311.0 986.6,312.2 Q983.0,313.3 979.6,315.3 L976.2,317.3" fill="none" stroke="#5a4a42" stroke-width="0.7" stroke-linejoin="round" stroke-linecap="round" opacity="0.8"/>
<path d="M981.6,342.1 Q981.9,350.3 980.8,352.4 Q979.7,354.5 978.5,358.1 Q977.2,361.6 980.3,364.2 Q983.3,366.7 984.9,370.2 Q986.5,373.7 989.2,376.2 Q992.0,378.7 993.2,381.6 Q994.3,384.5 996.3,386.9 Q998.4,389.3 1000.5,392.7 Q1002.7,396.0 1003.2,399.5 L1003.8,402.9" fill="none" stroke="#5a4a42" stroke-width="0.7" stroke-linejoin="round" stroke-linecap="round" opacity="0.8"/>
<path d="M1092.0,926.9 Q1090.2,934.9 1089.9,937.2 Q1089.6,939.4 1088.2,943.8 L1086.8,948.1" fill="none" stroke="#5a4a42" stroke-width="0.7" stroke-linejoin="round" stroke-linecap="round" opacity="0.8"/>
<path d="M1318.4,441.3 Q1315.3,435.9 1312.6,433.2 Q1309.9,430.5 1306.9,429.8 Q1303.9,429.1 1301.0,430.0 Q1298.2,431.0 1294.1,431.6 Q1289.9,432.2 1288.5,435.7 Q1287.1,439.2 1284.9,442.3 Q1282.7,445.4 1279.0,445.3 Q1275.2,445.2 1272.3,446.3 Q1269.4,447.5 1265.8,446.7 L1262.1,445.8" fill="none" stroke="#5a4a42" stroke-width="0.7" stroke-linejoin="round" stroke-linecap="round" opacity="0.8"/>
<path d="M1033.6,889.9 Q1040.6,890.6 1042.4,893.5 Q1044.2,896.5 1046.8,899.3 Q1049.3,902.2 1052.2,902.3 Q1055.1,902.4 1057.9,900.1 Q1060.7,897.9 1065.0,896.8 Q1069.2,895.8 1071.0,893.4 Q1072.8,891.0 1073.1,887.5 Q1073.5,884.0 1073.7,881.2 Q1074.0,878.4 1071.3,875.3 L1068.5,872.1" fill="none" stroke="#5a4a42" stroke-width="0.7" stroke-linejoin="round" stroke-linecap="round" opacity="0.8"/>
<path d="M1086.2,485.3 Q1080.9,490.6 1079.8,493.1 Q1078.6,495.6 1079.2,499.3 Q1079.7,503.0 1077.4,506.4 Q1075.0,509.8 1072.7,511.4 Q1070.4,513.0 1067.9,515.2 Q1065.4,517.4 1062.4,519.6 Q1059.4,521.7 1056.2,523.8 Q1052.9,526.0 1051.0,528.7 Q1049.0,531.4 1045.3,532.2 L1041.6,533.1" fill="none" stroke="#5a4a42" stroke-width="0.7" stroke-linejoin="round" stroke-linecap="round" opacity="0.8"/>
<path d="M1035.4,507.4 Q1039.4,502.0 1042.9,501.0 Q1046.5,500.0 1049.2,498.5 Q1051.9,497.0 1054.4,494.1 Q1056.9,491.2 1059.3,488.6 Q1061.6,486.0 1064.7,485.9 Q1067.8,485.9 1071.1,483.6 Q1074.3,481.3 1076.5,477.7 Q1078.7,474.2 1078.7,471.8 Q1078.7,469.4 1078.9,465.3 L1079.1,461.1" fill="none" stroke="#5a4a42" stroke-width="0.7" stroke-linejoin="round" stroke-linecap="round" opacity="0.8"/>
<path d="M1126.9,576.6 Q1133.3,581.7 1134.1,583.9 Q1134.8,586.1 1135.2,590.3 Q1135.6,594.5 1136.0,598.2 Q1136.4,601.9 1136.8,604.7 Q1137.2,607.4 1138.8,611.3 Q1140.5,615.2 1140.5,617.4 Q1140.5,619.6 1139.3,624.0 Q1138.1,628.3 1136.7,631.1 L1135.4,634.0" fill="none" stroke="#5a4a42" stroke-width="0.7" stroke-linejoin="round" stroke-linecap="round" opacity="0.8"/>
<path d="M1166.8,424.8 Q1166.3,416.6 1169.0,415.2 Q1171.8,413.9 1175.4,413.5 Q1179.1,413.2 1182.8,414.3 Q1186.6,415.4 1189.5,413.0 Q1192.5,410.7 1194.6,409.2 Q1196.7,407.8 1196.9,403.2 Q1197.1,398.7 1200.0,397.3 Q1202.9,395.9 1206.1,393.5 Q1209.3,391.1 1211.8,389.1 L1214.3,387.1" fill="none" stroke="#5a4a42" stroke-width="0.7" stroke-linejoin="round" stroke-linecap="round" opacity="0.8"/>
<path d="M1322.8,480.4 Q1329.1,476.7 1331.7,474.9 Q1334.3,473.2 1336.9,470.7 L1339.6,468.3" fill="none" stroke="#5a4a42" stroke-width="0.7" stroke-linejoin="round" stroke-linecap="round" opacity="0.8"/>
<path d="M1063.0,360.7 Q1069.7,355.9 1071.0,352.7 Q1072.3,349.6 1073.0,346.6 Q1073.6,343.7 1076.4,341.8 Q1079.3,339.8 1082.6,337.8 Q1085.9,335.8 1086.7,332.9 Q1087.6,329.9 1084.8,326.2 Q1082.1,322.4 1081.4,318.8 Q1080.7,315.1 1079.7,312.0 Q1078.8,308.9 1077.5,305.4 L1076.3,301.9" fill="none" stroke="#5a4a42" stroke-width="0.7" stroke-linejoin="round" stroke-linecap="round" opacity="0.8"/>
<path d="M1059.2,431.6 Q1056.7,437.8 1059.1,441.3 Q1061.5,444.8 1062.4,447.1 Q1063.3,449.5 1063.3,452.9 Q1063.3,456.3 1061.5,458.8 Q1059.7,461.3 1056.9,463.9 Q1054.2,466.5 1052.9,470.4 Q1051.5,474.3 1049.5,476.8 Q1047.4,479.2 1047.1,483.2 Q1046.9,487.2 1046.2,489.4 L1045.5,491.5" fill="none" stroke="#5a4a42" stroke-width="0.7" stroke-linejoin="round" stroke-linecap="round" opacity="0.8"/>
<path d="M1273.1,378.0 Q1273.5,385.8 1270.8,388.7 Q1268.1,391.6 1267.5,394.6 Q1266.9,397.7 1267.5,400.4 Q1268.2,403.1 1266.9,406.5 Q1265.7,409.9 1266.7,414.0 Q1267.6,418.1 1268.1,421.7 Q1268.6,425.4 1270.2,427.6 Q1271.7,429.8 1274.3,431.4 Q1276.9,433.0 1281.2,434.6 L1285.5,436.1" fill="none" stroke="#5a4a42" stroke-width="0.7" stroke-linejoin="round" stroke-linecap="round" opacity="0.8"/>
<path d="M1198.5,644.7 Q1204.5,641.2 1205.7,637.3 Q1206.8,633.5 1207.9,630.4 Q1209.0,627.3 1212.1,626.2 L1215.2,625.1" fill="none" stroke="#5a4a42" stroke-width="0.7" stroke-linejoin="round" stroke-linecap="round" opacity="0.8"/>
<path d="M1269.2,411.2 Q1261.9,409.7 1259.0,410.0 Q1256.2,410.3 1252.8,411.6 Q1249.5,413.0 1246.9,411.2 Q1244.3,409.4 1240.5,408.5 Q1236.6,407.6 1234.3,404.7 Q1231.9,401.7 1228.5,401.6 Q1225.0,401.5 1221.2,402.3 Q1217.4,403.2 1215.6,406.2 Q1213.9,409.1 1213.4,412.6 L1212.9,416.1" fill="none" stroke="#5a4a42" stroke-width="0.7" stroke-linejoin="round" stroke-linecap="round" opacity="0.8"/>
<path d="M1113.2,349.5 Q1121.1,350.5 1123.8,350.9 Q1126.6,351.3 1130.6,350.2 Q1134.7,349.1 1136.6,347.3 Q1138.5,345.4 1140.9,343.4 Q1143.3,341.4 1145.4,338.4 L1147.5,335.4" fill="none" stroke="#5a4a42" stroke-width="0.7" stroke-linejoin="round" stroke-linecap="round" opacity="0.8"/>
<path d="M1090.5,276.8 Q1097.5,274.3 1100.7,275.9 Q1103.8,277.4 1107.9,276.5 L1112.0,275.6" fill="none" stroke="#5a4a42" stroke-width="0.7" stroke-linejoin="round" stroke-linecap="round" opacity="0.8"/>
<path d="M1063.8,612.8 Q1067.9,608.4 1068.1,604.9 Q1068.4,601.4 1070.1,597.3 Q1071.8,593.3 1074.4,592.4 Q1077.0,591.6 1080.6,589.4 Q1084.2,587.2 1085.3,584.3 Q1086.4,581.4 1085.6,578.5 Q1084.9,575.5 1085.4,571.1 Q1085.9,566.8 1085.1,563.3 Q1084.2,559.7 1082.9,557.5 L1081.6,555.2" fill="none" stroke="#5a4a42" stroke-width="0.7" stroke-linejoin="round" stroke-linecap="round" opacity="0.8"/>
<path d="M1050.9,352.1 Q1043.9,350.4 1041.1,352.0 Q1038.2,353.5 1035.8,356.4 Q1033.4,359.3 1030.1,358.3 Q1026.8,357.2 1022.7,358.2 Q1018.6,359.1 1015.8,358.2 Q1012.9,357.2 1009.6,357.3 Q1006.3,357.3 1001.8,356.2 Q997.3,355.2 994.7,354.2 Q992.0,353.2 988.9,353.7 L985.7,354.3" fill="none" stroke="#5a4a42" stroke-width="0.7" stroke-linejoin="round" stroke-linecap="round" opacity="0.8"/>
<path d="M1193.5,582.3 Q1187.8,584.7 1185.8,588.1 Q1183.7,591.6 1182.8,595.3 Q1181.9,599.0 1177.5,599.8 Q1173.2,600.6 1170.1,600.2 Q1167.1,599.9 1163.4,597.7 Q1159.7,595.6 1156.9,597.1 Q1154.2,598.7 1150.2,596.8 Q1146.1,594.9 1145.1,592.0 Q1144.1,589.1 1144.9,586.3 L1145.6,583.6" fill="none" stroke="#5a4a42" stroke-width="0.7" stroke-linejoin="round" stroke-linecap="round" opacity="0.8"/>
<path d="M1194.0,427.8 Q1190.2,421.5 1189.7,418.5 Q1189.1,415.5 1185.8,413.1 Q1182.4,410.7 1179.6,408.5 Q1176.8,406.2 1173.4,405.0 Q1170.0,403.8 1168.8,400.6 Q1167.6,397.4 1164.9,394.8 L1162.1,392.2" fill="none" stroke="#5a4a42" stroke-width="0.7" stroke-linejoin="round" stroke-linecap="round" opacity="0.8"/>
<path d="M1043.8,820.0 Q1036.5,822.6 1034.1,820.3 Q1031.8,818.1 1028.1,818.9 Q1024.4,819.7 1021.2,818.9 Q1017.9,818.2 1014.5,817.2 Q1011.1,816.2 1007.7,816.9 L1004.4,817.6" fill="none" stroke="#5a4a42" stroke-width="0.7" stroke-linejoin="round" stroke-linecap="round" opacity="0.8"/>
<path d="M1057.7,273.4 Q1055.0,267.6 1055.2,264.2 L1055.3,260.7" fill="none" stroke="#5a4a42" stroke-width="0.7" stroke-linejoin="round" stroke-linecap="round" opacity="0.8"/>
<path d="M1098.5,397.3 Q1093.6,393.4 1092.1,389.0 Q1090.5,384.6 1091.3,381.8 Q1092.2,379.1 1091.7,375.3 Q1091.2,371.6 1094.0,368.3 Q1096.9,365.1 1097.2,362.2 Q1097.5,359.3 1095.2,356.9 Q1092.9,354.5 1093.0,350.9 Q1093.0,347.2 1090.6,344.6 Q1088.1,341.9 1084.8,340.0 L1081.5,338.2" fill="none" stroke="#5a4a42" stroke-width="0.7" stroke-linejoin="round" stroke-linecap="round" opacity="0.8"/>
<path d="M1191.9,385.4 Q1192.6,391.2 1192.3,395.7 Q1191.9,400.2 1189.1,402.9 Q1186.3,405.7 1185.0,407.8 Q1183.7,410.0 1183.6,413.1 Q1183.4,416.2 1180.6,419.5 Q1177.8,422.7 1174.9,424.7 Q1172.1,426.8 1169.0,427.6 Q1165.9,428.4 1163.1,430.0 Q1160.4,431.7 1158.6,435.3 L1156.8,439.0" fill="none" stroke="#5a4a42" stroke-width="0.7" stroke-linejoin="round" stroke-linecap="round" opacity="0.8"/>
<path d="M1274.2,477.7 Q1281.2,481.8 1284.3,480.6 Q1287.5,479.4 1290.7,478.1 Q1294.0,476.9 1296.2,473.7 Q1298.4,470.4 1299.7,467.7 Q1301.0,464.9 1302.0,461.5 Q1303.1,458.1 1303.4,454.1 Q1303.7,450.0 1302.6,447.7 Q1301.5,445.4 1304.3,441.5 Q1307.0,437.7 1309.9,437.3 L1312.7,437.0" fill="none" stroke="#5a4a42" stroke-width="0.7" stroke-linejoin="round" stroke-linecap="round" opacity="0.8"/>
<path d="M1261.4,449.2 Q1266.0,444.3 1266.2,440.2 Q1266.3,436.2 1264.9,433.7 Q1263.5,431.2 1261.1,428.6 Q1258.7,426.0 1255.0,425.1 Q1251.3,424.2 1248.1,422.9 Q1244.9,421.5 1241.7,422.5 Q1238.5,423.5 1235.8,422.5 Q1233.0,421.5 1229.1,420.0 Q1225.2,418.5 1221.2,419.4 L1217.2,420.3" fill="none" stroke="#5a4a42" stroke-width="0.7" stroke-linejoin="round" stroke-linecap="round" opacity="0.8"/>
<path d="M1102.8,455.8 Q1105.9,450.0 1104.6,446.6 Q1103.2,443.2 1100.5,440.3 Q1097.8,437.5 1096.3,434.9 Q1094.9,432.4 1091.1,430.1 Q1087.3,427.8 1086.0,424.1 Q1084.7,420.4 1081.6,420.2 Q1078.4,420.0 1075.0,419.3 Q1071.6,418.7 1067.3,417.9 Q1062.9,417.1 1060.6,414.9 L1058.2,412.6" fill="none" stroke="#5a4a42" stroke-width="0.7" stroke-linejoin="round" stroke-linecap="round" opacity="0.8"/>
<path d="M1024.9,502.1 Q1019.3,504.6 1015.3,502.9 L1011.2,501.1" fill="none" stroke="#5a4a42" stroke-width="0.7" stroke-linejoin="round" stroke-linecap="round" opacity="0.8"/>
<path d="M1100.6,539.2 Q1105.6,533.8 1108.1,530.8 Q1110.6,527.9 1112.2,525.0 Q1113.9,522.1 1114.1,519.4 Q1114.3,516.7 1113.6,513.4 Q1112.8,510.1 1111.5,506.4 Q1110.2,502.7 1107.8,499.8 Q1105.4,496.9 1104.1,494.2 Q1102.9,491.5 1100.2,489.0 Q1097.4,486.5 1094.9,484.6 L1092.4,482.8" fill="none" stroke="#5a4a42" stroke-width="0.7" stroke-linejoin="round" stroke-linecap="round" opacity="0.8"/>
<path d="M1231.2,556.7 Q1227.0,551.2 1226.4,547.6 Q1225.7,544.1 1222.2,541.8 Q1218.6,539.6 1215.2,540.1 Q1211.8,540.7 1209.3,541.2 Q1206.8,541.6 1203.3,543.8 Q1199.8,546.1 1197.1,547.6 Q1194.3,549.1 1191.0,548.8 Q1187.7,548.4 1184.3,547.3 Q1181.0,546.1 1177.4,548.0 L1173.8,549.9" fill="none" stroke="#5a4a42" stroke-width="0.7" stroke-linejoin="round" stroke-linecap="round" opacity="0.8"/>
<path d="M1313.0,528.0 Q1307.4,532.2 1307.5,536.0 Q1307.6,539.9 1305.1,542.4 Q1302.6,544.9 1299.0,543.2 Q1295.4,541.6 1292.5,544.3 Q1289.6,547.0 1285.8,547.4 Q1282.0,547.9 1278.2,549.5 L1274.5,551.0" fill="none" stroke="#5a4a42" stroke-width="0.7" stroke-linejoin="round" stroke-linecap="round" opacity="0.8"/>
<path d="M1073.5,679.7 Q1067.9,685.1 1065.4,686.7 Q1062.9,688.3 1060.5,691.5 Q1058.2,694.7 1056.7,697.5 Q1055.2,700.2 1052.7,702.9 Q1050.1,705.6 1049.9,709.2 Q1049.7,712.8 1049.7,716.0 Q1049.8,719.2 1047.6,721.8 Q1045.4,724.3 1043.5,726.5 Q1041.5,728.7 1038.2,729.8 L1034.8,731.0" fill="none" stroke="#5a4a42" stroke-width="0.7" stroke-linejoin="round" stroke-linecap="round" opacity="0.8"/>
<path d="M1069.4,389.3 Q1076.0,391.0 1079.2,391.3 Q1082.3,391.6 1084.9,394.5 Q1087.5,397.5 1090.8,396.5 Q1094.1,395.5 1098.3,396.9 Q1102.4,398.3 1105.5,398.5 Q1108.6,398.7 1109.7,403.1 Q1110.9,407.4 1114.5,408.3 Q1118.1,409.3 1121.1,408.4 Q1124.0,407.6 1127.3,408.5 L1130.6,409.4" fill="none" stroke="#5a4a42" stroke-width="0.7" stroke-linejoin="round" stroke-linecap="round" opacity="0.8"/>
<path d="M1236.8,546.0 Q1244.5,545.6 1247.7,544.4 Q1250.9,543.1 1253.6,544.0 Q1256.2,544.8 1259.7,546.8 Q1263.1,548.8 1265.6,550.6 L1268.1,552.4" fill="none" stroke="#5a4a42" stroke-width="0.7" stroke-linejoin="round" stroke-linecap="round" opacity="0.8"/>
<path d="M1145.2,322.5 Q1145.0,314.9 1142.3,313.1 Q1139.5,311.3 1136.4,309.2 Q1133.3,307.1 1132.6,303.6 L1131.9,300.1" fill="none" stroke="#5a4a42" stroke-width="0.7" stroke-linejoin="round" stroke-linecap="round" opacity="0.8"/>
<path d="M1178.1,513.3 Q1185.1,513.4 1187.7,515.0 Q1190.3,516.7 1192.2,519.9 Q1194.2,523.1 1197.0,524.5 Q1199.9,525.8 1202.1,528.4 Q1204.3,531.0 1204.2,534.6 Q1204.0,538.2 1205.7,541.7 Q1207.4,545.2 1209.9,547.5 Q1212.5,549.9 1216.3,549.6 Q1220.2,549.2 1223.7,549.3 L1227.2,549.4" fill="none" stroke="#5a4a42" stroke-width="0.7" stroke-linejoin="round" stroke-linecap="round" opacity="0.8"/>
<path d="M1064.1,630.8 Q1070.2,635.4 1073.2,635.9 Q1076.2,636.4 1079.6,637.5 L1083.0,638.5" fill="none" stroke="#5a4a42" stroke-width="0.7" stroke-linejoin="round" stroke-linecap="round" opacity="0.8"/>
<path d="M1205.0,386.3 Q1206.0,392.3 1206.1,396.2 Q1206.1,400.1 1204.8,403.6 Q1203.5,407.0 1200.3,408.9 Q1197.1,410.7 1195.0,413.2 Q1192.9,415.7 1189.5,417.9 Q1186.1,420.0 1184.9,423.2 Q1183.6,426.4 1180.3,427.5 Q1177.0,428.5 1176.1,430.8 Q1175.2,433.0 1176.3,436.2 L1177.3,439.4" fill="none" stroke="#5a4a42" stroke-width="0.7" stroke-linejoin="round" stroke-linecap="round" opacity="0.8"/>
<path d="M1002.0,516.4 Q1007.9,520.2 1011.8,521.9 Q1015.6,523.6 1019.0,523.2 Q1022.5,522.8 1025.5,521.9 Q1028.5,521.0 1031.5,519.9 Q1034.4,518.8 1038.0,519.0 Q1041.6,519.3 1045.7,518.5 Q1049.8,517.7 1052.3,520.4 Q1054.7,523.1 1058.4,523.4 Q1062.1,523.7 1064.9,525.2 L1067.7,526.8" fill="none" stroke="#5a4a42" stroke-width="0.7" stroke-linejoin="round" stroke-linecap="round" opacity="0.8"/>
<path d="M1088.2,605.3 Q1080.5,603.3 1077.6,603.4 Q1074.8,603.6 1071.6,606.5 Q1068.4,609.4 1067.0,612.0 Q1065.6,614.5 1064.3,617.0 Q1063.1,619.5 1060.2,621.5 Q1057.3,623.4 1054.0,625.8 L1050.8,628.1" fill="none" stroke="#5a4a42" stroke-width="0.7" stroke-linejoin="round" stroke-linecap="round" opacity="0.8"/>
<path d="M1321.5,476.7 Q1325.2,469.3 1327.4,468.3 Q1329.6,467.3 1333.3,466.7 L1337.0,466.0" fill="none" stroke="#5a4a42" stroke-width="0.7" stroke-linejoin="round" stroke-linecap="round" opacity="0.8"/>
<path d="M1231.6,548.2 Q1223.9,547.6 1221.8,546.0 Q1219.8,544.5 1217.4,541.5 Q1215.0,538.4 1213.3,534.9 Q1211.7,531.4 1213.7,528.5 Q1215.7,525.5 1215.0,522.5 Q1214.3,519.5 1211.9,517.8 Q1209.5,516.1 1207.5,513.0 Q1205.5,509.9 1203.7,507.1 Q1201.9,504.3 1200.3,500.3 L1198.8,496.3" fill="none" stroke="#5a4a42" stroke-width="0.7" stroke-linejoin="round" stroke-linecap="round" opacity="0.8"/>
<path d="M1234.9,392.9 Q1231.2,386.0 1231.6,383.1 L1232.0,380.2" fill="none" stroke="#5a4a42" stroke-width="0.7" stroke-linejoin="round" stroke-linecap="round" opacity="0.8"/>
<path d="M1092.8,345.1 Q1087.4,348.6 1085.8,351.6 Q1084.2,354.6 1085.5,358.0 Q1086.8,361.4 1085.3,365.5 Q1083.8,369.5 1081.4,371.6 Q1079.0,373.7 1075.9,372.9 Q1072.8,372.2 1070.6,369.9 Q1068.3,367.6 1065.8,364.6 Q1063.3,361.6 1061.8,359.2 Q1060.3,356.8 1057.2,355.6 L1054.0,354.3" fill="none" stroke="#5a4a42" stroke-width="0.7" stroke-linejoin="round" stroke-linecap="round" opacity="0.8"/>
<path d="M1150.9,450.2 Q1144.7,447.0 1142.4,444.6 Q1140.1,442.2 1135.9,441.1 Q1131.6,440.0 1130.3,437.4 Q1128.9,434.7 1126.1,433.5 Q1123.2,432.4 1123.0,428.2 Q1122.8,424.1 1119.3,422.0 Q1115.7,420.0 1112.3,420.6 Q1108.8,421.1 1105.2,420.1 Q1101.7,419.2 1098.1,419.7 L1094.6,420.2" fill="none" stroke="#5a4a42" stroke-width="0.7" stroke-linejoin="round" stroke-linecap="round" opacity="0.8"/>
<path d="M1223.4,473.4 Q1220.1,467.8 1218.6,465.2 Q1217.1,462.5 1212.7,462.6 Q1208.2,462.7 1206.2,465.0 Q1204.2,467.2 1202.6,469.9 Q1201.1,472.6 1198.2,474.9 Q1195.3,477.2 1191.3,478.4 Q1187.3,479.7 1184.4,478.6 Q1181.5,477.5 1178.4,476.8 Q1175.2,476.0 1171.5,476.4 L1167.8,476.7" fill="none" stroke="#5a4a42" stroke-width="0.7" stroke-linejoin="round" stroke-linecap="round" opacity="0.8"/>
<path d="M1143.2,629.5 Q1145.3,623.5 1146.9,620.0 Q1148.4,616.5 1149.7,613.5 Q1151.0,610.4 1151.5,607.2 Q1151.9,604.0 1150.5,600.9 Q1149.1,597.8 1146.2,595.7 Q1143.3,593.7 1140.4,592.1 Q1137.5,590.5 1133.1,590.1 Q1128.8,589.8 1125.5,589.6 Q1122.3,589.4 1119.6,588.7 L1117.0,588.0" fill="none" stroke="#5a4a42" stroke-width="0.7" stroke-linejoin="round" stroke-linecap="round" opacity="0.8"/>
<path d="M1271.9,381.0 Q1272.1,387.5 1274.8,389.9 Q1277.4,392.3 1278.8,395.6 Q1280.2,398.9 1280.5,402.1 Q1280.8,405.3 1279.6,409.4 Q1278.5,413.5 1277.4,416.7 Q1276.4,420.0 1278.9,423.0 Q1281.5,426.0 1281.8,428.8 Q1282.2,431.5 1285.1,434.3 Q1288.1,437.1 1288.4,441.3 L1288.6,445.6" fill="none" stroke="#5a4a42" stroke-width="0.7" stroke-linejoin="round" stroke-linecap="round" opacity="0.8"/>
<path d="M1264.7,383.9 Q1270.2,387.3 1273.2,388.8 Q1276.3,390.2 1279.2,392.4 Q1282.1,394.6 1285.4,394.0 Q1288.8,393.4 1291.6,395.8 Q1294.5,398.2 1298.1,399.8 Q1301.7,401.4 1304.3,401.3 Q1306.9,401.2 1311.2,400.1 Q1315.4,399.0 1317.8,397.9 L1320.1,396.9" fill="none" stroke="#5a4a42" stroke-width="0.7" stroke-linejoin="round" stroke-linecap="round" opacity="0.8"/>
<path d="M1015.0,790.6 Q1021.3,792.5 1024.8,793.7 Q1028.2,795.0 1031.6,794.7 Q1034.9,794.4 1036.7,791.5 Q1038.4,788.6 1038.7,784.9 L1039.0,781.1" fill="none" stroke="#5a4a42" stroke-width="0.7" stroke-linejoin="round" stroke-linecap="round" opacity="0.8"/>
<path d="M1123.8,499.7 Q1120.6,506.7 1117.7,508.4 Q1114.7,510.1 1113.4,513.2 Q1112.0,516.3 1109.0,517.7 Q1106.1,519.1 1102.9,519.0 Q1099.7,518.9 1095.7,519.2 Q1091.6,519.4 1089.1,520.4 Q1086.7,521.4 1082.9,520.8 Q1079.1,520.2 1076.4,521.6 Q1073.8,522.9 1069.5,523.3 L1065.1,523.7" fill="none" stroke="#5a4a42" stroke-width="0.7" stroke-linejoin="round" stroke-linecap="round" opacity="0.8"/>
<path d="M1230.0,439.8 Q1223.9,438.0 1220.7,438.1 Q1217.6,438.2 1213.8,438.7 Q1210.1,439.2 1206.9,441.0 Q1203.6,442.9 1201.6,445.8 Q1199.6,448.7 1200.5,452.3 Q1201.5,455.9 1202.1,458.2 Q1202.7,460.4 1205.8,463.2 Q1208.8,466.0 1209.5,469.7 Q1210.2,473.5 1211.2,475.7 L1212.3,477.9" fill="none" stroke="#5a4a42" stroke-width="0.7" stroke-linejoin="round" stroke-linecap="round" opacity="0.8"/>
<path d="M1005.5,852.5 Q1012.1,855.0 1014.7,853.6 Q1017.3,852.1 1020.1,849.7 Q1022.8,847.4 1026.1,844.1 Q1029.4,840.9 1028.7,838.0 Q1027.9,835.1 1031.6,832.5 Q1035.3,829.9 1037.7,829.1 Q1040.2,828.3 1043.9,826.8 Q1047.6,825.2 1050.9,824.3 Q1054.1,823.4 1057.1,822.8 L1060.0,822.2" fill="none" stroke="#5a4a42" stroke-width="0.7" stroke-linejoin="round" stroke-linecap="round" opacity="0.8"/>
<path d="M1023.5,512.3 Q1018.8,507.2 1018.4,504.3 Q1018.1,501.5 1019.7,498.2 Q1021.3,494.9 1023.4,493.8 Q1025.5,492.7 1029.8,491.3 Q1034.1,490.0 1035.9,487.7 Q1037.7,485.5 1040.2,483.5 Q1042.7,481.5 1046.2,482.6 Q1049.7,483.8 1051.8,486.5 Q1054.0,489.1 1055.8,491.5 L1057.6,494.0" fill="none" stroke="#5a4a42" stroke-width="0.7" stroke-linejoin="round" stroke-linecap="round" opacity="0.8"/>
<path d="M1102.1,902.2 Q1100.0,896.4 1097.4,893.3 Q1094.7,890.1 1092.7,887.3 Q1090.7,884.5 1088.0,882.1 Q1085.3,879.8 1084.2,877.5 Q1083.1,875.2 1080.5,872.8 Q1077.9,870.4 1075.0,867.0 Q1072.1,863.6 1071.1,860.9 Q1070.1,858.2 1071.9,855.0 Q1073.8,851.9 1075.1,848.7 L1076.5,845.5" fill="none" stroke="#5a4a42" stroke-width="0.7" stroke-linejoin="round" stroke-linecap="round" opacity="0.8"/>
<path d="M976.2,384.6 Q982.0,382.1 984.0,378.7 Q986.1,375.3 985.9,372.6 Q985.7,370.0 982.9,367.5 Q980.2,365.0 977.0,362.4 Q973.7,359.7 970.6,358.9 Q967.4,358.1 966.0,355.5 Q964.6,352.8 965.9,348.9 Q967.2,345.1 968.0,341.2 L968.8,337.3" fill="none" stroke="#5a4a42" stroke-width="0.7" stroke-linejoin="round" stroke-linecap="round" opacity="0.8"/>
<path d="M1061.9,839.4 Q1054.0,840.5 1052.1,842.3 Q1050.2,844.2 1046.9,846.2 Q1043.6,848.2 1039.2,846.7 Q1034.8,845.2 1031.5,845.8 Q1028.2,846.3 1025.3,845.6 Q1022.4,844.8 1018.4,846.5 Q1014.3,848.1 1011.4,847.3 Q1008.5,846.5 1006.7,842.5 Q1004.8,838.5 1002.3,837.0 L999.9,835.6" fill="none" stroke="#5a4a42" stroke-width="0.7" stroke-linejoin="round" stroke-linecap="round" opacity="0.8"/>
<path d="M1172.4,484.4 Q1173.4,477.7 1173.0,474.4 Q1172.7,471.0 1173.5,468.3 Q1174.3,465.5 1175.5,462.3 Q1176.8,459.1 1179.4,456.0 Q1181.9,452.9 1185.0,454.4 Q1188.2,455.8 1191.0,458.6 Q1193.9,461.5 1195.5,464.2 Q1197.2,466.9 1199.3,469.0 Q1201.3,471.2 1204.4,472.7 L1207.5,474.3" fill="none" stroke="#5a4a42" stroke-width="0.7" stroke-linejoin="round" stroke-linecap="round" opacity="0.8"/>
<path d="M1061.3,445.4 Q1067.8,442.4 1070.2,439.8 Q1072.5,437.1 1075.0,434.9 Q1077.5,432.6 1078.3,428.4 Q1079.2,424.2 1077.1,422.0 Q1075.1,419.9 1072.7,417.7 Q1070.3,415.5 1066.7,414.5 Q1063.1,413.5 1059.9,414.1 Q1056.8,414.7 1053.5,417.2 Q1050.3,419.6 1047.4,421.2 L1044.6,422.9" fill="none" stroke="#5a4a42" stroke-width="0.7" stroke-linejoin="round" stroke-linecap="round" opacity="0.8"/>
<path d="M1068.8,468.6 Q1062.2,466.3 1058.7,466.7 Q1055.2,467.1 1051.8,467.7 Q1048.3,468.3 1045.0,467.3 Q1041.6,466.3 1038.2,466.9 Q1034.7,467.5 1031.4,468.4 Q1028.0,469.3 1024.6,468.2 L1021.3,467.2" fill="none" stroke="#5fae5f" stroke-width="0.9" stroke-linejoin="round" stroke-linecap="round" opacity="0.9"/>
<path d="M1008.9,373.7 Q1015.4,371.1 1018.8,370.3 Q1022.2,369.5 1025.6,369.9 Q1029.1,370.3 1032.3,371.6 Q1035.6,373.0 1039.0,373.8 Q1042.4,374.6 1044.8,377.1 Q1047.3,379.6 1047.9,383.1 Q1048.5,386.5 1049.9,389.7 L1051.3,392.9" fill="none" stroke="#5fae5f" stroke-width="0.9" stroke-linejoin="round" stroke-linecap="round" opacity="0.9"/>
<path d="M1055.5,277.8 Q1062.0,280.5 1065.5,280.5 Q1069.0,280.5 1072.5,281.0 Q1075.9,281.6 1079.3,280.7 Q1082.7,279.9 1086.2,279.9 Q1089.7,280.0 1093.1,280.7 Q1096.5,281.5 1099.7,283.0 Q1102.8,284.5 1106.3,284.2 L1109.8,283.9" fill="none" stroke="#5fae5f" stroke-width="0.9" stroke-linejoin="round" stroke-linecap="round" opacity="0.9"/>
<path d="M1042.9,421.8 Q1042.0,428.7 1040.4,431.8 Q1038.8,434.9 1038.4,438.4 Q1038.0,441.9 1039.2,445.2 Q1040.5,448.4 1040.4,451.9 Q1040.2,455.4 1041.9,458.5 Q1043.6,461.6 1044.0,465.0 Q1044.5,468.5 1045.9,471.7 L1047.3,474.9" fill="none" stroke="#5fae5f" stroke-width="0.9" stroke-linejoin="round" stroke-linecap="round" opacity="0.9"/>
<path d="M1101.8,307.7 Q1096.3,303.3 1094.1,300.6 Q1091.9,297.9 1089.4,295.4 Q1086.9,292.9 1084.0,291.0 Q1081.1,289.1 1078.0,287.4 Q1075.0,285.7 1072.8,283.0 Q1070.6,280.3 1068.5,277.4 Q1066.5,274.6 1065.6,271.2 L1064.8,267.8" fill="none" stroke="#5fae5f" stroke-width="0.9" stroke-linejoin="round" stroke-linecap="round" opacity="0.9"/>
<path d="M1042.2,271.1 Q1048.4,274.2 1051.6,275.7 Q1054.8,277.1 1058.3,277.5 Q1061.8,278.0 1065.1,277.0 Q1068.5,276.0 1071.8,274.8 Q1075.1,273.7 1078.6,274.1 Q1082.0,274.5 1084.8,276.7 Q1087.5,278.9 1089.5,281.8 L1091.4,284.7" fill="none" stroke="#5fae5f" stroke-width="0.9" stroke-linejoin="round" stroke-linecap="round" opacity="0.9"/>
<path d="M1132.2,328.5 Q1129.1,334.8 1126.0,336.5 Q1123.0,338.3 1119.5,338.5 Q1116.0,338.7 1112.5,338.5 Q1109.0,338.2 1105.5,338.3 Q1102.0,338.4 1099.0,336.7 Q1095.9,335.0 1093.4,332.6 Q1090.8,330.2 1087.3,329.6 L1083.9,329.1" fill="none" stroke="#5fae5f" stroke-width="0.9" stroke-linejoin="round" stroke-linecap="round" opacity="0.9"/>
<path d="M1031.3,320.9 Q1037.6,324.1 1040.8,325.4 Q1044.1,326.7 1047.4,327.7 Q1050.8,328.7 1054.0,330.1 Q1057.2,331.5 1060.6,332.3 Q1064.0,333.0 1067.2,334.4 Q1070.4,335.9 1072.8,338.4 Q1075.2,341.0 1078.5,342.2 L1081.8,343.4" fill="none" stroke="#5fae5f" stroke-width="0.9" stroke-linejoin="round" stroke-linecap="round" opacity="0.9"/>
<path d="M989.7,375.5 Q984.1,371.2 981.3,369.2 Q978.5,367.1 975.3,365.7 Q972.1,364.3 969.0,362.7 L965.9,361.1" fill="none" stroke="#5fae5f" stroke-width="0.9" stroke-linejoin="round" stroke-linecap="round" opacity="0.9"/>
<path d="M1021.7,466.7 Q1028.2,469.3 1030.8,471.6 Q1033.4,474.0 1036.8,474.8 Q1040.2,475.7 1043.7,475.1 Q1047.1,474.5 1050.6,474.3 L1054.1,474.2" fill="none" stroke="#5fae5f" stroke-width="0.9" stroke-linejoin="round" stroke-linecap="round" opacity="0.9"/>
<path d="M1084.0,294.8 Q1083.0,301.7 1083.0,305.2 Q1083.0,308.7 1082.7,312.2 Q1082.4,315.7 1082.7,319.1 Q1083.1,322.6 1083.6,326.1 Q1084.1,329.6 1084.0,333.1 Q1083.9,336.6 1084.6,340.0 Q1085.4,343.4 1085.2,346.9 L1085.0,350.4" fill="none" stroke="#5fae5f" stroke-width="0.9" stroke-linejoin="round" stroke-linecap="round" opacity="0.9"/>
<path d="M1071.6,377.6 Q1069.1,371.1 1066.4,368.7 Q1063.8,366.4 1060.9,364.5 Q1057.9,362.6 1054.4,362.3 Q1051.0,362.0 1047.5,362.7 Q1044.1,363.4 1040.7,362.5 Q1037.3,361.6 1034.0,362.5 Q1030.6,363.4 1027.3,364.5 L1024.0,365.7" fill="none" stroke="#5fae5f" stroke-width="0.9" stroke-linejoin="round" stroke-linecap="round" opacity="0.9"/>
<path d="M1074.3,326.6 Q1074.9,333.5 1076.2,336.8 Q1077.4,340.1 1077.5,343.6 Q1077.5,347.1 1076.1,350.3 Q1074.7,353.5 1073.6,356.8 Q1072.5,360.1 1072.0,363.6 Q1071.5,367.1 1072.3,370.5 Q1073.1,373.9 1073.2,377.4 L1073.4,380.9" fill="none" stroke="#5fae5f" stroke-width="0.9" stroke-linejoin="round" stroke-linecap="round" opacity="0.9"/>
<path d="M1010.9,342.3 Q1004.1,340.5 1001.1,338.7 Q998.1,337.0 994.6,336.7 Q991.1,336.4 987.9,337.8 Q984.7,339.2 981.2,338.8 Q977.7,338.4 974.7,336.8 Q971.6,335.1 968.1,335.2 L964.6,335.3" fill="none" stroke="#5fae5f" stroke-width="0.9" stroke-linejoin="round" stroke-linecap="round" opacity="0.9"/>
<path d="M1118.7,298.6 Q1112.2,301.1 1108.8,302.2 Q1105.5,303.3 1103.0,305.7 Q1100.6,308.2 1097.4,309.6 Q1094.2,311.0 1090.7,310.9 Q1087.2,310.8 1084.3,308.7 Q1081.4,306.7 1079.0,304.2 Q1076.5,301.7 1073.9,299.4 L1071.2,297.2" fill="none" stroke="#5fae5f" stroke-width="0.9" stroke-linejoin="round" stroke-linecap="round" opacity="0.9"/>
<path d="M977.9,343.6 Q973.1,338.5 972.4,335.1 L971.7,331.7" fill="none" stroke="#5fae5f" stroke-width="0.9" stroke-linejoin="round" stroke-linecap="round" opacity="0.9"/>
<path d="M1024.8,302.3 Q1024.5,309.3 1023.4,312.6 Q1022.3,315.9 1022.7,319.4 Q1023.1,322.9 1024.5,326.1 Q1026.0,329.3 1025.5,332.7 Q1025.0,336.2 1023.8,339.5 Q1022.6,342.8 1021.0,345.9 Q1019.4,349.0 1016.9,351.4 L1014.4,353.9" fill="none" stroke="#5fae5f" stroke-width="0.9" stroke-linejoin="round" stroke-linecap="round" opacity="0.9"/>
<path d="M1030.3,431.8 Q1024.1,435.1 1022.4,438.2 L1020.8,441.3" fill="none" stroke="#5fae5f" stroke-width="0.9" stroke-linejoin="round" stroke-linecap="round" opacity="0.9"/>
<path d="M1046.9,289.1 Q1050.7,295.0 1051.8,298.3 Q1052.9,301.6 1054.3,304.8 Q1055.8,308.0 1058.3,310.5 Q1060.8,312.9 1063.4,315.2 Q1066.1,317.4 1069.5,318.4 Q1072.9,319.3 1076.2,320.4 Q1079.5,321.6 1083.0,321.4 L1086.4,321.2" fill="none" stroke="#5fae5f" stroke-width="0.9" stroke-linejoin="round" stroke-linecap="round" opacity="0.9"/>
<path d="M1014.7,420.8 Q1018.1,426.9 1018.2,430.4 Q1018.2,433.9 1018.5,437.3 L1018.8,440.8" fill="none" stroke="#5fae5f" stroke-width="0.9" stroke-linejoin="round" stroke-linecap="round" opacity="0.9"/>
<path d="M1126.5,347.0 Q1119.6,345.6 1116.2,344.7 Q1112.9,343.8 1109.8,342.0 Q1106.8,340.2 1104.0,338.1 Q1101.2,336.0 1098.6,333.6 Q1096.1,331.3 1093.6,328.8 Q1091.1,326.3 1088.4,324.1 Q1085.7,321.9 1083.2,319.4 L1080.8,316.9" fill="none" stroke="#5fae5f" stroke-width="0.9" stroke-linejoin="round" stroke-linecap="round" opacity="0.9"/>
<path d="M1106.2,263.9 Q1099.8,266.7 1097.9,269.7 Q1096.0,272.6 1093.0,274.4 Q1090.0,276.3 1087.0,278.1 Q1084.0,279.9 1080.5,279.9 Q1077.0,279.8 1073.6,279.4 Q1070.1,279.0 1067.3,276.9 Q1064.4,274.8 1061.7,272.6 L1059.0,270.5" fill="none" stroke="#5fae5f" stroke-width="0.9" stroke-linejoin="round" stroke-linecap="round" opacity="0.9"/>
<path d="M1188.3,461.7 Q1193.0,456.5 1195.9,454.5 Q1198.7,452.5 1200.4,449.4 Q1202.1,446.4 1204.0,443.4 Q1205.9,440.5 1206.0,437.0 Q1206.1,433.5 1204.5,430.4 Q1202.9,427.2 1202.6,423.8 Q1202.3,420.3 1200.5,417.3 L1198.6,414.4" fill="none" stroke="#d9a528" stroke-width="1.1" stroke-linejoin="round" stroke-linecap="round" opacity="0.9"/>
<path d="M1039.8,541.7 Q1041.3,534.9 1041.8,531.4 Q1042.3,527.9 1044.3,525.1 Q1046.3,522.2 1049.2,520.2 Q1052.1,518.2 1053.4,514.9 Q1054.6,511.7 1057.4,509.6 Q1060.2,507.4 1063.7,507.0 Q1067.1,506.6 1070.4,507.8 L1073.7,509.0" fill="none" stroke="#d9a528" stroke-width="1.1" stroke-linejoin="round" stroke-linecap="round" opacity="0.9"/>
<path d="M1070.1,329.8 Q1074.7,335.1 1077.5,337.2 Q1080.3,339.3 1083.4,340.9 Q1086.5,342.6 1089.5,344.4 Q1092.5,346.2 1096.0,346.1 Q1099.5,346.0 1103.0,346.1 Q1106.5,346.2 1109.4,348.2 Q1112.3,350.1 1113.7,353.3 L1115.1,356.5" fill="none" stroke="#d9a528" stroke-width="1.1" stroke-linejoin="round" stroke-linecap="round" opacity="0.9"/>
<path d="M1020.6,418.7 Q1013.8,420.5 1011.5,423.1 L1009.2,425.7" fill="none" stroke="#d9a528" stroke-width="1.1" stroke-linejoin="round" stroke-linecap="round" opacity="0.9"/>
<path d="M1302.4,493.8 Q1300.0,487.2 1298.2,484.2 Q1296.3,481.2 1295.2,477.9 Q1294.1,474.6 1293.8,471.1 Q1293.6,467.6 1291.7,464.7 Q1289.9,461.7 1287.4,459.3 Q1284.8,456.9 1282.0,454.7 Q1279.3,452.6 1276.6,450.3 L1274.0,448.0" fill="none" stroke="#d9a528" stroke-width="1.1" stroke-linejoin="round" stroke-linecap="round" opacity="0.9"/>
<path d="M1165.2,511.6 Q1170.0,516.7 1173.3,517.6 Q1176.7,518.5 1180.2,517.9 Q1183.6,517.2 1187.1,517.0 Q1190.6,516.9 1194.0,517.4 Q1197.5,518.0 1201.0,517.6 Q1204.4,517.3 1207.6,515.8 Q1210.8,514.3 1212.9,511.5 L1215.1,508.8" fill="none" stroke="#d9a528" stroke-width="1.1" stroke-linejoin="round" stroke-linecap="round" opacity="0.9"/>
<path d="M1083.9,312.9 Q1088.9,317.8 1090.1,321.1 Q1091.3,324.4 1090.8,327.8 Q1090.4,331.3 1091.7,334.6 Q1093.0,337.8 1093.8,341.2 Q1094.7,344.6 1094.2,348.1 Q1093.7,351.5 1093.6,355.0 Q1093.5,358.5 1092.6,361.9 L1091.8,365.3" fill="none" stroke="#d9a528" stroke-width="1.1" stroke-linejoin="round" stroke-linecap="round" opacity="0.9"/>
<path d="M1124.7,567.7 Q1119.4,572.3 1118.1,575.5 Q1116.8,578.8 1116.8,582.3 Q1116.8,585.8 1116.9,589.3 Q1116.9,592.8 1116.7,596.3 L1116.4,599.8" fill="none" stroke="#d9a528" stroke-width="1.1" stroke-linejoin="round" stroke-linecap="round" opacity="0.9"/>
<path d="M1059.1,348.3 Q1056.8,341.6 1054.8,338.8 Q1052.8,335.9 1050.5,333.2 Q1048.2,330.6 1044.8,329.7 Q1041.4,328.7 1038.4,327.0 Q1035.4,325.2 1032.1,323.9 Q1028.9,322.5 1026.8,319.7 Q1024.6,317.0 1021.3,315.8 L1018.0,314.7" fill="none" stroke="#d9a528" stroke-width="1.1" stroke-linejoin="round" stroke-linecap="round" opacity="0.9"/>
<path d="M1194.4,560.0 Q1199.0,565.2 1201.9,567.2 Q1204.8,569.2 1208.2,569.8 Q1211.7,570.4 1214.4,572.6 Q1217.2,574.7 1220.2,576.5 Q1223.2,578.2 1226.5,579.4 L1229.8,580.6" fill="none" stroke="#d9a528" stroke-width="1.1" stroke-linejoin="round" stroke-linecap="round" opacity="0.9"/>
<path d="M1284.8,461.6 Q1279.3,465.8 1277.5,468.8 Q1275.6,471.8 1272.4,473.3 Q1269.3,474.7 1265.8,475.1 Q1262.3,475.6 1258.8,476.0 Q1255.4,476.3 1252.0,477.3 Q1248.7,478.3 1245.8,480.3 Q1242.9,482.3 1239.5,483.2 L1236.1,484.1" fill="none" stroke="#d9a528" stroke-width="1.1" stroke-linejoin="round" stroke-linecap="round" opacity="0.9"/>
<path d="M1257.3,502.4 Q1253.8,508.5 1252.9,511.8 Q1251.9,515.2 1249.8,518.0 Q1247.7,520.8 1245.2,523.3 Q1242.8,525.7 1240.4,528.3 Q1238.1,530.9 1236.4,534.0 Q1234.8,537.1 1232.2,539.4 Q1229.5,541.7 1226.8,543.9 L1224.2,546.2" fill="none" stroke="#d9a528" stroke-width="1.1" stroke-linejoin="round" stroke-linecap="round" opacity="0.9"/>
<path d="M1264.0,535.9 Q1266.5,542.4 1268.2,545.5 L1269.8,548.6" fill="none" stroke="#d9a528" stroke-width="1.1" stroke-linejoin="round" stroke-linecap="round" opacity="0.9"/>
<path d="M1200.3,435.8 Q1197.7,429.3 1195.9,426.3 Q1194.1,423.3 1191.7,420.7 Q1189.4,418.1 1186.3,416.6 Q1183.1,415.0 1180.7,412.5 Q1178.4,409.9 1175.3,408.2 Q1172.2,406.5 1169.0,405.2 Q1165.7,403.9 1162.2,403.8 L1158.7,403.7" fill="none" stroke="#d9a528" stroke-width="1.1" stroke-linejoin="round" stroke-linecap="round" opacity="0.9"/>
<path d="M1111.8,550.4 Q1118.8,551.1 1122.2,550.2 Q1125.6,549.4 1129.1,549.1 Q1132.6,548.9 1135.7,547.3 Q1138.9,545.8 1142.2,544.8 Q1145.6,543.9 1148.8,542.5 Q1152.0,541.2 1155.4,540.3 Q1158.8,539.4 1162.1,540.4 L1165.5,541.5" fill="none" stroke="#d9a528" stroke-width="1.1" stroke-linejoin="round" stroke-linecap="round" opacity="0.9"/>
<path d="M1088.3,522.9 Q1086.9,516.1 1084.8,513.3 Q1082.6,510.5 1079.6,508.8 Q1076.5,507.1 1073.5,505.2 Q1070.6,503.4 1067.4,501.9 Q1064.3,500.4 1060.8,500.9 Q1057.3,501.3 1054.0,502.3 Q1050.6,503.3 1047.7,505.2 L1044.8,507.1" fill="none" stroke="#d9a528" stroke-width="1.1" stroke-linejoin="round" stroke-linecap="round" opacity="0.9"/>
<path d="M1060.0,331.7 Q1059.3,324.8 1059.9,321.3 Q1060.4,317.8 1062.4,314.9 Q1064.3,312.0 1067.5,310.7 Q1070.7,309.3 1074.2,308.7 Q1077.6,308.1 1080.9,306.8 Q1084.1,305.5 1086.9,303.4 Q1089.7,301.2 1092.1,298.7 L1094.5,296.2" fill="none" stroke="#d9a528" stroke-width="1.1" stroke-linejoin="round" stroke-linecap="round" opacity="0.9"/>
<path d="M1302.5,495.5 Q1306.9,490.0 1309.7,487.9 Q1312.4,485.7 1315.8,484.7 Q1319.1,483.6 1322.2,481.9 Q1325.2,480.3 1328.7,479.8 Q1332.2,479.3 1335.6,478.6 Q1339.0,477.8 1342.5,478.3 Q1346.0,478.8 1349.1,480.3 L1352.2,481.9" fill="none" stroke="#d9a528" stroke-width="1.1" stroke-linejoin="round" stroke-linecap="round" opacity="0.9"/>
<path d="M1065.9,465.5 Q1059.0,464.4 1055.7,463.2 Q1052.4,461.9 1049.0,461.2 Q1045.6,460.5 1042.3,461.7 Q1039.0,462.9 1036.8,465.6 Q1034.5,468.3 1033.1,471.5 Q1031.6,474.7 1031.0,478.1 Q1030.4,481.6 1029.5,484.9 L1028.5,488.3" fill="none" stroke="#d9a528" stroke-width="1.1" stroke-linejoin="round" stroke-linecap="round" opacity="0.9"/>
<path d="M1180.8,511.8 Q1179.1,518.6 1177.2,521.6 Q1175.4,524.6 1174.5,527.9 Q1173.6,531.3 1173.5,534.8 Q1173.3,538.3 1174.8,541.5 Q1176.3,544.6 1178.2,547.6 Q1180.1,550.5 1180.3,554.0 Q1180.5,557.5 1180.9,561.0 L1181.4,564.5" fill="none" stroke="#d9a528" stroke-width="1.1" stroke-linejoin="round" stroke-linecap="round" opacity="0.9"/>
<path d="M1187.0,448.9 Q1187.0,455.9 1186.6,459.4 Q1186.2,462.9 1187.5,466.1 Q1188.9,469.3 1189.9,472.7 Q1190.9,476.1 1192.8,478.9 Q1194.8,481.8 1196.0,485.1 Q1197.2,488.4 1197.4,491.9 Q1197.6,495.4 1198.9,498.6 L1200.2,501.9" fill="none" stroke="#d9a528" stroke-width="1.1" stroke-linejoin="round" stroke-linecap="round" opacity="0.9"/>
<path d="M1072.6,846.7 Q1065.7,845.3 1062.3,846.1 Q1058.9,846.9 1055.9,848.7 Q1052.9,850.5 1050.2,852.7 Q1047.5,855.0 1044.1,855.5 Q1040.6,856.0 1037.2,856.6 Q1033.7,857.2 1031.2,859.7 Q1028.6,862.1 1027.1,865.2 L1025.6,868.4" fill="none" stroke="#d9a528" stroke-width="1.1" stroke-linejoin="round" stroke-linecap="round" opacity="0.9"/>
<path d="M1104.2,919.2 Q1098.8,914.8 1097.7,911.5 Q1096.6,908.2 1095.5,904.8 Q1094.5,901.5 1093.4,898.2 Q1092.3,894.8 1093.2,891.5 Q1094.1,888.1 1093.5,884.6 Q1092.8,881.2 1093.8,877.8 Q1094.7,874.5 1096.9,871.7 L1099.0,868.9" fill="none" stroke="#d9a528" stroke-width="1.1" stroke-linejoin="round" stroke-linecap="round" opacity="0.9"/>
<path d="M1049.8,537.6 Q1051.9,544.3 1052.2,547.7 Q1052.5,551.2 1050.8,554.3 Q1049.1,557.4 1048.8,560.8 Q1048.5,564.3 1047.7,567.7 Q1047.0,571.1 1046.5,574.6 Q1046.0,578.1 1045.4,581.5 Q1044.8,585.0 1045.8,588.3 L1046.8,591.7" fill="none" stroke="#d9a528" stroke-width="1.1" stroke-linejoin="round" stroke-linecap="round" opacity="0.9"/>
<path d="M984.8,355.8 Q991.7,356.5 995.0,355.2 Q998.3,354.0 1001.8,353.5 Q1005.2,353.0 1008.7,352.8 Q1012.2,352.6 1015.7,353.2 Q1019.1,353.8 1022.5,352.9 Q1025.9,352.0 1029.2,351.1 Q1032.6,350.1 1035.7,348.5 L1038.8,346.8" fill="none" stroke="#d9a528" stroke-width="1.1" stroke-linejoin="round" stroke-linecap="round" opacity="0.9"/>
<path d="M1275.1,496.9 Q1277.2,503.6 1279.1,506.5 Q1281.0,509.5 1282.4,512.7 Q1283.8,515.9 1283.6,519.4 Q1283.4,522.9 1282.7,526.3 Q1282.1,529.7 1280.4,532.8 Q1278.8,535.9 1279.1,539.4 Q1279.3,542.9 1280.1,546.3 L1280.9,549.7" fill="none" stroke="#d9a528" stroke-width="1.1" stroke-linejoin="round" stroke-linecap="round" opacity="0.9"/>
<path d="M1004.8,400.2 Q1004.6,407.2 1004.9,410.7 Q1005.1,414.2 1006.9,417.2 Q1008.6,420.3 1010.6,423.2 Q1012.6,426.0 1015.4,428.1 Q1018.2,430.2 1021.2,431.9 Q1024.3,433.7 1026.3,436.6 Q1028.3,439.5 1030.2,442.4 L1032.2,445.2" fill="none" stroke="#d9a528" stroke-width="1.1" stroke-linejoin="round" stroke-linecap="round" opacity="0.9"/>
<path d="M1070.2,541.5 Q1066.7,535.5 1065.6,532.2 Q1064.4,528.8 1063.9,525.4 Q1063.4,521.9 1063.8,518.4 Q1064.1,515.0 1064.7,511.5 Q1065.3,508.0 1067.6,505.4 Q1069.9,502.8 1071.6,499.8 Q1073.3,496.7 1073.7,493.2 L1074.1,489.7" fill="none" stroke="#d9a528" stroke-width="1.1" stroke-linejoin="round" stroke-linecap="round" opacity="0.9"/>
<path d="M1065.4,813.2 Q1071.1,817.3 1074.2,818.8 Q1077.4,820.2 1079.4,823.1 Q1081.5,825.9 1082.6,829.2 Q1083.7,832.6 1085.3,835.7 Q1086.8,838.8 1087.8,842.2 Q1088.7,845.6 1089.0,849.1 Q1089.3,852.5 1091.4,855.4 L1093.4,858.2" fill="none" stroke="#d9a528" stroke-width="1.1" stroke-linejoin="round" stroke-linecap="round" opacity="0.9"/>
<path d="M1067.3,845.4 Q1067.8,838.5 1069.5,835.4 Q1071.1,832.2 1071.4,828.8 Q1071.8,825.3 1074.0,822.5 L1076.1,819.8" fill="none" stroke="#d9a528" stroke-width="1.1" stroke-linejoin="round" stroke-linecap="round" opacity="0.9"/>
<path d="M1277.4,479.1 Q1282.9,483.4 1286.2,484.5 Q1289.5,485.6 1292.9,484.8 Q1296.3,484.0 1299.2,481.9 Q1302.0,479.9 1305.2,478.3 Q1308.3,476.8 1311.8,476.4 Q1315.3,476.1 1318.1,474.0 Q1320.9,472.0 1324.3,471.0 L1327.7,470.0" fill="none" stroke="#d9a528" stroke-width="1.1" stroke-linejoin="round" stroke-linecap="round" opacity="0.9"/>
<path d="M1030.5,521.5 Q1031.0,514.5 1031.8,511.1 Q1032.6,507.7 1032.5,504.2 Q1032.4,500.7 1033.6,497.4 Q1034.9,494.1 1034.9,490.6 Q1035.0,487.1 1035.9,483.8 Q1036.9,480.4 1037.8,477.0 Q1038.8,473.7 1040.1,470.4 L1041.4,467.2" fill="none" stroke="#d9a528" stroke-width="1.1" stroke-linejoin="round" stroke-linecap="round" opacity="0.9"/>
<path d="M1237.3,415.2 Q1233.0,409.6 1231.4,406.5 Q1229.7,403.4 1229.6,399.9 Q1229.4,396.4 1230.7,393.2 Q1231.9,389.9 1231.8,386.4 L1231.6,382.9" fill="none" stroke="#d9a528" stroke-width="1.1" stroke-linejoin="round" stroke-linecap="round" opacity="0.9"/>
<path d="M1114.5,467.8 Q1109.6,462.8 1108.3,459.5 Q1107.0,456.3 1104.6,453.7 Q1102.3,451.1 1099.1,449.6 Q1096.0,448.0 1093.7,445.4 Q1091.3,442.7 1088.0,441.6 Q1084.7,440.5 1081.3,439.9 Q1077.8,439.2 1074.4,438.5 L1071.0,437.8" fill="none" stroke="#d9a528" stroke-width="1.1" stroke-linejoin="round" stroke-linecap="round" opacity="0.9"/>
<path d="M1061.9,614.5 Q1055.2,616.3 1051.7,616.0 L1048.2,615.6" fill="none" stroke="#d9a528" stroke-width="1.1" stroke-linejoin="round" stroke-linecap="round" opacity="0.9"/>
<path d="M1189.6,508.4 Q1196.6,507.6 1200.0,507.2 Q1203.5,506.7 1207.0,506.7 Q1210.5,506.8 1213.6,508.4 Q1216.7,510.0 1220.2,510.3 Q1223.7,510.7 1226.4,512.8 Q1229.2,515.0 1232.1,517.0 Q1234.9,519.0 1236.6,522.1 L1238.2,525.1" fill="none" stroke="#d9a528" stroke-width="1.1" stroke-linejoin="round" stroke-linecap="round" opacity="0.9"/>
<path d="M1128.5,400.9 Q1121.9,403.4 1119.0,405.2 Q1116.0,407.1 1114.1,410.0 Q1112.3,413.0 1109.8,415.5 Q1107.3,417.9 1104.8,420.3 Q1102.2,422.8 1099.5,424.9 Q1096.7,427.0 1095.4,430.3 Q1094.1,433.5 1093.8,437.0 L1093.5,440.5" fill="none" stroke="#d9a528" stroke-width="1.1" stroke-linejoin="round" stroke-linecap="round" opacity="0.9"/>
<path d="M1054.5,341.0 Q1054.4,348.0 1054.3,351.5 Q1054.3,355.0 1055.3,358.4 Q1056.3,361.8 1058.1,364.7 Q1060.0,367.7 1062.6,370.0 Q1065.2,372.4 1068.4,373.8 Q1071.6,375.2 1074.9,376.3 Q1078.3,377.3 1081.7,376.9 L1085.2,376.5" fill="none" stroke="#d9a528" stroke-width="1.1" stroke-linejoin="round" stroke-linecap="round" opacity="0.9"/>
<path d="M1218.2,632.4 Q1217.1,639.3 1217.5,642.8 Q1218.0,646.2 1218.8,649.6 Q1219.6,653.0 1220.0,656.5 L1220.5,660.0" fill="none" stroke="#d9a528" stroke-width="1.1" stroke-linejoin="round" stroke-linecap="round" opacity="0.9"/>
<path d="M1115.8,441.7 Q1121.9,438.3 1125.3,437.5 Q1128.7,436.6 1132.1,437.7 Q1135.4,438.8 1137.9,441.2 Q1140.4,443.7 1143.1,445.9 Q1145.7,448.2 1149.0,449.4 Q1152.3,450.5 1155.8,450.9 Q1159.3,451.3 1162.8,451.5 L1166.3,451.7" fill="none" stroke="#d9a528" stroke-width="1.1" stroke-linejoin="round" stroke-linecap="round" opacity="0.9"/>
<path d="M1089.3,348.1 Q1090.0,341.1 1090.6,337.6 Q1091.2,334.2 1093.3,331.4 Q1095.4,328.6 1096.9,325.4 Q1098.4,322.3 1100.9,319.8 Q1103.4,317.4 1105.9,314.9 Q1108.3,312.4 1109.1,309.0 Q1110.0,305.6 1108.7,302.3 L1107.5,299.1" fill="none" stroke="#d9a528" stroke-width="1.1" stroke-linejoin="round" stroke-linecap="round" opacity="0.9"/>
<path d="M1240.4,538.5 Q1247.3,537.8 1250.6,536.6 Q1253.9,535.4 1257.4,536.0 Q1260.8,536.5 1264.2,537.2 Q1267.7,538.0 1270.8,539.5 Q1273.9,541.1 1277.4,541.6 Q1280.9,542.1 1284.3,541.4 Q1287.7,540.8 1291.2,540.8 L1294.7,540.9" fill="none" stroke="#d9a528" stroke-width="1.1" stroke-linejoin="round" stroke-linecap="round" opacity="0.9"/>
<path d="M1125.9,376.1 Q1132.8,374.9 1135.4,372.7 Q1138.1,370.4 1141.0,368.5 L1143.9,366.6" fill="none" stroke="#d9a528" stroke-width="1.1" stroke-linejoin="round" stroke-linecap="round" opacity="0.9"/>
<path d="M1084.8,290.0 Q1090.8,293.7 1094.2,294.0 Q1097.7,294.3 1101.2,294.6 Q1104.7,294.9 1108.0,296.2 Q1111.2,297.5 1114.7,297.6 Q1118.2,297.7 1121.7,297.3 L1125.2,296.8" fill="none" stroke="#d9a528" stroke-width="1.1" stroke-linejoin="round" stroke-linecap="round" opacity="0.9"/>
<path d="M1054.2,418.4 Q1057.8,412.4 1059.5,409.3 Q1061.2,406.3 1064.0,404.2 Q1066.8,402.1 1068.8,399.2 Q1070.8,396.4 1074.0,394.8 Q1077.1,393.3 1080.6,393.6 Q1084.1,393.9 1087.5,393.3 Q1091.0,392.7 1094.2,394.1 L1097.4,395.5" fill="none" stroke="#d9a528" stroke-width="1.1" stroke-linejoin="round" stroke-linecap="round" opacity="0.9"/>
<path d="M1102.2,423.1 Q1096.4,419.1 1093.0,418.3 Q1089.6,417.5 1086.3,416.4 Q1083.0,415.2 1079.6,414.4 Q1076.2,413.5 1072.7,412.9 Q1069.3,412.2 1066.5,410.1 Q1063.7,408.1 1061.4,405.4 Q1059.1,402.8 1056.0,401.0 L1053.0,399.2" fill="none" stroke="#d9a528" stroke-width="1.1" stroke-linejoin="round" stroke-linecap="round" opacity="0.9"/>
<path d="M1275.6,506.2 Q1281.4,510.2 1284.7,511.3 Q1288.0,512.4 1290.7,514.7 Q1293.3,517.0 1295.9,519.4 Q1298.4,521.8 1300.4,524.7 Q1302.4,527.5 1305.4,529.4 Q1308.4,531.2 1311.8,531.8 Q1315.2,532.4 1318.0,534.6 L1320.7,536.8" fill="none" stroke="#d9a528" stroke-width="1.1" stroke-linejoin="round" stroke-linecap="round" opacity="0.9"/>
<path d="M1108.1,357.0 Q1106.2,363.7 1106.2,367.2 Q1106.1,370.7 1105.7,374.2 Q1105.3,377.7 1103.8,380.8 Q1102.3,384.0 1099.3,385.9 Q1096.4,387.8 1094.9,391.0 Q1093.5,394.2 1092.3,397.5 Q1091.2,400.8 1090.9,404.3 L1090.6,407.8" fill="none" stroke="#d9a528" stroke-width="1.1" stroke-linejoin="round" stroke-linecap="round" opacity="0.9"/>
<path d="M1146.7,545.2 Q1147.0,538.3 1148.3,535.0 Q1149.6,531.8 1151.5,528.8 Q1153.5,525.9 1154.8,522.7 Q1156.2,519.5 1156.8,516.0 Q1157.4,512.6 1159.0,509.5 Q1160.6,506.4 1160.4,502.9 Q1160.3,499.4 1159.4,496.0 L1158.6,492.6" fill="none" stroke="#d9a528" stroke-width="1.1" stroke-linejoin="round" stroke-linecap="round" opacity="0.9"/>
<path d="M1154.9,527.3 Q1154.8,534.3 1152.9,537.2 Q1150.9,540.2 1149.2,543.2 Q1147.5,546.2 1147.5,549.7 Q1147.5,553.2 1146.5,556.6 Q1145.6,560.0 1146.5,563.4 Q1147.4,566.7 1149.5,569.5 Q1151.6,572.3 1152.6,575.7 L1153.6,579.0" fill="none" stroke="#d9a528" stroke-width="1.1" stroke-linejoin="round" stroke-linecap="round" opacity="0.9"/>
<path d="M1099.0,303.7 Q1092.0,304.2 1088.5,303.8 Q1085.1,303.4 1081.7,304.3 Q1078.3,305.1 1075.7,307.5 Q1073.1,309.9 1071.5,313.0 Q1070.0,316.1 1069.7,319.6 Q1069.5,323.1 1070.4,326.5 Q1071.4,329.8 1074.1,332.1 L1076.7,334.4" fill="none" stroke="#d9a528" stroke-width="1.1" stroke-linejoin="round" stroke-linecap="round" opacity="0.9"/>
<path d="M1089.9,382.1 Q1096.4,379.4 1099.9,379.2 Q1103.4,379.0 1106.4,377.3 Q1109.5,375.6 1112.8,374.5 Q1116.1,373.4 1119.6,372.7 Q1123.0,371.9 1126.0,370.2 Q1129.1,368.5 1132.5,367.7 Q1135.9,366.9 1139.2,365.8 L1142.6,364.8" fill="none" stroke="#d9a528" stroke-width="1.1" stroke-linejoin="round" stroke-linecap="round" opacity="0.9"/>
<path d="M1196.8,551.0 Q1189.9,549.6 1186.5,549.1 Q1183.0,548.7 1179.5,549.1 Q1176.1,549.5 1172.9,548.1 Q1169.7,546.7 1166.2,547.3 Q1162.8,547.9 1160.2,550.3 Q1157.6,552.7 1155.2,555.1 Q1152.7,557.6 1150.8,560.5 L1148.9,563.5" fill="none" stroke="#d9a528" stroke-width="1.1" stroke-linejoin="round" stroke-linecap="round" opacity="0.9"/>
<path d="M1201.8,413.9 Q1195.5,410.8 1192.6,408.8 Q1189.8,406.8 1188.0,403.8 Q1186.1,400.8 1185.5,397.4 Q1184.9,393.9 1186.1,390.6 Q1187.2,387.3 1187.8,383.9 Q1188.4,380.4 1187.6,377.0 L1186.8,373.6" fill="none" stroke="#d9a528" stroke-width="1.1" stroke-linejoin="round" stroke-linecap="round" opacity="0.9"/>
<path d="M1129.2,339.8 Q1135.6,336.9 1138.8,335.4 Q1141.9,333.8 1145.3,333.1 L1148.7,332.3" fill="none" stroke="#d9a528" stroke-width="1.1" stroke-linejoin="round" stroke-linecap="round" opacity="0.9"/>
<path d="M1082.7,914.7 Q1078.5,920.3 1077.2,923.5 Q1075.8,926.8 1074.9,930.1 L1074.0,933.5" fill="none" stroke="#d9a528" stroke-width="1.1" stroke-linejoin="round" stroke-linecap="round" opacity="0.9"/>
<path d="M1158.3,540.9 Q1155.8,534.4 1155.3,530.9 Q1154.8,527.5 1152.9,524.6 Q1150.9,521.6 1150.1,518.2 Q1149.3,514.8 1149.5,511.3 Q1149.8,507.8 1151.8,505.0 Q1153.9,502.2 1155.1,498.9 Q1156.4,495.6 1158.7,493.0 L1160.9,490.3" fill="none" stroke="#d9a528" stroke-width="1.1" stroke-linejoin="round" stroke-linecap="round" opacity="0.9"/>
<path d="M1230.7,378.6 Q1237.5,380.5 1241.0,380.5 Q1244.5,380.6 1247.6,379.0 Q1250.7,377.3 1253.9,376.0 Q1257.1,374.6 1260.4,373.5 Q1263.7,372.4 1266.4,370.0 Q1269.0,367.7 1271.3,365.1 L1273.5,362.4" fill="none" stroke="#d9a528" stroke-width="1.1" stroke-linejoin="round" stroke-linecap="round" opacity="0.9"/>
<path d="M1031.5,488.8 Q1026.1,484.3 1022.7,483.8 L1019.2,483.4" fill="none" stroke="#d9a528" stroke-width="1.1" stroke-linejoin="round" stroke-linecap="round" opacity="0.9"/>
<path d="M1046.3,506.5 Q1044.0,499.9 1043.4,496.5 Q1042.8,493.0 1043.3,489.6 Q1043.8,486.1 1045.9,483.3 Q1048.1,480.6 1049.4,477.3 Q1050.7,474.1 1051.3,470.6 Q1051.9,467.2 1053.3,464.0 Q1054.8,460.8 1055.0,457.3 L1055.3,453.8" fill="none" stroke="#d9a528" stroke-width="1.1" stroke-linejoin="round" stroke-linecap="round" opacity="0.9"/>
<path d="M1215.0,444.8 Q1209.7,440.2 1207.3,437.6 Q1205.0,435.0 1203.2,432.0 Q1201.4,429.0 1200.0,425.8 Q1198.6,422.6 1195.9,420.4 Q1193.2,418.1 1192.1,414.8 Q1191.0,411.5 1189.3,408.5 Q1187.5,405.4 1185.2,402.8 L1182.8,400.2" fill="none" stroke="#d9a528" stroke-width="1.1" stroke-linejoin="round" stroke-linecap="round" opacity="0.9"/>
<path d="M1171.7,485.3 Q1168.0,479.4 1165.4,477.0 Q1162.8,474.7 1159.6,473.3 Q1156.4,471.9 1153.2,470.4 Q1150.1,468.8 1146.6,468.9 Q1143.1,469.1 1139.7,468.4 Q1136.2,467.6 1133.5,465.5 Q1130.8,463.3 1127.6,461.9 L1124.3,460.5" fill="none" stroke="#d9a528" stroke-width="1.1" stroke-linejoin="round" stroke-linecap="round" opacity="0.9"/>
<path d="M965.5,353.1 Q971.7,356.3 975.1,357.3 Q978.5,358.2 981.8,359.3 Q985.1,360.5 987.5,363.0 Q989.8,365.6 991.7,368.6 Q993.6,371.5 995.6,374.4 Q997.6,377.3 999.1,380.4 Q1000.6,383.6 1003.5,385.4 L1006.5,387.3" fill="none" stroke="#d9a528" stroke-width="1.1" stroke-linejoin="round" stroke-linecap="round" opacity="0.9"/>
<path d="M1038.1,882.9 Q1031.4,885.1 1028.1,886.2 Q1024.7,887.2 1021.2,887.2 Q1017.7,887.3 1014.3,886.7 L1010.8,886.1" fill="none" stroke="#d9a528" stroke-width="1.1" stroke-linejoin="round" stroke-linecap="round" opacity="0.9"/>
<path d="M1150.7,582.4 Q1157.7,582.2 1161.2,581.9 Q1164.7,581.5 1167.9,582.7 Q1171.2,584.0 1174.3,585.5 Q1177.5,587.1 1180.9,587.9 Q1184.3,588.6 1187.6,589.7 Q1191.0,590.7 1194.1,592.2 Q1197.3,593.7 1199.3,596.6 L1201.3,599.4" fill="none" stroke="#d9a528" stroke-width="1.1" stroke-linejoin="round" stroke-linecap="round" opacity="0.9"/>
<path d="M1203.2,536.3 Q1198.1,541.1 1196.0,543.8 Q1193.8,546.6 1190.6,548.1 Q1187.5,549.6 1184.3,551.0 Q1181.0,552.4 1178.0,554.1 Q1175.0,555.9 1171.9,557.6 Q1168.9,559.3 1165.5,560.4 Q1162.2,561.5 1158.7,561.3 L1155.2,561.2" fill="none" stroke="#d9a528" stroke-width="1.1" stroke-linejoin="round" stroke-linecap="round" opacity="0.9"/>
<path d="M1155.6,587.9 Q1153.5,581.2 1150.9,578.8 Q1148.3,576.5 1145.1,575.1 Q1141.9,573.7 1138.4,573.2 Q1135.0,572.6 1131.5,573.1 Q1128.0,573.6 1124.6,573.1 Q1121.1,572.6 1118.4,570.3 Q1115.8,568.0 1114.4,564.8 L1113.0,561.6" fill="none" stroke="#d9a528" stroke-width="1.1" stroke-linejoin="round" stroke-linecap="round" opacity="0.9"/>
<path d="M1135.0,574.4 Q1141.9,575.5 1145.3,574.8 Q1148.8,574.1 1152.2,574.8 Q1155.7,575.4 1159.0,576.3 Q1162.4,577.3 1165.9,577.1 Q1169.4,576.9 1172.8,576.0 Q1176.2,575.1 1179.5,574.2 Q1182.9,573.3 1186.4,573.1 L1189.9,573.0" fill="none" stroke="#d9a528" stroke-width="1.1" stroke-linejoin="round" stroke-linecap="round" opacity="0.9"/>
<path d="M1081.1,320.3 Q1086.9,324.2 1088.3,327.4 Q1089.7,330.6 1090.1,334.1 Q1090.5,337.6 1089.4,340.9 Q1088.2,344.2 1088.4,347.7 Q1088.6,351.2 1089.2,354.6 Q1089.8,358.1 1091.5,361.1 Q1093.3,364.1 1095.8,366.5 L1098.4,368.9" fill="none" stroke="#d9a528" stroke-width="1.1" stroke-linejoin="round" stroke-linecap="round" opacity="0.9"/>
<path d="M1030.8,401.4 Q1037.2,398.6 1039.7,396.1 Q1042.2,393.7 1043.2,390.4 Q1044.3,387.0 1044.5,383.5 Q1044.7,380.0 1045.9,376.8 Q1047.1,373.5 1046.8,370.0 Q1046.4,366.5 1044.4,363.6 Q1042.5,360.7 1042.1,357.3 L1041.7,353.8" fill="none" stroke="#d9a528" stroke-width="1.1" stroke-linejoin="round" stroke-linecap="round" opacity="0.9"/>
<path d="M1089.7,599.4 Q1082.8,598.0 1080.4,595.5 Q1077.9,593.0 1074.9,591.1 Q1072.0,589.3 1069.0,587.4 Q1066.0,585.6 1064.3,582.5 Q1062.6,579.5 1059.5,577.7 Q1056.5,576.0 1054.5,573.1 Q1052.5,570.2 1051.6,566.9 L1050.6,563.5" fill="none" stroke="#d9a528" stroke-width="1.1" stroke-linejoin="round" stroke-linecap="round" opacity="0.9"/>
<path d="M1085.0,344.6 Q1081.0,338.8 1080.9,335.3 Q1080.7,331.9 1080.6,328.4 Q1080.4,324.9 1079.2,321.6 Q1078.1,318.2 1078.8,314.8 Q1079.6,311.4 1078.5,308.1 Q1077.4,304.7 1078.4,301.4 Q1079.3,298.0 1078.4,294.6 L1077.5,291.3" fill="none" stroke="#d9a528" stroke-width="1.1" stroke-linejoin="round" stroke-linecap="round" opacity="0.9"/>
<path d="M1127.7,383.2 Q1125.0,389.6 1123.5,392.8 Q1122.0,395.9 1121.9,399.4 Q1121.9,402.9 1123.4,406.1 Q1124.9,409.2 1125.7,412.6 Q1126.4,416.1 1128.8,418.7 Q1131.2,421.2 1133.4,423.9 Q1135.7,426.6 1136.6,430.0 L1137.4,433.4" fill="none" stroke="#d9a528" stroke-width="1.1" stroke-linejoin="round" stroke-linecap="round" opacity="0.9"/>
<path d="M1130.6,374.8 Q1123.9,372.8 1120.6,371.6 Q1117.3,370.5 1113.8,370.3 Q1110.3,370.2 1106.9,369.3 Q1103.6,368.4 1100.1,368.9 Q1096.6,369.3 1093.4,368.1 Q1090.1,366.8 1086.6,367.4 Q1083.2,368.0 1079.7,368.2 L1076.2,368.4" fill="none" stroke="#d9a528" stroke-width="1.1" stroke-linejoin="round" stroke-linecap="round" opacity="0.9"/>
<path d="M1289.8,436.7 Q1296.5,438.4 1299.2,440.6 Q1301.9,442.9 1303.3,446.1 Q1304.7,449.3 1307.2,451.7 Q1309.7,454.2 1313.1,455.1 Q1316.5,456.1 1320.0,455.9 Q1323.4,455.7 1326.9,456.3 L1330.3,456.9" fill="none" stroke="#d9a528" stroke-width="1.1" stroke-linejoin="round" stroke-linecap="round" opacity="0.9"/>
<path d="M1082.3,658.9 Q1075.5,660.5 1072.0,660.1 Q1068.5,659.7 1065.3,658.3 L1062.1,656.9" fill="none" stroke="#d9a528" stroke-width="1.1" stroke-linejoin="round" stroke-linecap="round" opacity="0.9"/>
<path d="M1129.0,419.0 Q1122.6,421.7 1119.7,423.7 Q1116.8,425.7 1115.5,428.9 Q1114.2,432.2 1112.3,435.2 Q1110.5,438.1 1107.3,439.5 Q1104.1,440.9 1101.6,443.4 Q1099.1,445.8 1096.1,447.8 Q1093.2,449.7 1090.1,451.2 L1086.9,452.7" fill="none" stroke="#d9a528" stroke-width="1.1" stroke-linejoin="round" stroke-linecap="round" opacity="0.9"/>
<path d="M1133.1,400.2 Q1126.1,399.2 1122.8,398.2 Q1119.4,397.2 1116.0,397.8 Q1112.5,398.3 1109.0,398.1 Q1105.5,398.0 1102.6,396.1 Q1099.6,394.2 1096.1,394.1 Q1092.6,394.0 1089.1,394.3 Q1085.7,394.6 1082.6,396.4 L1079.6,398.1" fill="none" stroke="#d9a528" stroke-width="1.1" stroke-linejoin="round" stroke-linecap="round" opacity="0.9"/>
<path d="M1062.5,666.2 Q1060.0,659.6 1059.9,656.1 L1059.7,652.6" fill="none" stroke="#d9a528" stroke-width="1.1" stroke-linejoin="round" stroke-linecap="round" opacity="0.9"/>
<path d="M1053.1,470.8 Q1056.0,464.4 1055.5,461.0 Q1055.0,457.5 1055.7,454.1 Q1056.4,450.6 1055.7,447.2 Q1055.0,443.8 1055.6,440.3 Q1056.1,436.9 1057.6,433.7 Q1059.1,430.5 1061.4,427.9 Q1063.7,425.2 1065.2,422.1 L1066.7,418.9" fill="none" stroke="#d9a528" stroke-width="1.1" stroke-linejoin="round" stroke-linecap="round" opacity="0.9"/>
<path d="M1161.1,391.0 Q1154.2,392.2 1151.0,393.6 Q1147.8,395.1 1145.4,397.6 Q1142.9,400.1 1142.0,403.4 Q1141.1,406.8 1141.7,410.3 Q1142.3,413.7 1144.5,416.4 Q1146.7,419.1 1150.0,420.3 Q1153.3,421.6 1156.1,423.6 L1158.9,425.7" fill="none" stroke="#d9a528" stroke-width="1.1" stroke-linejoin="round" stroke-linecap="round" opacity="0.9"/>
<path d="M1013.1,285.2 Q1008.2,290.2 1007.2,293.6 Q1006.2,296.9 1004.5,300.0 Q1002.9,303.1 999.8,304.8 Q996.8,306.5 993.4,307.5 Q990.1,308.6 987.6,311.0 Q985.1,313.4 982.3,315.6 Q979.6,317.8 978.3,321.0 L977.0,324.3" fill="none" stroke="#d9a528" stroke-width="1.1" stroke-linejoin="round" stroke-linecap="round" opacity="0.9"/>
<path d="M1050.6,535.4 Q1044.3,532.2 1041.1,530.9 Q1037.9,529.5 1034.4,530.1 Q1031.0,530.7 1027.5,531.1 Q1024.0,531.4 1020.5,531.4 Q1017.0,531.4 1013.8,530.1 Q1010.5,528.8 1007.1,527.9 L1003.8,526.9" fill="none" stroke="#d9a528" stroke-width="1.1" stroke-linejoin="round" stroke-linecap="round" opacity="0.9"/>
<path d="M1013.1,329.9 Q1020.1,331.0 1023.5,331.7 Q1026.9,332.5 1030.2,333.6 Q1033.5,334.7 1035.9,337.2 Q1038.3,339.7 1041.7,340.7 Q1045.1,341.7 1048.5,341.5 Q1052.0,341.2 1055.1,339.6 Q1058.2,338.0 1060.9,335.7 L1063.5,333.4" fill="none" stroke="#d9a528" stroke-width="1.1" stroke-linejoin="round" stroke-linecap="round" opacity="0.9"/>
<path d="M1220.5,568.1 Q1223.7,561.9 1226.3,559.6 Q1228.9,557.2 1231.8,555.3 Q1234.7,553.3 1237.9,552.0 Q1241.1,550.6 1243.1,547.7 Q1245.2,544.9 1247.4,542.2 Q1249.7,539.5 1253.0,538.5 Q1256.4,537.5 1259.9,537.8 L1263.4,538.1" fill="none" stroke="#d9a528" stroke-width="1.1" stroke-linejoin="round" stroke-linecap="round" opacity="0.9"/>
<path d="M1230.7,472.6 Q1224.8,476.3 1221.9,478.2 Q1218.9,480.1 1216.2,482.3 Q1213.5,484.5 1210.1,485.3 Q1206.7,486.1 1203.4,484.9 Q1200.1,483.7 1196.6,484.0 Q1193.1,484.4 1189.6,484.6 Q1186.1,484.8 1182.7,484.3 L1179.2,483.8" fill="none" stroke="#d9a528" stroke-width="1.1" stroke-linejoin="round" stroke-linecap="round" opacity="0.9"/>
<path d="M1030.1,417.8 Q1031.2,410.9 1031.7,407.4 Q1032.3,404.0 1032.0,400.5 Q1031.7,397.0 1030.9,393.6 Q1030.1,390.2 1031.4,386.9 Q1032.7,383.6 1034.1,380.5 Q1035.6,377.3 1037.5,374.3 Q1039.3,371.3 1041.7,368.8 L1044.1,366.2" fill="none" stroke="#d9a528" stroke-width="1.1" stroke-linejoin="round" stroke-linecap="round" opacity="0.9"/>
<path d="M1293.0,400.9 Q1286.1,401.5 1282.6,401.4 Q1279.1,401.3 1276.0,399.6 Q1272.9,397.9 1270.1,395.8 Q1267.3,393.7 1264.5,391.6 Q1261.7,389.6 1259.9,386.5 Q1258.1,383.5 1255.3,381.4 Q1252.5,379.4 1249.1,378.6 L1245.7,377.9" fill="none" stroke="#d9a528" stroke-width="1.1" stroke-linejoin="round" stroke-linecap="round" opacity="0.9"/>
<path d="M1176.5,452.7 Q1170.3,449.6 1166.8,450.0 Q1163.3,450.4 1160.0,449.5 Q1156.6,448.5 1154.1,446.1 Q1151.5,443.6 1149.8,440.6 Q1148.0,437.6 1144.9,435.9 Q1141.8,434.3 1139.9,431.4 Q1137.9,428.5 1136.4,425.3 L1135.0,422.1" fill="none" stroke="#d9a528" stroke-width="1.1" stroke-linejoin="round" stroke-linecap="round" opacity="0.9"/>
<path d="M1299.4,532.9 Q1294.6,527.8 1293.9,524.4 Q1293.3,520.9 1293.6,517.4 Q1293.8,514.0 1292.0,510.9 Q1290.3,507.9 1289.3,504.5 Q1288.4,501.2 1288.5,497.7 Q1288.6,494.2 1287.7,490.8 Q1286.8,487.4 1285.6,484.1 L1284.3,480.8" fill="none" stroke="#d9a528" stroke-width="1.1" stroke-linejoin="round" stroke-linecap="round" opacity="0.9"/>
<path d="M1082.2,375.8 Q1075.9,378.9 1074.1,381.9 Q1072.3,384.9 1069.3,386.6 Q1066.2,388.3 1062.9,389.3 Q1059.5,390.2 1056.0,390.5 Q1052.5,390.8 1049.1,390.3 Q1045.6,389.8 1042.3,388.7 Q1039.0,387.6 1035.5,387.9 L1032.0,388.2" fill="none" stroke="#d9a528" stroke-width="1.1" stroke-linejoin="round" stroke-linecap="round" opacity="0.9"/>
<path d="M1170.3,544.5 Q1166.4,550.3 1164.2,553.0 Q1161.9,555.7 1158.6,556.6 Q1155.2,557.6 1152.1,559.3 Q1149.0,560.9 1146.6,563.4 Q1144.1,565.9 1141.0,567.5 Q1137.8,569.0 1134.5,570.0 Q1131.1,571.0 1127.7,570.6 L1124.2,570.1" fill="none" stroke="#d9a528" stroke-width="1.1" stroke-linejoin="round" stroke-linecap="round" opacity="0.9"/>
<path d="M1077.7,843.4 Q1084.6,844.5 1088.1,844.9 L1091.6,845.3" fill="none" stroke="#d9a528" stroke-width="1.1" stroke-linejoin="round" stroke-linecap="round" opacity="0.9"/>
<path d="M998.7,350.3 Q999.4,357.3 1000.8,360.5 Q1002.2,363.7 1005.2,365.6 Q1008.1,367.5 1011.6,367.5 Q1015.1,367.6 1018.2,366.0 Q1021.4,364.4 1024.7,363.3 Q1028.0,362.3 1031.5,362.1 Q1035.0,361.9 1037.9,359.8 L1040.7,357.8" fill="none" stroke="#d9a528" stroke-width="1.1" stroke-linejoin="round" stroke-linecap="round" opacity="0.9"/>
<path d="M1094.7,896.7 Q1087.7,897.0 1084.2,896.9 Q1080.8,896.8 1077.3,896.0 Q1073.9,895.3 1070.4,895.4 Q1066.9,895.5 1063.8,897.1 Q1060.7,898.7 1058.3,901.2 Q1055.8,903.7 1053.9,906.6 L1051.9,909.5" fill="none" stroke="#d9a528" stroke-width="1.1" stroke-linejoin="round" stroke-linecap="round" opacity="0.9"/>
<path d="M1020.1,808.9 Q1021.8,802.1 1023.5,799.0 Q1025.1,795.9 1027.1,793.0 Q1029.1,790.2 1031.7,787.8 Q1034.2,785.4 1036.1,782.5 L1037.9,779.5" fill="none" stroke="#d9a528" stroke-width="1.1" stroke-linejoin="round" stroke-linecap="round" opacity="0.9"/>
<path d="M1066.9,922.4 Q1061.5,918.0 1058.4,916.3 Q1055.3,914.7 1052.7,912.4 Q1050.0,910.1 1046.7,909.1 Q1043.3,908.0 1040.5,906.0 Q1037.6,904.0 1035.1,901.5 Q1032.6,899.1 1029.2,898.4 Q1025.7,897.7 1022.7,896.0 L1019.6,894.3" fill="none" stroke="#d9a528" stroke-width="1.1" stroke-linejoin="round" stroke-linecap="round" opacity="0.9"/>
<path d="M1316.3,393.0 Q1314.3,399.7 1314.1,403.2 Q1313.9,406.7 1312.5,409.9 Q1311.0,413.1 1310.8,416.6 Q1310.6,420.1 1311.1,423.6 Q1311.6,427.0 1312.0,430.5 Q1312.4,434.0 1311.2,437.3 Q1310.1,440.6 1309.8,444.1 L1309.5,447.6" fill="none" stroke="#d9a528" stroke-width="1.1" stroke-linejoin="round" stroke-linecap="round" opacity="0.9"/>
<path d="M1058.9,532.6 Q1065.1,529.5 1068.6,529.1 Q1072.1,528.7 1075.4,529.7 Q1078.7,530.7 1082.1,529.8 Q1085.5,528.9 1088.3,526.8 Q1091.2,524.8 1093.5,522.2 Q1095.8,519.5 1098.4,517.2 Q1101.0,514.8 1103.6,512.5 L1106.2,510.1" fill="none" stroke="#d9a528" stroke-width="1.1" stroke-linejoin="round" stroke-linecap="round" opacity="0.9"/>
<path d="M1170.0,615.0 Q1168.1,608.2 1165.8,605.5 Q1163.6,602.8 1161.7,599.9 Q1159.8,597.0 1158.2,593.9 Q1156.6,590.8 1156.6,587.3 Q1156.6,583.8 1158.5,580.9 Q1160.4,577.9 1161.9,574.8 Q1163.4,571.6 1165.9,569.2 L1168.4,566.7" fill="none" stroke="#d9a528" stroke-width="1.1" stroke-linejoin="round" stroke-linecap="round" opacity="0.9"/>
<path d="M1011.2,365.9 Q1007.2,371.6 1006.7,375.1 Q1006.2,378.5 1005.4,381.9 Q1004.7,385.4 1005.1,388.8 Q1005.5,392.3 1005.5,395.8 Q1005.5,399.3 1007.0,402.5 Q1008.6,405.6 1010.3,408.7 Q1012.0,411.7 1012.1,415.2 L1012.2,418.7" fill="none" stroke="#d9a528" stroke-width="1.1" stroke-linejoin="round" stroke-linecap="round" opacity="0.9"/>
<path d="M1272.0,503.0 Q1266.5,507.2 1264.2,509.9 Q1262.0,512.6 1259.2,514.6 Q1256.3,516.7 1253.1,518.1 Q1249.9,519.6 1246.8,521.1 Q1243.7,522.7 1240.3,523.5 Q1236.9,524.3 1233.4,524.7 Q1229.9,525.1 1226.4,525.1 L1222.9,525.0" fill="none" stroke="#d9a528" stroke-width="1.1" stroke-linejoin="round" stroke-linecap="round" opacity="0.9"/>
<path d="M1284.4,415.9 Q1283.1,422.8 1281.2,425.8 Q1279.3,428.7 1277.2,431.5 Q1275.0,434.3 1272.6,436.8 Q1270.2,439.3 1267.1,440.9 Q1264.0,442.5 1260.8,444.0 Q1257.6,445.4 1254.2,446.4 Q1250.9,447.4 1248.1,449.5 L1245.2,451.6" fill="none" stroke="#d9a528" stroke-width="1.1" stroke-linejoin="round" stroke-linecap="round" opacity="0.9"/>
<path d="M1069.9,509.1 Q1075.0,504.3 1077.0,501.4 Q1079.0,498.5 1082.1,497.0 Q1085.3,495.6 1088.2,493.6 Q1091.1,491.7 1092.7,488.5 Q1094.2,485.4 1095.2,482.0 Q1096.1,478.6 1097.9,475.6 Q1099.7,472.6 1102.5,470.5 L1105.3,468.4" fill="none" stroke="#d9a528" stroke-width="1.1" stroke-linejoin="round" stroke-linecap="round" opacity="0.9"/>
<path d="M1024.4,766.2 Q1029.9,770.6 1031.5,773.7 Q1033.1,776.8 1032.9,780.3 Q1032.7,783.8 1032.0,787.3 Q1031.3,790.7 1032.1,794.1 Q1032.9,797.5 1035.2,800.1 Q1037.6,802.7 1040.6,804.4 Q1043.7,806.1 1046.7,807.9 L1049.7,809.7" fill="none" stroke="#d9a528" stroke-width="1.1" stroke-linejoin="round" stroke-linecap="round" opacity="0.9"/>
<path d="M1324.6,473.2 Q1331.6,472.7 1334.7,471.1 L1337.8,469.4" fill="none" stroke="#d9a528" stroke-width="1.1" stroke-linejoin="round" stroke-linecap="round" opacity="0.9"/>
<path d="M1078.3,880.5 Q1084.8,878.1 1088.2,877.1 Q1091.5,876.1 1095.0,876.1 L1098.5,876.0" fill="none" stroke="#d9a528" stroke-width="1.1" stroke-linejoin="round" stroke-linecap="round" opacity="0.9"/>
<path d="M1199.4,444.4 Q1204.2,439.3 1207.6,438.5 Q1211.0,437.7 1214.5,438.0 Q1217.9,438.3 1221.1,439.8 Q1224.2,441.4 1226.6,444.0 Q1229.0,446.6 1230.9,449.5 Q1232.8,452.4 1233.3,455.9 Q1233.8,459.3 1234.0,462.8 L1234.3,466.3" fill="none" stroke="#d9a528" stroke-width="1.1" stroke-linejoin="round" stroke-linecap="round" opacity="0.9"/>
<path d="M1199.1,426.0 Q1197.8,432.9 1197.0,436.3 Q1196.2,439.7 1194.6,442.9 Q1193.0,446.0 1191.8,449.2 Q1190.6,452.5 1188.0,454.9 Q1185.4,457.2 1183.3,460.0 Q1181.2,462.8 1180.9,466.3 Q1180.6,469.8 1179.8,473.2 L1179.0,476.6" fill="none" stroke="#d9a528" stroke-width="1.1" stroke-linejoin="round" stroke-linecap="round" opacity="0.9"/>
<path d="M1121.6,520.7 Q1123.9,527.3 1123.4,530.8 Q1123.0,534.2 1123.7,537.7 Q1124.4,541.1 1124.8,544.6 Q1125.2,548.0 1127.2,550.9 Q1129.2,553.8 1131.7,556.2 Q1134.3,558.6 1135.8,561.8 Q1137.4,564.9 1138.7,568.1 L1139.9,571.4" fill="none" stroke="#d9a528" stroke-width="1.1" stroke-linejoin="round" stroke-linecap="round" opacity="0.9"/>
<path d="M1231.3,475.6 Q1235.6,481.1 1237.5,484.1 Q1239.3,487.1 1239.2,490.6 Q1239.2,494.1 1239.3,497.6 Q1239.5,501.1 1240.2,504.5 Q1241.0,507.9 1239.9,511.2 Q1238.7,514.5 1239.6,517.9 Q1240.5,521.3 1243.0,523.7 L1245.6,526.1" fill="none" stroke="#e3a45a" stroke-width="1.1" stroke-linejoin="round" stroke-linecap="round" opacity="0.9"/>
<path d="M1098.9,500.1 Q1099.6,507.1 1101.9,509.8 Q1104.1,512.5 1106.2,515.3 Q1108.3,518.1 1111.0,520.4 Q1113.6,522.7 1114.9,525.9 Q1116.2,529.2 1118.4,531.8 Q1120.7,534.5 1121.6,537.9 Q1122.6,541.3 1123.7,544.6 L1124.8,547.9" fill="none" stroke="#e3a45a" stroke-width="1.1" stroke-linejoin="round" stroke-linecap="round" opacity="0.9"/>
<path d="M1039.7,383.9 Q1032.7,383.4 1029.5,384.6 Q1026.2,385.9 1022.7,385.9 Q1019.2,385.9 1015.8,386.7 Q1012.4,387.4 1009.0,388.5 Q1005.7,389.6 1003.4,392.2 Q1001.2,394.9 999.1,397.7 L997.0,400.5" fill="none" stroke="#e3a45a" stroke-width="1.1" stroke-linejoin="round" stroke-linecap="round" opacity="0.9"/>
<path d="M1117.9,358.3 Q1112.6,353.8 1109.8,351.6 Q1107.1,349.4 1104.2,347.4 Q1101.4,345.3 1099.2,342.6 Q1097.0,339.9 1096.1,336.5 Q1095.3,333.1 1093.3,330.2 Q1091.2,327.4 1088.1,325.8 Q1085.0,324.2 1082.3,321.9 L1079.7,319.6" fill="none" stroke="#e3a45a" stroke-width="1.1" stroke-linejoin="round" stroke-linecap="round" opacity="0.9"/>
<path d="M1063.5,536.7 Q1066.1,543.2 1067.3,546.4 Q1068.5,549.7 1071.2,552.0 Q1073.9,554.3 1077.4,554.6 Q1080.8,555.0 1084.0,556.4 Q1087.2,557.8 1090.6,558.7 Q1094.0,559.6 1097.5,559.7 Q1101.0,559.8 1104.5,559.5 L1107.9,559.1" fill="none" stroke="#e3a45a" stroke-width="1.1" stroke-linejoin="round" stroke-linecap="round" opacity="0.9"/>
<path d="M1122.6,533.7 Q1115.6,533.0 1112.5,534.5 Q1109.3,536.1 1107.1,538.8 Q1104.9,541.5 1102.6,544.1 Q1100.2,546.7 1098.9,550.0 Q1097.7,553.2 1097.6,556.7 Q1097.6,560.2 1098.4,563.6 Q1099.3,567.0 1100.5,570.3 L1101.8,573.5" fill="none" stroke="#e3a45a" stroke-width="1.1" stroke-linejoin="round" stroke-linecap="round" opacity="0.9"/>
<path d="M1032.1,533.0 Q1038.7,530.6 1041.9,529.2 Q1045.1,527.9 1048.6,527.1 Q1052.0,526.3 1055.3,527.4 Q1058.6,528.4 1061.7,530.1 Q1064.8,531.7 1068.3,531.6 Q1071.8,531.5 1075.1,532.8 Q1078.4,534.0 1081.8,533.6 L1085.3,533.1" fill="none" stroke="#e3a45a" stroke-width="1.1" stroke-linejoin="round" stroke-linecap="round" opacity="0.9"/>
<path d="M1077.6,384.6 Q1079.9,391.2 1082.0,394.0 Q1084.1,396.8 1084.4,400.3 Q1084.7,403.8 1086.7,406.7 Q1088.7,409.5 1089.0,413.0 Q1089.2,416.5 1087.7,419.7 Q1086.3,422.8 1086.2,426.3 Q1086.1,429.8 1084.5,433.0 L1082.9,436.1" fill="none" stroke="#e3a45a" stroke-width="1.1" stroke-linejoin="round" stroke-linecap="round" opacity="0.9"/>
<path d="M1207.5,475.9 Q1206.1,482.8 1205.7,486.3 Q1205.4,489.7 1204.0,493.0 Q1202.7,496.2 1200.3,498.7 Q1197.8,501.2 1196.4,504.4 Q1194.9,507.6 1193.2,510.7 Q1191.6,513.8 1190.9,517.2 Q1190.3,520.7 1190.7,524.1 L1191.2,527.6" fill="none" stroke="#e3a45a" stroke-width="1.1" stroke-linejoin="round" stroke-linecap="round" opacity="0.9"/>
<path d="M1060.2,623.0 Q1064.0,628.9 1066.5,631.3 Q1069.0,633.7 1071.6,636.2 Q1074.1,638.6 1077.1,640.4 Q1080.1,642.2 1082.0,645.1 L1083.9,648.0" fill="none" stroke="#e3a45a" stroke-width="1.1" stroke-linejoin="round" stroke-linecap="round" opacity="0.9"/>
<path d="M1118.5,377.6 Q1124.8,380.6 1128.1,381.9 Q1131.3,383.2 1134.5,384.7 L1137.6,386.2" fill="none" stroke="#e3a45a" stroke-width="1.1" stroke-linejoin="round" stroke-linecap="round" opacity="0.9"/>
<path d="M1047.6,295.9 Q1053.3,300.0 1056.0,302.1 Q1058.8,304.3 1061.6,306.4 Q1064.4,308.5 1066.6,311.2 Q1068.8,314.0 1071.7,315.8 Q1074.7,317.7 1077.8,319.4 Q1080.8,321.0 1084.3,320.8 Q1087.8,320.5 1090.9,322.2 L1094.0,323.8" fill="none" stroke="#e3a45a" stroke-width="1.1" stroke-linejoin="round" stroke-linecap="round" opacity="0.9"/>
<path d="M1036.8,333.9 Q1043.7,332.6 1046.8,330.9 Q1049.8,329.2 1052.1,326.5 Q1054.4,323.8 1056.4,321.0 Q1058.5,318.2 1059.2,314.8 Q1059.9,311.3 1060.3,307.9 Q1060.7,304.4 1059.9,301.0 Q1059.0,297.6 1057.8,294.3 L1056.6,291.0" fill="none" stroke="#e3a45a" stroke-width="1.1" stroke-linejoin="round" stroke-linecap="round" opacity="0.9"/>
<path d="M1069.8,408.3 Q1067.1,401.8 1065.0,399.0 Q1063.0,396.2 1060.9,393.4 Q1058.8,390.6 1055.7,389.1 Q1052.5,387.6 1049.6,385.7 Q1046.6,383.8 1043.1,383.3 Q1039.7,382.9 1036.5,384.4 Q1033.3,385.8 1030.3,387.6 L1027.3,389.4" fill="none" stroke="#e3a45a" stroke-width="1.1" stroke-linejoin="round" stroke-linecap="round" opacity="0.9"/>
<path d="M1173.8,436.8 Q1179.6,432.8 1183.1,432.4 Q1186.5,432.0 1189.5,430.1 Q1192.5,428.3 1195.5,426.5 Q1198.5,424.7 1201.5,422.8 Q1204.5,421.0 1207.0,418.6 Q1209.5,416.2 1211.9,413.6 Q1214.3,411.1 1217.7,410.3 L1221.1,409.4" fill="none" stroke="#e3a45a" stroke-width="1.1" stroke-linejoin="round" stroke-linecap="round" opacity="0.9"/>
<path d="M1160.7,472.0 Q1154.3,474.7 1151.1,476.3 Q1148.0,477.9 1146.0,480.7 Q1143.9,483.6 1141.0,485.5 Q1138.1,487.4 1135.6,489.9 Q1133.2,492.4 1131.6,495.5 Q1130.0,498.6 1129.3,502.0 Q1128.6,505.5 1128.9,509.0 L1129.2,512.4" fill="none" stroke="#e3a45a" stroke-width="1.1" stroke-linejoin="round" stroke-linecap="round" opacity="0.9"/>
<path d="M1041.9,368.5 Q1036.1,372.4 1032.8,373.6 Q1029.5,374.9 1026.0,374.7 Q1022.5,374.5 1019.5,376.3 Q1016.5,378.0 1013.7,380.1 Q1010.9,382.2 1007.4,382.7 Q1003.9,383.1 1000.7,384.4 Q997.5,385.7 994.3,387.2 L991.1,388.6" fill="none" stroke="#e3a45a" stroke-width="1.1" stroke-linejoin="round" stroke-linecap="round" opacity="0.9"/>
<path d="M1111.6,939.3 Q1104.7,940.4 1101.2,939.9 Q1097.7,939.5 1094.9,937.4 Q1092.2,935.2 1088.7,934.8 Q1085.2,934.4 1081.9,935.5 Q1078.6,936.6 1075.7,938.6 L1072.8,940.6" fill="none" stroke="#e3a45a" stroke-width="1.1" stroke-linejoin="round" stroke-linecap="round" opacity="0.9"/>
<path d="M1125.2,457.6 Q1126.6,464.5 1127.7,467.8 Q1128.7,471.2 1128.4,474.7 Q1128.1,478.1 1129.8,481.2 Q1131.5,484.3 1131.8,487.8 Q1132.1,491.3 1133.1,494.6 Q1134.1,498.0 1136.3,500.7 Q1138.4,503.5 1140.1,506.6 L1141.8,509.6" fill="none" stroke="#e3a45a" stroke-width="1.1" stroke-linejoin="round" stroke-linecap="round" opacity="0.9"/>
<path d="M1210.8,567.7 Q1203.9,569.2 1200.4,569.1 Q1196.9,569.0 1193.8,567.3 Q1190.7,565.6 1188.7,562.8 Q1186.7,559.9 1184.0,557.7 Q1181.3,555.5 1178.8,553.1 Q1176.2,550.7 1173.1,549.1 Q1169.9,547.6 1166.5,547.0 L1163.0,546.4" fill="none" stroke="#e3a45a" stroke-width="1.1" stroke-linejoin="round" stroke-linecap="round" opacity="0.9"/>
<path d="M1233.6,492.1 Q1239.8,488.8 1242.4,486.5 Q1245.0,484.2 1248.1,482.5 Q1251.2,480.9 1254.7,480.7 Q1258.2,480.5 1261.5,479.5 Q1264.9,478.5 1268.1,477.2 Q1271.4,475.9 1274.3,474.0 Q1277.3,472.1 1278.8,469.0 L1280.3,465.8" fill="none" stroke="#e3a45a" stroke-width="1.1" stroke-linejoin="round" stroke-linecap="round" opacity="0.9"/>
<path d="M1079.1,636.5 Q1072.1,636.1 1068.9,634.7 Q1065.7,633.3 1063.4,630.7 Q1061.0,628.1 1059.0,625.3 Q1056.9,622.4 1054.6,619.9 Q1052.2,617.3 1049.8,614.8 Q1047.3,612.2 1045.9,609.1 L1044.4,605.9" fill="none" stroke="#e3a45a" stroke-width="1.1" stroke-linejoin="round" stroke-linecap="round" opacity="0.9"/>
<path d="M1224.9,428.2 Q1227.1,421.5 1227.8,418.1 Q1228.5,414.7 1230.2,411.6 Q1231.9,408.6 1234.4,406.1 Q1236.9,403.7 1238.9,400.8 Q1241.0,397.9 1242.6,394.8 Q1244.2,391.7 1244.5,388.2 Q1244.9,384.8 1245.9,381.4 L1246.8,378.0" fill="none" stroke="#e3a45a" stroke-width="1.1" stroke-linejoin="round" stroke-linecap="round" opacity="0.9"/>
<path d="M1177.5,584.5 Q1171.2,581.6 1167.7,581.0 Q1164.3,580.4 1160.9,581.4 Q1157.5,582.3 1154.2,583.5 Q1150.9,584.6 1148.2,586.9 Q1145.5,589.1 1142.4,590.7 Q1139.3,592.3 1136.5,594.4 Q1133.7,596.4 1130.6,598.1 L1127.5,599.7" fill="none" stroke="#e3a45a" stroke-width="1.1" stroke-linejoin="round" stroke-linecap="round" opacity="0.9"/>
<path d="M1080.8,857.8 Q1087.7,857.5 1091.2,857.5 L1094.7,857.5" fill="none" stroke="#e3a45a" stroke-width="1.1" stroke-linejoin="round" stroke-linecap="round" opacity="0.9"/>
<path d="M1000.0,374.7 Q993.1,374.1 989.7,373.1 Q986.4,372.1 983.1,370.8 Q979.9,369.5 977.3,367.1 Q974.7,364.7 973.7,361.4 Q972.6,358.1 970.1,355.7 Q967.5,353.3 964.2,352.2 Q960.8,351.1 958.4,348.6 L956.0,346.1" fill="none" stroke="#e3a45a" stroke-width="1.1" stroke-linejoin="round" stroke-linecap="round" opacity="0.9"/>
<path d="M1046.6,501.3 Q1053.1,504.0 1056.6,504.0 Q1060.1,503.9 1063.5,504.4 Q1067.0,505.0 1070.1,506.5 Q1073.2,508.1 1076.3,509.8 Q1079.4,511.5 1082.9,511.5 Q1086.4,511.5 1089.6,512.9 Q1092.8,514.3 1096.3,514.1 L1099.8,513.8" fill="none" stroke="#e3a45a" stroke-width="1.1" stroke-linejoin="round" stroke-linecap="round" opacity="0.9"/>
<path d="M1198.3,384.8 Q1200.8,391.4 1203.1,394.0 Q1205.3,396.7 1207.4,399.5 Q1209.4,402.4 1212.7,403.7 Q1216.0,404.9 1219.4,405.0 Q1222.9,405.1 1226.4,405.7 Q1229.9,406.2 1233.3,406.9 Q1236.7,407.5 1239.8,409.3 L1242.8,411.0" fill="none" stroke="#e3a45a" stroke-width="1.1" stroke-linejoin="round" stroke-linecap="round" opacity="0.9"/>
<path d="M1276.5,468.4 Q1272.4,462.7 1272.0,459.3 Q1271.6,455.8 1273.2,452.7 Q1274.8,449.6 1277.7,447.6 Q1280.6,445.7 1284.1,445.2 Q1287.6,444.7 1290.7,443.1 Q1293.8,441.5 1296.9,439.9 Q1300.0,438.3 1303.5,438.1 L1307.0,438.0" fill="none" stroke="#e3a45a" stroke-width="1.1" stroke-linejoin="round" stroke-linecap="round" opacity="0.9"/>
<path d="M1049.0,844.0 Q1043.7,848.7 1040.4,849.8 Q1037.1,851.0 1035.0,853.7 Q1032.8,856.5 1030.3,858.9 Q1027.8,861.3 1027.0,864.7 Q1026.2,868.1 1023.6,870.5 Q1021.0,872.9 1017.7,874.0 Q1014.3,875.1 1011.4,876.9 L1008.4,878.8" fill="none" stroke="#e3a45a" stroke-width="1.1" stroke-linejoin="round" stroke-linecap="round" opacity="0.9"/>
<path d="M1062.5,313.2 Q1057.1,308.7 1054.0,307.0 Q1050.9,305.4 1047.4,305.2 Q1044.0,304.9 1041.2,302.8 Q1038.4,300.7 1036.7,297.6 Q1035.0,294.6 1034.5,291.1 Q1034.0,287.6 1035.2,284.3 L1036.3,281.0" fill="none" stroke="#b27ae6" stroke-width="1.1" stroke-linejoin="round" stroke-linecap="round" opacity="0.9"/>
<path d="M1057.0,398.6 Q1050.1,399.3 1046.8,400.6 Q1043.5,401.8 1040.1,402.2 Q1036.6,402.7 1033.1,403.0 Q1029.6,403.2 1026.2,402.5 Q1022.7,401.9 1019.8,399.9 Q1016.9,398.0 1013.4,398.0 L1009.9,398.0" fill="none" stroke="#b27ae6" stroke-width="1.1" stroke-linejoin="round" stroke-linecap="round" opacity="0.9"/>
<path d="M1137.0,389.7 Q1139.6,396.2 1139.9,399.7 Q1140.2,403.2 1139.9,406.6 Q1139.6,410.1 1139.2,413.6 Q1138.7,417.1 1139.4,420.5 Q1140.1,423.9 1141.1,427.3 Q1142.1,430.6 1143.8,433.7 L1145.5,436.7" fill="none" stroke="#b27ae6" stroke-width="1.1" stroke-linejoin="round" stroke-linecap="round" opacity="0.9"/>
<path d="M1170.7,615.8 Q1164.3,613.0 1160.8,613.4 Q1157.4,613.8 1153.9,613.8 Q1150.4,613.7 1146.9,613.4 Q1143.4,613.1 1140.6,611.0 L1137.8,608.8" fill="none" stroke="#b27ae6" stroke-width="1.1" stroke-linejoin="round" stroke-linecap="round" opacity="0.9"/>
<path d="M1065.2,528.9 Q1058.5,531.0 1056.3,533.6 Q1054.1,536.3 1052.8,539.6 Q1051.5,542.8 1051.3,546.3 Q1051.1,549.8 1052.8,552.9 Q1054.5,556.0 1057.0,558.4 Q1059.6,560.8 1062.0,563.3 L1064.3,565.9" fill="none" stroke="#b27ae6" stroke-width="1.1" stroke-linejoin="round" stroke-linecap="round" opacity="0.9"/>
<path d="M1230.3,575.8 Q1231.8,568.9 1231.1,565.5 Q1230.4,562.1 1229.9,558.6 Q1229.4,555.2 1227.6,552.2 Q1225.7,549.2 1225.1,545.8 Q1224.5,542.3 1225.0,538.9 Q1225.4,535.4 1227.6,532.6 L1229.7,529.8" fill="none" stroke="#b27ae6" stroke-width="1.1" stroke-linejoin="round" stroke-linecap="round" opacity="0.9"/>
<path d="M1088.7,393.7 Q1083.2,389.4 1079.8,388.4 Q1076.5,387.4 1073.1,388.3 Q1069.7,389.1 1066.4,390.4 Q1063.2,391.8 1061.2,394.7 Q1059.3,397.6 1058.3,400.9 Q1057.3,404.3 1057.0,407.8 L1056.8,411.3" fill="none" stroke="#b27ae6" stroke-width="1.1" stroke-linejoin="round" stroke-linecap="round" opacity="0.9"/>
<path d="M996.4,381.4 Q990.1,384.3 988.1,387.2 L986.1,390.1" fill="none" stroke="#b27ae6" stroke-width="1.1" stroke-linejoin="round" stroke-linecap="round" opacity="0.9"/>
<path d="M1221.3,506.8 Q1219.9,500.0 1217.6,497.4 Q1215.2,494.8 1212.4,492.7 Q1209.6,490.5 1207.7,487.6 Q1205.9,484.6 1204.2,481.6 Q1202.5,478.5 1200.2,475.8 Q1197.9,473.2 1194.9,471.4 L1191.9,469.6" fill="none" stroke="#b27ae6" stroke-width="1.1" stroke-linejoin="round" stroke-linecap="round" opacity="0.9"/>
<path d="M1159.3,491.7 Q1153.2,488.3 1149.9,486.9 Q1146.7,485.6 1144.1,483.3 Q1141.4,481.0 1138.7,478.8 Q1136.0,476.6 1132.6,475.7 Q1129.2,474.9 1126.6,472.5 Q1124.0,470.2 1121.8,467.5 L1119.6,464.8" fill="none" stroke="#b27ae6" stroke-width="1.1" stroke-linejoin="round" stroke-linecap="round" opacity="0.9"/>
<path d="M1109.8,581.6 Q1112.3,575.1 1114.8,572.6 Q1117.3,570.2 1118.4,566.9 Q1119.5,563.6 1121.7,560.8 Q1123.8,558.0 1126.2,555.5 Q1128.6,552.9 1130.5,550.0 Q1132.5,547.1 1134.2,544.0 L1135.9,541.0" fill="none" stroke="#b27ae6" stroke-width="1.1" stroke-linejoin="round" stroke-linecap="round" opacity="0.9"/>
<path d="M1101.8,444.6 Q1095.7,441.2 1092.2,440.8 Q1088.7,440.3 1085.7,438.5 Q1082.6,436.8 1079.4,435.4 Q1076.2,434.0 1073.6,431.7 Q1070.9,429.4 1069.6,426.2 Q1068.3,423.0 1068.0,419.5 L1067.7,416.0" fill="none" stroke="#b27ae6" stroke-width="1.1" stroke-linejoin="round" stroke-linecap="round" opacity="0.9"/>
<path d="M1245.8,389.4 Q1239.0,387.9 1235.8,386.5 L1232.6,385.1" fill="none" stroke="#b27ae6" stroke-width="1.1" stroke-linejoin="round" stroke-linecap="round" opacity="0.9"/>
<path d="M1088.6,429.4 Q1082.3,432.4 1078.8,432.6 Q1075.3,432.8 1072.0,431.8 Q1068.6,430.8 1065.1,430.9 Q1061.6,431.1 1058.2,431.9 Q1054.8,432.7 1051.4,432.0 Q1047.9,431.3 1045.0,429.4 L1042.1,427.5" fill="none" stroke="#b27ae6" stroke-width="1.1" stroke-linejoin="round" stroke-linecap="round" opacity="0.9"/>
<path d="M1319.5,489.6 Q1323.3,483.8 1325.4,481.0 Q1327.5,478.2 1327.9,474.7 Q1328.3,471.2 1330.0,468.1 Q1331.6,465.1 1331.4,461.6 Q1331.2,458.1 1329.7,454.9 Q1328.3,451.7 1326.7,448.5 L1325.2,445.4" fill="none" stroke="#b27ae6" stroke-width="1.1" stroke-linejoin="round" stroke-linecap="round" opacity="0.9"/>
<path d="M1284.1,492.4 Q1277.2,493.5 1273.7,492.9 Q1270.3,492.2 1266.9,491.4 Q1263.5,490.6 1260.3,489.1 Q1257.2,487.5 1254.6,485.2 Q1251.9,482.9 1249.2,480.7 Q1246.4,478.6 1243.3,477.1 L1240.1,475.5" fill="none" stroke="#b27ae6" stroke-width="1.1" stroke-linejoin="round" stroke-linecap="round" opacity="0.9"/>
<path d="M1172.3,605.7 Q1169.9,612.3 1169.0,615.7 Q1168.0,619.0 1165.4,621.3 Q1162.7,623.6 1160.6,626.4 Q1158.5,629.2 1156.6,632.1 Q1154.7,635.1 1151.5,636.5 L1148.3,637.9" fill="none" stroke="#b27ae6" stroke-width="1.1" stroke-linejoin="round" stroke-linecap="round" opacity="0.9"/>
<path d="M1095.4,478.8 Q1101.5,475.2 1104.8,474.1 Q1108.1,472.9 1110.5,470.3 Q1112.9,467.8 1113.4,464.3 Q1114.0,460.9 1115.5,457.7 Q1117.0,454.6 1117.1,451.1 Q1117.2,447.6 1118.2,444.2 L1119.2,440.8" fill="none" stroke="#b27ae6" stroke-width="1.1" stroke-linejoin="round" stroke-linecap="round" opacity="0.9"/>
<path d="M1229.6,514.0 Q1222.8,512.1 1219.8,510.5 Q1216.7,508.8 1213.6,507.1 Q1210.5,505.5 1207.2,504.4 Q1203.9,503.3 1200.4,502.9 Q1196.9,502.6 1193.5,502.0 Q1190.0,501.4 1186.6,502.0 L1183.1,502.7" fill="none" stroke="#b27ae6" stroke-width="1.1" stroke-linejoin="round" stroke-linecap="round" opacity="0.9"/>
<path d="M1022.8,425.7 Q1025.6,419.3 1028.3,417.0 Q1030.9,414.7 1034.2,413.6 Q1037.5,412.4 1040.1,410.0 Q1042.6,407.6 1045.8,406.3 Q1049.1,405.0 1052.4,403.8 Q1055.7,402.7 1057.9,400.0 L1060.2,397.3" fill="none" stroke="#b27ae6" stroke-width="1.1" stroke-linejoin="round" stroke-linecap="round" opacity="0.9"/>
<path d="M1141.8,595.5 Q1135.3,592.8 1132.1,591.6 Q1128.8,590.3 1125.4,589.8 Q1121.9,589.3 1118.6,590.3 Q1115.2,591.4 1111.8,590.8 Q1108.3,590.3 1105.5,588.3 Q1102.6,586.2 1099.3,585.1 L1096.0,584.0" fill="none" stroke="#b27ae6" stroke-width="1.1" stroke-linejoin="round" stroke-linecap="round" opacity="0.9"/>
<path d="M1110.8,520.8 Q1116.8,517.3 1120.3,517.3 Q1123.8,517.4 1127.1,516.3 Q1130.5,515.2 1134.0,514.9 Q1137.4,514.7 1140.6,516.2 Q1143.8,517.6 1146.9,519.3 Q1149.9,521.1 1152.2,523.7 L1154.5,526.4" fill="none" stroke="#b27ae6" stroke-width="1.1" stroke-linejoin="round" stroke-linecap="round" opacity="0.9"/>
<path d="M1340.5,559.6 Q1343.0,553.1 1342.4,549.7 Q1341.7,546.2 1341.1,542.8 Q1340.6,539.3 1341.7,536.0 Q1342.8,532.7 1343.1,529.2 Q1343.3,525.7 1343.2,522.2 Q1343.1,518.7 1342.5,515.3 L1342.0,511.8" fill="none" stroke="#b27ae6" stroke-width="1.1" stroke-linejoin="round" stroke-linecap="round" opacity="0.9"/>
<path d="M1064.8,313.6 Q1071.5,311.7 1074.1,309.4 Q1076.7,307.0 1079.8,305.4 Q1082.9,303.8 1086.4,304.0 Q1089.9,304.2 1093.2,305.3 Q1096.5,306.4 1099.9,307.3 Q1103.3,308.2 1106.5,309.7 L1109.6,311.3" fill="none" stroke="#b27ae6" stroke-width="1.1" stroke-linejoin="round" stroke-linecap="round" opacity="0.9"/>
<path d="M1064.8,929.8 Q1071.6,928.3 1074.2,925.9 Q1076.8,923.6 1080.1,922.3 Q1083.3,921.1 1086.8,920.5 Q1090.3,920.0 1093.7,919.6 Q1097.2,919.2 1100.4,920.5 Q1103.7,921.8 1107.2,921.8 L1110.7,921.7" fill="none" stroke="#b27ae6" stroke-width="1.1" stroke-linejoin="round" stroke-linecap="round" opacity="0.9"/>
<path d="M1064.3,507.2 Q1059.6,512.4 1056.9,514.5 Q1054.1,516.6 1051.0,518.2 Q1047.9,519.8 1044.9,521.7 Q1041.9,523.5 1038.6,524.7 Q1035.3,525.8 1032.2,527.4 Q1029.1,529.0 1025.8,530.2 L1022.5,531.5" fill="none" stroke="#b27ae6" stroke-width="1.1" stroke-linejoin="round" stroke-linecap="round" opacity="0.9"/>
<path d="M1063.7,625.7 Q1060.7,619.3 1059.4,616.1 Q1058.1,612.9 1056.8,609.6 Q1055.6,606.3 1055.6,602.8 Q1055.6,599.3 1056.1,595.8 Q1056.6,592.4 1058.4,589.4 Q1060.2,586.4 1060.3,582.9 L1060.4,579.4" fill="none" stroke="#b27ae6" stroke-width="1.1" stroke-linejoin="round" stroke-linecap="round" opacity="0.9"/>
<path d="M1152.5,503.5 Q1150.5,510.2 1149.3,513.5 Q1148.1,516.8 1146.4,519.8 Q1144.8,522.9 1144.0,526.3 Q1143.2,529.7 1140.7,532.1 Q1138.1,534.6 1137.3,538.0 Q1136.4,541.4 1135.8,544.8 L1135.2,548.3" fill="none" stroke="#b27ae6" stroke-width="1.1" stroke-linejoin="round" stroke-linecap="round" opacity="0.9"/>
<path d="M1078.4,433.5 Q1084.9,430.9 1088.4,430.9 Q1091.9,430.8 1095.3,430.0 Q1098.7,429.2 1102.0,428.0 Q1105.3,426.9 1108.3,425.1 Q1111.3,423.3 1113.7,420.7 Q1116.0,418.1 1118.2,415.4 L1120.4,412.6" fill="none" stroke="#b27ae6" stroke-width="1.1" stroke-linejoin="round" stroke-linecap="round" opacity="0.9"/>
<path d="M1261.1,409.1 Q1254.1,408.8 1250.6,408.3 Q1247.2,407.8 1243.8,407.0 Q1240.4,406.2 1237.0,405.2 Q1233.6,404.3 1230.5,402.9 Q1227.3,401.4 1225.1,398.6 Q1222.9,395.9 1221.6,392.7 L1220.3,389.4" fill="none" stroke="#b27ae6" stroke-width="1.1" stroke-linejoin="round" stroke-linecap="round" opacity="0.9"/>
<path d="M1062.0,258.0 Q1075.0,300.0 1081.5,317.5 Q1088.0,335.0 1092.0,351.5 L1096.0,368.0" fill="none" stroke="#62b4e6" stroke-width="2" stroke-linejoin="round" stroke-linecap="round" opacity="1"/>
<path d="M1100.0,262.0 Q1105.0,300.0 1117.5,315.0 Q1130.0,330.0 1135.0,342.5 L1140.0,355.0" fill="none" stroke="#62b4e6" stroke-width="2" stroke-linejoin="round" stroke-linecap="round" opacity="1"/>
<path d="M1005.0,440.0 Q1040.0,432.0 1060.0,436.0 Q1080.0,440.0 1095.0,443.0 L1110.0,446.0" fill="none" stroke="#62b4e6" stroke-width="2" stroke-linejoin="round" stroke-linecap="round" opacity="1"/>
<path d="M1150.0,438.0 Q1191.0,446.0 1209.5,449.0 Q1228.0,452.0 1250.5,453.0 Q1273.0,454.0 1293.0,450.0 Q1313.0,446.0 1319.5,447.0 L1326.0,448.0" fill="none" stroke="#62b4e6" stroke-width="2" stroke-linejoin="round" stroke-linecap="round" opacity="1"/>
<path d="M1228.0,452.0 Q1232.0,411.0 1229.0,396.0 L1226.0,381.0" fill="none" stroke="#62b4e6" stroke-width="2" stroke-linejoin="round" stroke-linecap="round" opacity="1"/>
<path d="M1150.0,399.0 Q1191.0,397.0 1208.5,400.0 Q1226.0,403.0 1239.0,402.0 Q1252.0,401.0 1270.5,405.0 Q1289.0,409.0 1306.5,407.0 L1324.0,405.0" fill="none" stroke="#62b4e6" stroke-width="2" stroke-linejoin="round" stroke-linecap="round" opacity="1"/>
<path d="M1228.0,452.0 Q1224.0,473.0 1219.5,488.0 Q1215.0,503.0 1211.0,518.5 Q1207.0,534.0 1202.0,554.5 L1197.0,575.0" fill="none" stroke="#62b4e6" stroke-width="2" stroke-linejoin="round" stroke-linecap="round" opacity="1"/>
<path d="M1150.0,483.0 Q1191.0,489.0 1211.5,493.0 Q1232.0,497.0 1252.5,495.0 Q1273.0,493.0 1293.5,488.0 Q1314.0,483.0 1326.0,479.0 L1338.0,475.0" fill="none" stroke="#62b4e6" stroke-width="2" stroke-linejoin="round" stroke-linecap="round" opacity="1"/>
<path d="M1150.0,542.0 Q1201.0,538.0 1226.5,540.0 Q1252.0,542.0 1272.5,542.0 Q1293.0,542.0 1313.5,536.0 Q1334.0,530.0 1348.5,522.0 L1363.0,514.0" fill="none" stroke="#62b4e6" stroke-width="2" stroke-linejoin="round" stroke-linecap="round" opacity="1"/>
<path d="M1228.0,454.0 Q1273.0,473.0 1293.5,488.0 Q1314.0,503.0 1326.0,515.5 L1338.0,528.0" fill="none" stroke="#62b4e6" stroke-width="2" stroke-linejoin="round" stroke-linecap="round" opacity="1"/>
<path d="M1040.0,330.0 Q1060.0,350.0 1075.0,355.0 L1090.0,360.0" fill="none" stroke="#62b4e6" stroke-width="2" stroke-linejoin="round" stroke-linecap="round" opacity="1"/>
<path d="M975.0,355.0 Q1010.0,388.0 1020.0,394.0 Q1030.0,400.0 1045.0,405.0 Q1060.0,410.0 1075.0,405.0 L1090.0,400.0" fill="none" stroke="#62b4e6" stroke-width="2" stroke-linejoin="round" stroke-linecap="round" opacity="1"/>
<path d="M1150.0,560.0 Q1180.0,580.0 1200.0,580.0 Q1220.0,580.0 1235.0,577.5 L1250.0,575.0" fill="none" stroke="#62b4e6" stroke-width="2" stroke-linejoin="round" stroke-linecap="round" opacity="1"/>
<path d="M1000.0,300.0 Q1030.0,320.0 1040.0,310.0 Q1050.0,300.0 1065.0,295.0 L1080.0,290.0" fill="none" stroke="#62b4e6" stroke-width="2" stroke-linejoin="round" stroke-linecap="round" opacity="1"/>
<path d="M1140.0,420.0 Q1150.0,470.0 1147.5,495.0 L1145.0,520.0" fill="none" stroke="#62b4e6" stroke-width="2" stroke-linejoin="round" stroke-linecap="round" opacity="1"/>
<path d="M1093.0,380.0 Q1096.0,420.0 1095.0,445.0 Q1094.0,470.0 1096.0,495.0 Q1098.0,520.0 1101.0,540.0 Q1104.0,560.0 1108.0,575.0 Q1112.0,590.0 1115.0,596.0 L1118.0,602.0" fill="none" stroke="#3f72d2" stroke-width="2.3" stroke-linejoin="round" stroke-linecap="round" opacity="1"/>
<path d="M1100.0,390.0 Q1112.0,440.0 1117.0,460.0 Q1122.0,480.0 1123.0,500.0 Q1124.0,520.0 1120.0,540.0 Q1116.0,560.0 1113.0,575.0 L1110.0,590.0" fill="none" stroke="#3f72d2" stroke-width="2.3" stroke-linejoin="round" stroke-linecap="round" opacity="1"/>
<path d="M1003.0,508.0 Q1030.0,532.0 1045.0,546.0 Q1060.0,560.0 1072.5,572.5 Q1085.0,585.0 1092.5,592.5 L1100.0,600.0" fill="none" stroke="#3f72d2" stroke-width="2.3" stroke-linejoin="round" stroke-linecap="round" opacity="1"/>
<path d="M1104.0,600.0 Q1090.0,625.0 1088.0,637.5 Q1086.0,650.0 1080.0,670.0 Q1074.0,690.0 1066.0,705.0 Q1058.0,720.0 1050.0,735.0 Q1042.0,750.0 1036.0,765.0 Q1030.0,780.0 1032.0,797.5 Q1034.0,815.0 1042.0,830.0 Q1050.0,845.0 1061.0,860.0 Q1072.0,875.0 1083.0,890.0 Q1094.0,905.0 1102.0,920.0 Q1110.0,935.0 1113.0,942.5 L1116.0,950.0" fill="none" stroke="#3f72d2" stroke-width="2.3" stroke-linejoin="round" stroke-linecap="round" opacity="1"/>
<path d="M1030.0,770.0 Q1012.0,810.0 1008.0,830.0 Q1004.0,850.0 1010.0,865.0 Q1016.0,880.0 1030.0,889.0 L1044.0,898.0" fill="none" stroke="#3f72d2" stroke-width="2.3" stroke-linejoin="round" stroke-linecap="round" opacity="1"/>
<path d="M1050.0,830.0 Q1070.0,850.0 1077.5,865.0 Q1085.0,880.0 1092.5,890.0 L1100.0,900.0" fill="none" stroke="#3f72d2" stroke-width="2.3" stroke-linejoin="round" stroke-linecap="round" opacity="1"/>
<path d="M1134.0,608.0 Q1160.0,630.0 1175.0,642.5 Q1190.0,655.0 1204.0,672.5 Q1218.0,690.0 1223.0,696.0 L1228.0,702.0" fill="none" stroke="#3f72d2" stroke-width="2.3" stroke-linejoin="round" stroke-linecap="round" opacity="1"/>
<path d="M1055.0,590.0 Q1070.0,602.0 1080.0,601.0 Q1090.0,600.0 1104.0,598.0 Q1118.0,596.0 1129.0,593.0 Q1140.0,590.0 1150.0,585.0 L1160.0,580.0" fill="none" stroke="#3f72d2" stroke-width="2.3" stroke-linejoin="round" stroke-linecap="round" opacity="1"/>
<path d="M1066.0,565.0 Q1090.0,545.0 1100.0,537.5 Q1110.0,530.0 1122.5,545.0 Q1135.0,560.0 1137.5,580.0 L1140.0,600.0" fill="none" stroke="#3f72d2" stroke-width="2.3" stroke-linejoin="round" stroke-linecap="round" opacity="1"/>
<path d="M1110.0,560.0 Q1130.0,548.0 1140.0,546.5 L1150.0,545.0" fill="none" stroke="#3f72d2" stroke-width="2.3" stroke-linejoin="round" stroke-linecap="round" opacity="1"/>
<path d="M1060.0,830.0 Q1040.0,860.0 1035.0,875.0 L1030.0,890.0" fill="none" stroke="#3f72d2" stroke-width="2.3" stroke-linejoin="round" stroke-linecap="round" opacity="1"/>
<path d="M1020.0,800.0 Q1045.0,805.0 1057.5,802.5 L1070.0,800.0" fill="none" stroke="#3f72d2" stroke-width="2.3" stroke-linejoin="round" stroke-linecap="round" opacity="1"/>
<path d="M1080.0,520.0 Q1095.0,545.0 1097.5,560.0 Q1100.0,575.0 1097.5,587.5 L1095.0,600.0" fill="none" stroke="#3f72d2" stroke-width="2.3" stroke-linejoin="round" stroke-linecap="round" opacity="1"/>
<path d="M1070.0,575.0 Q1085.0,560.0 1095.0,557.5 Q1105.0,555.0 1115.0,560.0 Q1125.0,565.0 1130.0,575.0 L1135.0,585.0" fill="none" stroke="#3f72d2" stroke-width="2.3" stroke-linejoin="round" stroke-linecap="round" opacity="1"/>
<path d="M1090.0,470.0 Q1075.0,500.0 1072.5,515.0 Q1070.0,530.0 1074.0,545.0 L1078.0,560.0" fill="none" stroke="#3f72d2" stroke-width="2.3" stroke-linejoin="round" stroke-linecap="round" opacity="1"/>
<path d="M1118.0,520.0 Q1130.0,545.0 1129.0,560.0 Q1128.0,575.0 1124.0,586.5 L1120.0,598.0" fill="none" stroke="#3f72d2" stroke-width="2.3" stroke-linejoin="round" stroke-linecap="round" opacity="1"/>
<path d="M1060.0,600.0 Q1075.0,615.0 1081.5,620.0 L1088.0,625.0" fill="none" stroke="#3f72d2" stroke-width="2.3" stroke-linejoin="round" stroke-linecap="round" opacity="1"/>
<path d="M1036.0,790.0 Q1020.0,830.0 1022.5,850.0 Q1025.0,870.0 1037.5,880.0 Q1050.0,890.0 1062.5,895.0 L1075.0,900.0" fill="none" stroke="#3f72d2" stroke-width="2.3" stroke-linejoin="round" stroke-linecap="round" opacity="1"/>
<path d="M1031.5,343 L1031.5,337 L1035,333 L1038.5,337 L1038.5,343 L1035,339 Z" fill="#e02a2a"/>
<path d="M1090.5,372 L1090.5,366 L1094,362 L1097.5,366 L1097.5,372 L1094,368 Z" fill="#e02a2a"/>
<path d="M1039.5,437 L1039.5,431 L1043,427 L1046.5,431 L1046.5,437 L1043,433 Z" fill="#e02a2a"/>
<path d="M1095.5,440 L1095.5,434 L1099,430 L1102.5,434 L1102.5,440 L1099,436 Z" fill="#e02a2a"/>
<path d="M1139.5,458 L1139.5,452 L1143,448 L1146.5,452 L1146.5,458 L1143,454 Z" fill="#e02a2a"/>
<path d="M1223.5,458 L1223.5,452 L1227,448 L1230.5,452 L1230.5,458 L1227,454 Z" fill="#e02a2a"/>
<path d="M1247.5,470 L1247.5,464 L1251,460 L1254.5,464 L1254.5,470 L1251,466 Z" fill="#e02a2a"/>
<path d="M1287.5,419 L1287.5,413 L1291,409 L1294.5,413 L1294.5,419 L1291,415 Z" fill="#e02a2a"/>
<path d="M1324.5,520 L1324.5,514 L1328,510 L1331.5,514 L1331.5,520 L1328,516 Z" fill="#e02a2a"/>
<path d="M1189.5,532 L1189.5,526 L1193,522 L1196.5,526 L1196.5,532 L1193,528 Z" fill="#e02a2a"/>
<path d="M1115.5,540 L1115.5,534 L1119,530 L1122.5,534 L1122.5,540 L1119,536 Z" fill="#e02a2a"/>
<path d="M1086.5,557 L1086.5,551 L1090,547 L1093.5,551 L1093.5,557 L1090,553 Z" fill="#e02a2a"/>
<path d="M1112.5,585 L1112.5,579 L1116,575 L1119.5,579 L1119.5,585 L1116,581 Z" fill="#e02a2a"/>
<path d="M1128.5,621 L1128.5,615 L1132,611 L1135.5,615 L1135.5,621 L1132,617 Z" fill="#e02a2a"/>
<path d="M1080.5,649 L1080.5,643 L1084,639 L1087.5,643 L1087.5,649 L1084,645 Z" fill="#e02a2a"/>
<path d="M1085.5,861 L1085.5,855 L1089,851 L1092.5,855 L1092.5,861 L1089,857 Z" fill="#e02a2a"/>
<path d="M1027.5,876 L1027.5,870 L1031,866 L1034.5,870 L1034.5,876 L1031,872 Z" fill="#e02a2a"/>
<path d="M1113.5,923 L1113.5,917 L1117,913 L1120.5,917 L1120.5,923 L1117,919 Z" fill="#e02a2a"/>
</svg>
<div class="b" style="left:1247px;top:668px;width:191px;height:249px;border:1.5px solid #8a8a8a;background:#fff;"></div>
<div class="t" style="top:675.5px;font-size:10px;color:#333;font-family:'Liberation Sans',sans-serif;font-weight:bold;left:1307.2px;width:37.6px;transform-origin:17.8px 0;transform:scaleX(2.193);">Legend</div>
<div class="b" style="left:1252px;top:715px;width:15px;height:2px;background:#cfcfcf;"></div>
<div class="t" style="top:712.2px;font-size:8px;color:#666;font-family:'Liberation Sans',sans-serif;left:1270.0px;transform-origin:0 0;transform:scaleX(1.083);">Highway network</div>
<div class="b" style="left:1252px;top:728px;width:15px;height:2px;background:#ececec;"></div>
<div class="t" style="top:725.2px;font-size:8px;color:#666;font-family:'Liberation Sans',sans-serif;left:1270.0px;transform-origin:0 0;transform:scaleX(1.143);">Survey route 2565</div>
<div class="t" style="top:742.2px;font-size:8px;color:#666;font-family:'Liberation Sans',sans-serif;left:1252.0px;transform-origin:0 0;transform:scaleX(1.165);">Survey routes (past)</div>
<div class="b" style="left:1252px;top:757px;width:15px;height:2px;background:#3f72d2;"></div>
<div class="t" style="top:754.2px;font-size:8px;color:#666;font-family:'Liberation Sans',sans-serif;left:1270.0px;transform-origin:0 0;transform:scaleX(1.067);">LCMS Unit 1</div>
<div class="b" style="left:1252px;top:770px;width:15px;height:2px;background:#62b2e4;"></div>
<div class="t" style="top:767.2px;font-size:8px;color:#666;font-family:'Liberation Sans',sans-serif;left:1270.0px;transform-origin:0 0;transform:scaleX(1.067);">LCMS Unit 2</div>
<div class="t" style="top:783.2px;font-size:8px;color:#666;font-family:'Liberation Sans',sans-serif;left:1252.0px;transform-origin:0 0;transform:scaleX(1.089);">Survey routes 2566</div>
<div class="b" style="left:1252px;top:799px;width:15px;height:2px;background:#a060e0;"></div>
<div class="t" style="top:796.2px;font-size:8px;color:#666;font-family:'Liberation Sans',sans-serif;left:1270.0px;transform-origin:0 0;transform:scaleX(1.067);">LCMS Unit 1</div>
<div class="b" style="left:1252px;top:811px;width:15px;height:2px;background:#d0a0f0;"></div>
<div class="t" style="top:808.2px;font-size:8px;color:#666;font-family:'Liberation Sans',sans-serif;left:1270.0px;transform-origin:0 0;transform:scaleX(1.067);">LCMS Unit 2</div>
<div class="b" style="left:1252px;top:825px;width:15px;height:2px;background:#f0c040;"></div>
<div class="t" style="top:822.2px;font-size:8px;color:#666;font-family:'Liberation Sans',sans-serif;left:1270.0px;transform-origin:0 0;transform:scaleX(1.242);">Laser Profilometer Unit 1</div>
<div class="b" style="left:1252px;top:837px;width:15px;height:2px;background:#c0b040;"></div>
<div class="t" style="top:834.2px;font-size:8px;color:#666;font-family:'Liberation Sans',sans-serif;left:1270.0px;transform-origin:0 0;transform:scaleX(1.242);">Laser Profilometer Unit 2</div>
<div class="t" style="top:851.2px;font-size:8px;color:#666;font-family:'Liberation Sans',sans-serif;left:1252.0px;transform-origin:0 0;transform:scaleX(1.070);">Survey area</div>
<div class="b" style="left:1252px;top:861px;width:15px;height:12px;background:#e7b6d6;border:1px solid #777;"></div>
<div class="t" style="top:863.2px;font-size:8px;color:#666;font-family:'Liberation Sans',sans-serif;left:1270.0px;transform-origin:0 0;transform:scaleX(1.006);">Team 1</div>
<div class="b" style="left:1252px;top:874px;width:15px;height:12px;background:#f3d9aa;border:1px solid #777;"></div>
<div class="t" style="top:876.2px;font-size:8px;color:#666;font-family:'Liberation Sans',sans-serif;left:1270.0px;transform-origin:0 0;transform:scaleX(1.006);">Team 2</div>
<div class="b" style="left:1252px;top:887px;width:15px;height:12px;background:#e03a68;border:1px solid #777;"></div>
<div class="t" style="top:889.2px;font-size:8px;color:#666;font-family:'Liberation Sans',sans-serif;left:1270.0px;transform-origin:0 0;transform:scaleX(1.120);">Not surveyed</div>
<div class="b" style="left:1270px;top:932px;width:139px;height:29px;border:1.5px solid #8a8a8a;background:#fff;"></div>
<div class="t" style="top:938.2px;font-size:8px;color:#555;font-family:'Liberation Sans',sans-serif;left:1277.0px;transform-origin:0 0;">70</div>
<div class="t" style="top:938.2px;font-size:8px;color:#555;font-family:'Liberation Sans',sans-serif;left:1307.0px;transform-origin:0 0;">0</div>
<div class="t" style="top:938.2px;font-size:8px;color:#555;font-family:'Liberation Sans',sans-serif;left:1339.0px;transform-origin:0 0;">70</div>
<div class="t" style="top:938.2px;font-size:8px;color:#555;font-family:'Liberation Sans',sans-serif;left:1365.0px;transform-origin:0 0;">140 km</div>
<div class="b" style="left:1277px;top:951px;width:96px;height:5px;background:#111;"></div>
<div class="b" style="left:1279px;top:952px;width:27px;height:3px;background:#fff;"></div>
<div class="b" style="left:1340px;top:952px;width:31px;height:3px;background:#fff;"></div>
<div class="t" style="top:975.2px;font-size:8px;color:#777;font-family:'Liberation Sans',sans-serif;left:1296.0px;transform-origin:0 0;">Scale</div>
<div class="t" style="top:975.2px;font-size:8px;color:#777;font-family:'Liberation Sans',sans-serif;left:1342.0px;transform-origin:0 0;">1:5800000</div>
<svg style="left:1467px;top:191px" width="33" height="844" viewBox="1467 191 33 844">
<rect x="1467" y="191" width="33" height="844" fill="#ffffff"/>
<path d="M1467 191 H1500 V328 Q1480 322 1467 321 Z" fill="#e6e3e7"/>
<path d="M1467 321 Q1480 322 1500 328 V502 Q1480 492 1467 486 Z" fill="#485570"/>
<path d="M1500 905 Q1480 925 1467 938 V1035 H1500 Z" fill="#485570"/>
<path d="M1467 938 L1479 934 L1484 956 L1467 961 Z" fill="#3a68cc"/>
<rect x="1467" y="191" width="1.3" height="844" fill="#9a9a9a"/>
</svg>
<div class="t" style="top:987.9px;font-size:19px;color:#ffffff;font-family:'Liberation Serif',serif;font-style:italic;left:1480.0px;transform-origin:0 0;">7</div>
<div class="b" style="left:0px;top:1035px;width:1500px;height:19px;background:#1a1a1a;"></div>
<div class="b" style="left:0px;top:1054px;width:1500px;height:71px;background:linear-gradient(90deg,#e1e8f3 0%,#dde5f4 18%,#d6e0f5 38%,#d9dff3 58%,#dfe3f1 80%,#e3e7f2 100%);"></div>
<svg style="left:0;top:1054px" width="1500" height="71" viewBox="0 1054 1500 71">
<defs>
<linearGradient id="win" x1="0" y1="0" x2="1" y2="1"><stop offset="0" stop-color="#38b6f4"/><stop offset="1" stop-color="#0a6fd0"/></linearGradient>
<linearGradient id="fold" x1="0" y1="0" x2="0" y2="1"><stop offset="0" stop-color="#fcd45a"/><stop offset="1" stop-color="#f0b830"/></linearGradient>
<linearGradient id="edge1" x1="0" y1="0" x2="1" y2="1"><stop offset="0" stop-color="#2ac0d8"/><stop offset="0.6" stop-color="#50d070"/><stop offset="1" stop-color="#8fe04a"/></linearGradient>
<linearGradient id="edge2" x1="0" y1="0" x2="1" y2="1"><stop offset="0" stop-color="#1a8ae0"/><stop offset="1" stop-color="#0c4a9a"/></linearGradient>
<linearGradient id="zm" x1="0" y1="0" x2="0" y2="1"><stop offset="0" stop-color="#2a7bff"/><stop offset="1" stop-color="#0b4fe0"/></linearGradient>
<linearGradient id="pp" x1="0" y1="0" x2="1" y2="1"><stop offset="0" stop-color="#f8906a"/><stop offset="1" stop-color="#d0401a"/></linearGradient>
</defs>
<rect x="31" y="1074" width="16" height="16" rx="1.5" fill="url(#win)"/><rect x="49" y="1074" width="16" height="16" rx="1.5" fill="url(#win)"/>
<rect x="31" y="1092" width="16" height="16" rx="1.5" fill="url(#win)"/><rect x="49" y="1092" width="16" height="16" rx="1.5" fill="url(#win)"/>
<rect x="87" y="1068" width="142" height="44" rx="22" fill="#f7f9fd" stroke="#e4e8f0" stroke-width="1"/>
<circle cx="129" cy="1087" r="7" fill="none" stroke="#222" stroke-width="2"/><line x1="124" y1="1092" x2="118" y2="1099" stroke="#222" stroke-width="2.2" stroke-linecap="round"/>
<path d="M250 1077 h12 l3 3 h-15 z" fill="#e0a020"/>
<rect x="250" y="1080" width="36" height="25" rx="1" fill="url(#fold)"/>
<rect x="256" y="1094" width="24" height="11" rx="2" fill="#1a80d8"/>
<circle cx="332" cy="1089.5" r="17.5" fill="url(#edge1)"/>
<path d="M315 1092 a17.5 17.5 0 0 0 33 8 q-8 6 -16 2 q-8 -4 -5 -12 q-6 -4 -12 2 z" fill="url(#edge2)"/>
<path d="M326 1092 a6 6 0 0 1 12 -1 q-2 2 -6 3 q-4 0 -6 -2 z" fill="#fff" opacity="0.9"/>
<rect x="369" y="1062" width="50" height="56" rx="5" fill="#eef1f9" stroke="#dde2ec" stroke-width="1"/>
<rect x="419" y="1064" width="5" height="52" rx="2" fill="#e9edf6"/>
<rect x="379" y="1072" width="35" height="35" rx="15" fill="url(#zm)"/>
<rect x="386" y="1114" width="22" height="3.5" rx="1.7" fill="#0a64c8"/>
<circle cx="465" cy="1089" r="15" fill="url(#pp)"/>
<path d="M465 1074 a15 15 0 0 1 15 15 h-15 z" fill="#f4a080"/>
<rect x="444" y="1079" width="19" height="20" rx="2" fill="#c43e1c"/>
<rect x="457" y="1114.5" width="9" height="3" rx="1.5" fill="#6a6a70"/>
<path d="M1087 1095 L1096 1085 L1105 1095" fill="none" stroke="#222" stroke-width="1.8"/>
<rect x="1132" y="1072" width="10" height="18" rx="5" fill="none" stroke="#3a6fd8" stroke-width="2"/>
<path d="M1128 1086 a8 8 0 0 0 18 0 M1137 1094 v7" fill="none" stroke="#3a6fd8" stroke-width="2"/>
<rect x="1236" y="1080" width="19" height="15" rx="1.5" fill="none" stroke="#222" stroke-width="1.6"/>
<path d="M1240 1101 h12 M1246 1095 v6" stroke="#222" stroke-width="1.6"/>
<rect x="1252" y="1078" width="6" height="9" rx="3" fill="#e6ebf5" stroke="#222" stroke-width="1.4"/>
<path d="M1272 1085 h4 l6 -5 v18 l-6 -5 h-4 z" fill="none" stroke="#222" stroke-width="1.5"/>
<path d="M1285 1084 q3 5 0 10 M1289 1081 q5 8 0 16 M1293 1079 q6 10 0 20" fill="none" stroke="#222" stroke-width="1.4"/>
<rect x="1311" y="1083" width="16" height="13" rx="2" fill="none" stroke="#222" stroke-width="1.6"/>
<rect x="1327" y="1087" width="3" height="5" fill="#222"/>
<path d="M1307 1082 h6 M1309 1079 v5 M1312 1079 v5 M1310 1086 v8" stroke="#222" stroke-width="1.5"/>
<path d="M1458 1081 a10 10 0 1 0 12 14 a9 9 0 0 1 -12 -14 z" fill="none" stroke="#222" stroke-width="1.5"/>
</svg>
<div class="t" style="top:1081.8px;font-size:19px;color:#1e1e1e;font-family:'Liberation Sans',sans-serif;left:146.0px;transform-origin:0 0;transform:scaleX(0.897);">Search</div>
<div class="t" style="left:379px;top:1083px;width:35px;text-align:center;font-size:8.5px;color:#fff;font-weight:bold;letter-spacing:-0.3px">zoom</div>
<div class="t" style="top:1081.5px;font-size:17px;color:#ffffff;font-family:'Liberation Sans',sans-serif;font-weight:bold;left:449.0px;transform-origin:0 0;">P</div>
<div class="t" style="top:1083.1px;font-size:17px;color:#222;font-family:'Liberation Sans',sans-serif;left:1175.5px;transform-origin:0 0;transform:scaleX(0.909);">ENG</div>
<div class="t" style="top:1070.8px;font-size:16px;color:#222;font-family:'Liberation Sans',sans-serif;left:1370.9px;width:61.6px;transform-origin:59.6px 0;transform:scaleX(1.006);">1:47 PM</div>
<div class="t" style="top:1093.9px;font-size:16px;color:#222;font-family:'Liberation Sans',sans-serif;left:1359.2px;width:73.2px;transform-origin:71.2px 0;transform:scaleX(1.109);">12/6/2022</div>
</body></html>
